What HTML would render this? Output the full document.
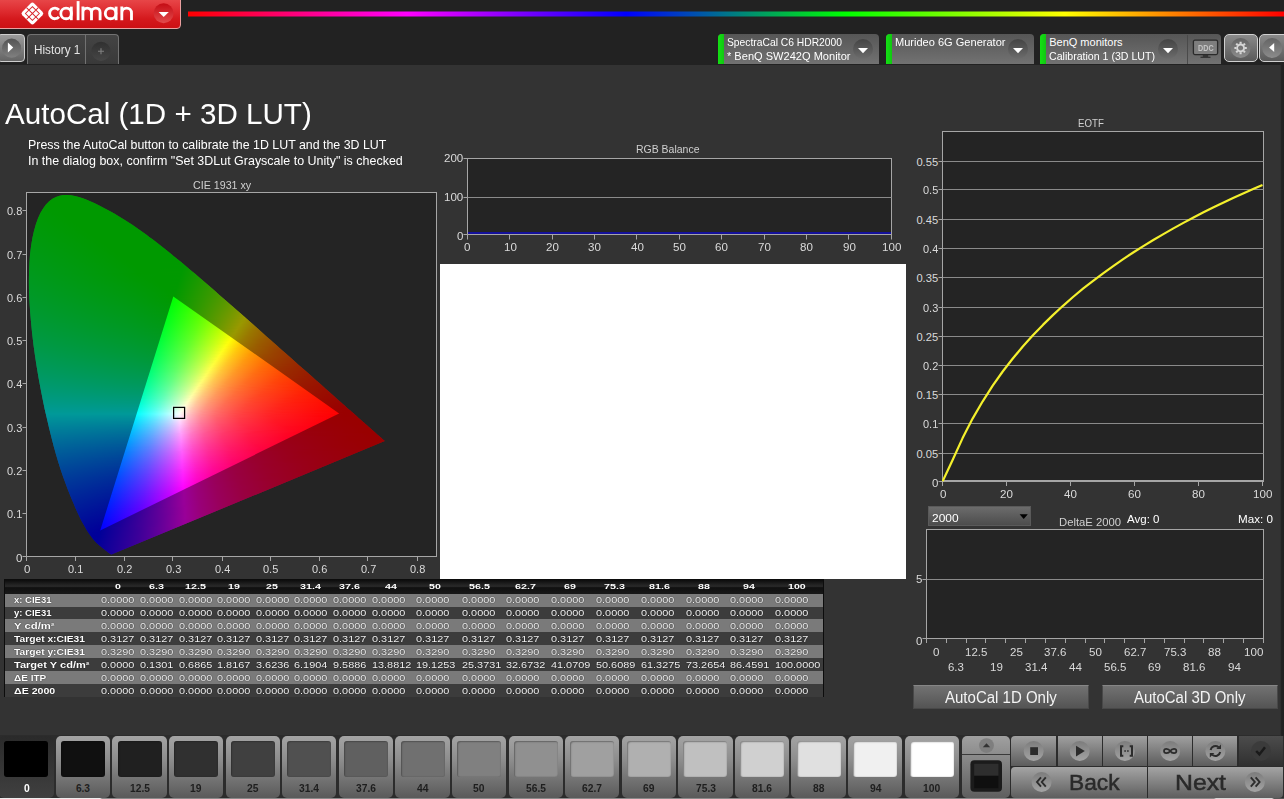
<!DOCTYPE html>
<html><head><meta charset="utf-8"><title>Calman - AutoCal (1D + 3D LUT)</title>
<style>
html,body{margin:0;padding:0;background:#333;overflow:hidden;}
html{width:1284px;height:799px;}
body{width:1284px;height:799px;position:relative;overflow:hidden;font-family:"Liberation Sans",sans-serif;}
div,span.t,svg.a{position:absolute;box-sizing:border-box;}
span.t{white-space:pre;line-height:1;transform-origin:0 0;}

.btn{background:linear-gradient(#a2a2a2,#5c5c5c);border-radius:4px;}
.circ{border-radius:50%;}

</style></head><body>
<div id="app" style="left:0;top:0;width:1284px;height:799px;overflow:hidden;">
<div style="left:0px;top:0px;width:1284px;height:65px;background:#222;"></div>
<div style="left:188px;top:11px;width:1096px;height:6px;background:linear-gradient(90deg,#f00 0%,#f0f 20%,#00f 40%,#0f0 60%,#ff0 80%,#f00 100%);opacity:.5;"></div>
<div style="left:188px;top:12px;width:1096px;height:4px;background:linear-gradient(90deg,#f00 0%,#f0f 20%,#00f 40%,#0f0 60%,#ff0 80%,#f00 100%);"></div>
<div style="left:-2px;top:-2px;width:182.8px;height:30.8px;background:linear-gradient(#e8484a 0%,#e03034 35%,#d4181c 70%,#cc1014 100%);border:1px solid #eaa0a0;border-radius:0 0 4px 0;"></div>
<svg class="a" style="left:0;top:0" width="182" height="30" viewBox="0 0 182 30">
<g transform="translate(32.4,13.5) rotate(45)">
<rect x="-8.4" y="-8.4" width="16.800" height="16.800" rx="2.6" fill="#fff"/>
<path d="M-4.9,-4.9H4.9V4.9H-4.9ZM0,-8.4V8.4M-8.4,0H8.4" fill="none" stroke="#d8262c" stroke-width="0.95"/>
</g>
<defs><linearGradient id="cg" x1="0" y1="0" x2="0" y2="1"><stop offset="0" stop-color="#c40c14"/><stop offset="1" stop-color="#e24a4c"/></linearGradient></defs>
<circle cx="163.600" cy="13.2" r="10" fill="url(#cg)"/>
<path d="M158.600,12.100h10.200l-5.100,5z" fill="#fff"/>
<g fill="none" stroke="#fff" stroke-width="2.85" aria-label="calman">
<path d="M58.960,9.990A5.300,5.300 0 1 0 58.960,16.810"/>
<circle cx="66.100" cy="13.400" r="5.300"/><path d="M71.300,6.600V20.200"/>
<path d="M78.100,1.100V20.200"/>
<path d="M82.900,20.200V6.600M82.900,12.400A4.300,4.300 0 0 1 91.500,12.400V20.200M91.500,12.400A4.300,4.300 0 0 1 100.100,12.400V20.200"/>
<circle cx="110.600" cy="13.400" r="5.300"/><path d="M116.100,6.600V20.200"/>
<path d="M121.800,20.200V6.600M121.800,12.950A4.850,4.850 0 0 1 131.500,12.950V20.200"/>
</g>
</svg>
<div style="left:-3px;top:34px;width:28px;height:27.8px;background:linear-gradient(#9a9a9a,#646464);border:1px solid #cecece;border-radius:4px;"></div>
<svg class="a" style="left:0;top:34px" width="26" height="28"><defs><linearGradient id="pg" x1="0" y1="0" x2="0" y2="1"><stop offset="0" stop-color="#545454"/><stop offset="1" stop-color="#808080"/></linearGradient></defs><circle cx="11.600" cy="14.2" r="9.600" fill="url(#pg)"/><path d="M7.900,8.400v10.200l5.300,-5.100z" fill="#fff"/></svg>
<div style="left:27px;top:34px;width:92px;height:30px;background:linear-gradient(#444,#393939);border:1px solid #727272;border-bottom:none;border-radius:4px 4px 0 0;"></div>
<div style="left:85px;top:35px;width:1px;height:29px;background:#727272;"></div>
<span class="t" style="left:33.70px;top:44.30px;font-size:12.00px;color:#e4e4e4;transform:scaleX(0.9780);">History 1</span>
<svg class="a" style="left:86px;top:36px" width="32" height="30"><defs><linearGradient id="pg2" x1="0" y1="0" x2="0" y2="1"><stop offset="0" stop-color="#303030"/><stop offset="1" stop-color="#464646"/></linearGradient></defs><circle cx="15" cy="15.3" r="9.600" fill="url(#pg2)"/><path d="M15,12.300v6M12,15.300h6" stroke="#808080" stroke-width="1.100"/></svg>
<svg class="a" width="0" height="0"><defs><linearGradient id="bg1" x1="0" y1="0" x2="0" y2="1"><stop offset="0" stop-color="#7c7c7c"/><stop offset="1" stop-color="#a4a4a4"/></linearGradient><linearGradient id="dg" x1="0" y1="0" x2="0" y2="1"><stop offset="0" stop-color="#444"/><stop offset="1" stop-color="#6c6c6c"/></linearGradient></defs></svg>
<div style="left:717.5px;top:34px;width:161.5px;height:30px;background:linear-gradient(#565656,#727272);border-radius:4px 4px 0 0;overflow:hidden;"><div style="left:0;top:0;width:6px;height:30px;background:linear-gradient(90deg,#14e014,#10c810);"></div></div>
<span class="t" style="left:726.90px;top:36.80px;font-size:11.00px;color:#fff;transform:scaleX(0.9358);">SpectraCal C6 HDR2000</span>
<span class="t" style="left:726.90px;top:50.80px;font-size:11.00px;color:#fff;transform:scaleX(1.0050);">* BenQ SW242Q Monitor</span>
<svg class="a" style="left:851.8px;top:38px" width="22" height="22"><circle cx="11" cy="11" r="10" fill="url(#dg)"/><path d="M6,10h10l-5,5.2z" fill="#fff"/></svg>
<div style="left:885.5px;top:34px;width:148.5px;height:30px;background:linear-gradient(#565656,#727272);border-radius:4px 4px 0 0;overflow:hidden;"><div style="left:0;top:0;width:6px;height:30px;background:linear-gradient(90deg,#14e014,#10c810);"></div></div>
<span class="t" style="left:894.90px;top:36.80px;font-size:11.00px;color:#fff;transform:scaleX(1.0041);">Murideo 6G Generator</span>
<svg class="a" style="left:1006.9px;top:38px" width="22" height="22"><circle cx="11" cy="11" r="10" fill="url(#dg)"/><path d="M6,10h10l-5,5.2z" fill="#fff"/></svg>
<div style="left:1039.8px;top:34px;width:181.2px;height:30px;background:linear-gradient(#565656,#727272);border-radius:4px 4px 0 0;overflow:hidden;"><div style="left:0;top:0;width:6px;height:30px;background:linear-gradient(90deg,#14e014,#10c810);"></div></div>
<span class="t" style="left:1049.20px;top:36.80px;font-size:11.00px;color:#fff;">BenQ monitors</span>
<span class="t" style="left:1049.20px;top:50.80px;font-size:11.00px;color:#fff;transform:scaleX(0.9634);">Calibration 1 (3D LUT)</span>
<svg class="a" style="left:1157px;top:38px" width="22" height="22"><circle cx="11" cy="11" r="10" fill="url(#dg)"/><path d="M6,10h10l-5,5.2z" fill="#fff"/></svg>
<div style="left:1187px;top:35px;width:1px;height:29px;background:#4a4a4a;"></div>
<svg class="a" style="left:1190px;top:38px" width="30" height="22"><rect x="3.4" y="2.2" width="24.200" height="14.400" rx="1.5" fill="#7e7e7e" stroke="#2a2a2a" stroke-width="1.3"/><path d="M10.500,19.300h10" stroke="#333" stroke-width="1.300"/><path d="M12.800,17v2h5.400V17" fill="#333"/></svg>
<span class="t" style="left:1197.60px;top:44.05px;font-size:8.50px;color:#c4c4c4;font-weight:700;transform:scaleX(0.8471);">DDC</span>
<div style="left:1224px;top:34px;width:34px;height:28px;background:linear-gradient(#8a8a8a,#5a5a5a);border:1px solid #d0d0d0;border-radius:5px;"></div>
<div style="left:1258.5px;top:34px;width:30px;height:28px;background:linear-gradient(#8a8a8a,#5a5a5a);border:1px solid #d0d0d0;border-radius:5px;"></div>
<svg class="a" style="left:1226px;top:36px" width="60" height="26">
<circle cx="14.6" cy="12" r="10" fill="url(#dg2)"/><circle cx="46.2" cy="12" r="10" fill="url(#dg2)"/><defs><linearGradient id="dg2" x1="0" y1="0" x2="0" y2="1"><stop offset="0" stop-color="#646464"/><stop offset="1" stop-color="#8c8c8c"/></linearGradient></defs>
<g transform="translate(14.6,12)" fill="none" stroke="#d8d8d8"><circle r="3.5" stroke-width="1.8"/>
<path d="M0,-4.2V-6.2M0,4.2V6.2M-4.2,0H-6.2M4.2,0H6.2M2.97,2.97L4.38,4.38M-2.97,2.97L-4.38,4.38M2.97,-2.97L4.38,-4.38M-2.97,-2.97L-4.38,-4.38" stroke-width="2.1"/></g>
<path d="M48.2,7v9.1l-5.1,-4.55z" fill="#fff"/></svg>
<span class="t" style="left:4.60px;top:100.00px;font-size:28.60px;color:#fff;transform:scaleX(1.0350);">AutoCal (1D + 3D LUT)</span>
<span class="t" style="left:27.50px;top:139.00px;font-size:12.60px;color:#fff;transform:scaleX(0.9831);">Press the AutoCal button to calibrate the 1D LUT and the 3D LUT</span>
<span class="t" style="left:27.50px;top:155.00px;font-size:12.60px;color:#fff;transform:scaleX(0.9900);">In the dialog box, confirm "Set 3DLut Grayscale to Unity" is checked</span>
<span class="t" style="left:193.10px;top:179.80px;font-size:11.00px;color:#d0d0d0;transform:scaleX(0.9713);">CIE 1931 xy</span>
<span class="t" style="left:15.50px;top:552.70px;font-size:11.20px;color:#dadada;transform:scaleX(1.0276);">0</span>
<span class="t" style="left:23.60px;top:563.70px;font-size:11.20px;color:#dadada;transform:scaleX(1.0276);">0</span>
<span class="t" style="left:6.60px;top:508.70px;font-size:11.20px;color:#dadada;transform:scaleX(0.9828);">0.1</span>
<span class="t" style="left:68.01px;top:563.70px;font-size:11.20px;color:#dadada;transform:scaleX(0.9828);">0.1</span>
<span class="t" style="left:6.60px;top:465.70px;font-size:11.20px;color:#dadada;transform:scaleX(0.9828);">0.2</span>
<span class="t" style="left:116.87px;top:563.70px;font-size:11.20px;color:#dadada;transform:scaleX(0.9828);">0.2</span>
<span class="t" style="left:6.60px;top:422.70px;font-size:11.20px;color:#dadada;transform:scaleX(0.9828);">0.3</span>
<span class="t" style="left:165.73px;top:563.70px;font-size:11.20px;color:#dadada;transform:scaleX(0.9828);">0.3</span>
<span class="t" style="left:6.60px;top:378.70px;font-size:11.20px;color:#dadada;transform:scaleX(0.9828);">0.4</span>
<span class="t" style="left:214.59px;top:563.70px;font-size:11.20px;color:#dadada;transform:scaleX(0.9828);">0.4</span>
<span class="t" style="left:6.60px;top:335.70px;font-size:11.20px;color:#dadada;transform:scaleX(0.9828);">0.5</span>
<span class="t" style="left:263.45px;top:563.70px;font-size:11.20px;color:#dadada;transform:scaleX(0.9828);">0.5</span>
<span class="t" style="left:6.60px;top:292.70px;font-size:11.20px;color:#dadada;transform:scaleX(0.9828);">0.6</span>
<span class="t" style="left:312.31px;top:563.70px;font-size:11.20px;color:#dadada;transform:scaleX(0.9828);">0.6</span>
<span class="t" style="left:6.60px;top:249.70px;font-size:11.20px;color:#dadada;transform:scaleX(0.9828);">0.7</span>
<span class="t" style="left:361.17px;top:563.70px;font-size:11.20px;color:#dadada;transform:scaleX(0.9828);">0.7</span>
<span class="t" style="left:6.60px;top:205.70px;font-size:11.20px;color:#dadada;transform:scaleX(0.9828);">0.8</span>
<span class="t" style="left:410.03px;top:563.70px;font-size:11.20px;color:#dadada;transform:scaleX(0.9828);">0.8</span>
<span class="t" style="left:444.00px;top:152.70px;font-size:11.20px;color:#dadada;transform:scaleX(1.0329);">200</span>
<span class="t" style="left:444.00px;top:191.70px;font-size:11.20px;color:#dadada;transform:scaleX(1.0329);">100</span>
<span class="t" style="left:456.90px;top:230.70px;font-size:11.20px;color:#dadada;transform:scaleX(1.0276);">0</span>
<span class="t" style="left:464.47px;top:241.70px;font-size:11.20px;color:#dadada;transform:scaleX(1.0356);">0</span>
<span class="t" style="left:503.62px;top:241.70px;font-size:11.20px;color:#dadada;transform:scaleX(1.0356);">10</span>
<span class="t" style="left:545.99px;top:241.70px;font-size:11.20px;color:#dadada;transform:scaleX(1.0356);">20</span>
<span class="t" style="left:588.36px;top:241.70px;font-size:11.20px;color:#dadada;transform:scaleX(1.0356);">30</span>
<span class="t" style="left:630.73px;top:241.70px;font-size:11.20px;color:#dadada;transform:scaleX(1.0356);">40</span>
<span class="t" style="left:673.10px;top:241.70px;font-size:11.20px;color:#dadada;transform:scaleX(1.0356);">50</span>
<span class="t" style="left:715.47px;top:241.70px;font-size:11.20px;color:#dadada;transform:scaleX(1.0356);">60</span>
<span class="t" style="left:757.84px;top:241.70px;font-size:11.20px;color:#dadada;transform:scaleX(1.0356);">70</span>
<span class="t" style="left:800.21px;top:241.70px;font-size:11.20px;color:#dadada;transform:scaleX(1.0356);">80</span>
<span class="t" style="left:842.58px;top:241.70px;font-size:11.20px;color:#dadada;transform:scaleX(1.0356);">90</span>
<span class="t" style="left:881.73px;top:241.70px;font-size:11.20px;color:#dadada;transform:scaleX(1.0356);">100</span>
<span class="t" style="left:636.05px;top:143.80px;font-size:11.00px;color:#d0d0d0;transform:scaleX(0.9528);">RGB Balance</span>
<div style="left:440px;top:264px;width:466px;height:314.5px;background:#fff;"></div>
<span class="t" style="left:931.80px;top:477.70px;font-size:11.20px;color:#dadada;transform:scaleX(1.0276);">0</span>
<span class="t" style="left:916.40px;top:448.70px;font-size:11.20px;color:#dadada;">0.05</span>
<span class="t" style="left:922.90px;top:418.70px;font-size:11.20px;color:#dadada;transform:scaleX(0.9828);">0.1</span>
<span class="t" style="left:916.40px;top:389.70px;font-size:11.20px;color:#dadada;">0.15</span>
<span class="t" style="left:922.90px;top:360.70px;font-size:11.20px;color:#dadada;transform:scaleX(0.9828);">0.2</span>
<span class="t" style="left:916.40px;top:331.70px;font-size:11.20px;color:#dadada;">0.25</span>
<span class="t" style="left:922.90px;top:302.70px;font-size:11.20px;color:#dadada;transform:scaleX(0.9828);">0.3</span>
<span class="t" style="left:916.40px;top:272.70px;font-size:11.20px;color:#dadada;">0.35</span>
<span class="t" style="left:922.90px;top:243.70px;font-size:11.20px;color:#dadada;transform:scaleX(0.9828);">0.4</span>
<span class="t" style="left:916.40px;top:214.70px;font-size:11.20px;color:#dadada;">0.45</span>
<span class="t" style="left:922.90px;top:184.70px;font-size:11.20px;color:#dadada;transform:scaleX(0.9828);">0.5</span>
<span class="t" style="left:916.40px;top:156.70px;font-size:11.20px;color:#dadada;">0.55</span>
<span class="t" style="left:939.57px;top:488.70px;font-size:11.20px;color:#dadada;transform:scaleX(1.0356);">0</span>
<span class="t" style="left:1000.35px;top:488.70px;font-size:11.20px;color:#dadada;transform:scaleX(1.0356);">20</span>
<span class="t" style="left:1064.35px;top:488.70px;font-size:11.20px;color:#dadada;transform:scaleX(1.0356);">40</span>
<span class="t" style="left:1128.35px;top:488.70px;font-size:11.20px;color:#dadada;transform:scaleX(1.0356);">60</span>
<span class="t" style="left:1192.35px;top:488.70px;font-size:11.20px;color:#dadada;transform:scaleX(1.0356);">80</span>
<span class="t" style="left:1253.12px;top:488.70px;font-size:11.20px;color:#dadada;transform:scaleX(1.0356);">100</span>
<span class="t" style="left:1077.50px;top:117.80px;font-size:11.00px;color:#d0d0d0;transform:scaleX(0.8796);">EOTF</span>
<span class="t" style="left:915.80px;top:573.70px;font-size:11.20px;color:#dadada;transform:scaleX(1.0276);">5</span>
<span class="t" style="left:915.80px;top:635.70px;font-size:11.20px;color:#dadada;transform:scaleX(1.0276);">0</span>
<span class="t" style="left:933.38px;top:646.70px;font-size:11.20px;color:#dadada;transform:scaleX(1.0356);">0</span>
<span class="t" style="left:948.49px;top:661.70px;font-size:11.20px;color:#dadada;transform:scaleX(1.0213);">6.3</span>
<span class="t" style="left:965.11px;top:646.70px;font-size:11.20px;color:#dadada;transform:scaleX(1.0254);">12.5</span>
<span class="t" style="left:989.67px;top:661.70px;font-size:11.20px;color:#dadada;transform:scaleX(1.0356);">19</span>
<span class="t" style="left:1009.51px;top:646.70px;font-size:11.20px;color:#dadada;transform:scaleX(1.0356);">25</span>
<span class="t" style="left:1024.62px;top:661.70px;font-size:11.20px;color:#dadada;transform:scaleX(1.0254);">31.4</span>
<span class="t" style="left:1044.47px;top:646.70px;font-size:11.20px;color:#dadada;transform:scaleX(1.0254);">37.6</span>
<span class="t" style="left:1069.03px;top:661.70px;font-size:11.20px;color:#dadada;transform:scaleX(1.0356);">44</span>
<span class="t" style="left:1088.87px;top:646.70px;font-size:11.20px;color:#dadada;transform:scaleX(1.0356);">50</span>
<span class="t" style="left:1103.99px;top:661.70px;font-size:11.20px;color:#dadada;transform:scaleX(1.0254);">56.5</span>
<span class="t" style="left:1123.83px;top:646.70px;font-size:11.20px;color:#dadada;transform:scaleX(1.0254);">62.7</span>
<span class="t" style="left:1148.39px;top:661.70px;font-size:11.20px;color:#dadada;transform:scaleX(1.0356);">69</span>
<span class="t" style="left:1163.51px;top:646.70px;font-size:11.20px;color:#dadada;transform:scaleX(1.0254);">75.3</span>
<span class="t" style="left:1183.35px;top:661.70px;font-size:11.20px;color:#dadada;transform:scaleX(1.0254);">81.6</span>
<span class="t" style="left:1207.91px;top:646.70px;font-size:11.20px;color:#dadada;transform:scaleX(1.0356);">88</span>
<span class="t" style="left:1227.75px;top:661.70px;font-size:11.20px;color:#dadada;transform:scaleX(1.0356);">94</span>
<span class="t" style="left:1244.37px;top:646.70px;font-size:11.20px;color:#dadada;transform:scaleX(1.0356);">100</span>
<span class="t" style="left:1059.40px;top:516.80px;font-size:11.00px;color:#d0d0d0;transform:scaleX(1.0241);">DeltaE 2000</span>
<span class="t" style="left:1126.80px;top:512.95px;font-size:11.70px;color:#fff;transform:scaleX(0.9862);">Avg: 0</span>
<span class="t" style="left:1238.20px;top:512.95px;font-size:11.70px;color:#fff;transform:scaleX(0.9969);">Max: 0</span>
<div style="left:928px;top:506px;width:103px;height:19.5px;background:linear-gradient(#6c6c6c,#4c4c4c);border:1px solid #5a5a5a;"></div>
<span class="t" style="left:931.80px;top:511.95px;font-size:11.70px;color:#fff;transform:scaleX(1.0221);">2000</span>
<div style="left:912.5px;top:685px;width:176.5px;height:24px;background:linear-gradient(#727272,#545454);border:1px solid #484848;border-top-color:#868686;"></div>
<div style="left:1101.5px;top:685px;width:176px;height:24px;background:linear-gradient(#727272,#545454);border:1px solid #484848;border-top-color:#868686;"></div>
<span class="t" style="left:945.00px;top:689.80px;font-size:16.00px;color:#f4f4f4;transform:scaleX(0.9382);">AutoCal 1D Only</span>
<span class="t" style="left:1134.00px;top:689.80px;font-size:16.00px;color:#f4f4f4;transform:scaleX(0.9357);">AutoCal 3D Only</span>
<div style="left:4px;top:579px;width:820px;height:118px;background:#0c0c0c;"></div>
<div style="left:5px;top:579.5px;width:818px;height:14.5px;background:linear-gradient(#0c0c0c 0%,#2a2a2a 45%,#101010 55%,#181818 100%);"></div>
<span class="t" style="left:114.85px;top:583.20px;font-size:7.20px;color:#fff;font-weight:700;transform:scaleX(1.4736);">0</span>
<span class="t" style="left:148.50px;top:583.20px;font-size:7.20px;color:#fff;font-weight:700;transform:scaleX(1.4988);">6.3</span>
<span class="t" style="left:184.55px;top:583.20px;font-size:7.20px;color:#fff;font-weight:700;transform:scaleX(1.4916);">12.5</span>
<span class="t" style="left:227.70px;top:583.20px;font-size:7.20px;color:#fff;font-weight:700;transform:scaleX(1.4736);">19</span>
<span class="t" style="left:266.30px;top:583.20px;font-size:7.20px;color:#fff;font-weight:700;transform:scaleX(1.4736);">25</span>
<span class="t" style="left:300.35px;top:583.20px;font-size:7.20px;color:#fff;font-weight:700;transform:scaleX(1.4916);">31.4</span>
<span class="t" style="left:338.95px;top:583.20px;font-size:7.20px;color:#fff;font-weight:700;transform:scaleX(1.4916);">37.6</span>
<span class="t" style="left:385.30px;top:583.20px;font-size:7.20px;color:#fff;font-weight:700;transform:scaleX(1.4736);">44</span>
<span class="t" style="left:429.40px;top:583.20px;font-size:7.20px;color:#fff;font-weight:700;transform:scaleX(1.4736);">50</span>
<span class="t" style="left:469.35px;top:583.20px;font-size:7.20px;color:#fff;font-weight:700;transform:scaleX(1.4916);">56.5</span>
<span class="t" style="left:514.95px;top:583.20px;font-size:7.20px;color:#fff;font-weight:700;transform:scaleX(1.4916);">62.7</span>
<span class="t" style="left:564.40px;top:583.20px;font-size:7.20px;color:#fff;font-weight:700;transform:scaleX(1.4736);">69</span>
<span class="t" style="left:604.05px;top:583.20px;font-size:7.20px;color:#fff;font-weight:700;transform:scaleX(1.4916);">75.3</span>
<span class="t" style="left:648.95px;top:583.20px;font-size:7.20px;color:#fff;font-weight:700;transform:scaleX(1.4916);">81.6</span>
<span class="t" style="left:698.40px;top:583.20px;font-size:7.20px;color:#fff;font-weight:700;transform:scaleX(1.4736);">88</span>
<span class="t" style="left:743.00px;top:583.20px;font-size:7.20px;color:#fff;font-weight:700;transform:scaleX(1.4736);">94</span>
<span class="t" style="left:787.95px;top:583.20px;font-size:7.20px;color:#fff;font-weight:700;transform:scaleX(1.4736);">100</span>
<div style="left:5px;top:594px;width:818px;height:13px;background:#7a7a7a;"></div>
<span class="t" style="left:13.80px;top:596.00px;font-size:8.60px;color:#fff;font-weight:700;transform:scaleX(1.1050);text-shadow:0 0 1px #000;">x: CIE31</span>
<span class="t" style="left:100.80px;top:595.65px;font-size:9.30px;color:#f2f2f2;transform:scaleX(1.1708);text-shadow:0 0 1px #000;">0.0000</span>
<span class="t" style="left:140.00px;top:595.65px;font-size:9.30px;color:#f2f2f2;transform:scaleX(1.1708);text-shadow:0 0 1px #000;">0.0000</span>
<span class="t" style="left:178.60px;top:595.65px;font-size:9.30px;color:#f2f2f2;transform:scaleX(1.1708);text-shadow:0 0 1px #000;">0.0000</span>
<span class="t" style="left:217.20px;top:595.65px;font-size:9.30px;color:#f2f2f2;transform:scaleX(1.1708);text-shadow:0 0 1px #000;">0.0000</span>
<span class="t" style="left:255.80px;top:595.65px;font-size:9.30px;color:#f2f2f2;transform:scaleX(1.1708);text-shadow:0 0 1px #000;">0.0000</span>
<span class="t" style="left:294.40px;top:595.65px;font-size:9.30px;color:#f2f2f2;transform:scaleX(1.1708);text-shadow:0 0 1px #000;">0.0000</span>
<span class="t" style="left:333.00px;top:595.65px;font-size:9.30px;color:#f2f2f2;transform:scaleX(1.1708);text-shadow:0 0 1px #000;">0.0000</span>
<span class="t" style="left:371.60px;top:595.65px;font-size:9.30px;color:#f2f2f2;transform:scaleX(1.1708);text-shadow:0 0 1px #000;">0.0000</span>
<span class="t" style="left:416.40px;top:595.65px;font-size:9.30px;color:#f2f2f2;transform:scaleX(1.1708);text-shadow:0 0 1px #000;">0.0000</span>
<span class="t" style="left:461.70px;top:595.65px;font-size:9.30px;color:#f2f2f2;transform:scaleX(1.1708);text-shadow:0 0 1px #000;">0.0000</span>
<span class="t" style="left:506.20px;top:595.65px;font-size:9.30px;color:#f2f2f2;transform:scaleX(1.1708);text-shadow:0 0 1px #000;">0.0000</span>
<span class="t" style="left:550.80px;top:595.65px;font-size:9.30px;color:#f2f2f2;transform:scaleX(1.1708);text-shadow:0 0 1px #000;">0.0000</span>
<span class="t" style="left:595.70px;top:595.65px;font-size:9.30px;color:#f2f2f2;transform:scaleX(1.1708);text-shadow:0 0 1px #000;">0.0000</span>
<span class="t" style="left:640.60px;top:595.65px;font-size:9.30px;color:#f2f2f2;transform:scaleX(1.1708);text-shadow:0 0 1px #000;">0.0000</span>
<span class="t" style="left:685.50px;top:595.65px;font-size:9.30px;color:#f2f2f2;transform:scaleX(1.1708);text-shadow:0 0 1px #000;">0.0000</span>
<span class="t" style="left:730.00px;top:595.65px;font-size:9.30px;color:#f2f2f2;transform:scaleX(1.1708);text-shadow:0 0 1px #000;">0.0000</span>
<span class="t" style="left:775.30px;top:595.65px;font-size:9.30px;color:#f2f2f2;transform:scaleX(1.1708);text-shadow:0 0 1px #000;">0.0000</span>
<div style="left:5px;top:607px;width:818px;height:12px;background:#3c3c3c;"></div>
<span class="t" style="left:13.80px;top:609.00px;font-size:8.60px;color:#fff;font-weight:700;transform:scaleX(1.1050);text-shadow:0 0 1px #000;">y: CIE31</span>
<span class="t" style="left:100.80px;top:608.65px;font-size:9.30px;color:#f2f2f2;transform:scaleX(1.1708);text-shadow:0 0 1px #000;">0.0000</span>
<span class="t" style="left:140.00px;top:608.65px;font-size:9.30px;color:#f2f2f2;transform:scaleX(1.1708);text-shadow:0 0 1px #000;">0.0000</span>
<span class="t" style="left:178.60px;top:608.65px;font-size:9.30px;color:#f2f2f2;transform:scaleX(1.1708);text-shadow:0 0 1px #000;">0.0000</span>
<span class="t" style="left:217.20px;top:608.65px;font-size:9.30px;color:#f2f2f2;transform:scaleX(1.1708);text-shadow:0 0 1px #000;">0.0000</span>
<span class="t" style="left:255.80px;top:608.65px;font-size:9.30px;color:#f2f2f2;transform:scaleX(1.1708);text-shadow:0 0 1px #000;">0.0000</span>
<span class="t" style="left:294.40px;top:608.65px;font-size:9.30px;color:#f2f2f2;transform:scaleX(1.1708);text-shadow:0 0 1px #000;">0.0000</span>
<span class="t" style="left:333.00px;top:608.65px;font-size:9.30px;color:#f2f2f2;transform:scaleX(1.1708);text-shadow:0 0 1px #000;">0.0000</span>
<span class="t" style="left:371.60px;top:608.65px;font-size:9.30px;color:#f2f2f2;transform:scaleX(1.1708);text-shadow:0 0 1px #000;">0.0000</span>
<span class="t" style="left:416.40px;top:608.65px;font-size:9.30px;color:#f2f2f2;transform:scaleX(1.1708);text-shadow:0 0 1px #000;">0.0000</span>
<span class="t" style="left:461.70px;top:608.65px;font-size:9.30px;color:#f2f2f2;transform:scaleX(1.1708);text-shadow:0 0 1px #000;">0.0000</span>
<span class="t" style="left:506.20px;top:608.65px;font-size:9.30px;color:#f2f2f2;transform:scaleX(1.1708);text-shadow:0 0 1px #000;">0.0000</span>
<span class="t" style="left:550.80px;top:608.65px;font-size:9.30px;color:#f2f2f2;transform:scaleX(1.1708);text-shadow:0 0 1px #000;">0.0000</span>
<span class="t" style="left:595.70px;top:608.65px;font-size:9.30px;color:#f2f2f2;transform:scaleX(1.1708);text-shadow:0 0 1px #000;">0.0000</span>
<span class="t" style="left:640.60px;top:608.65px;font-size:9.30px;color:#f2f2f2;transform:scaleX(1.1708);text-shadow:0 0 1px #000;">0.0000</span>
<span class="t" style="left:685.50px;top:608.65px;font-size:9.30px;color:#f2f2f2;transform:scaleX(1.1708);text-shadow:0 0 1px #000;">0.0000</span>
<span class="t" style="left:730.00px;top:608.65px;font-size:9.30px;color:#f2f2f2;transform:scaleX(1.1708);text-shadow:0 0 1px #000;">0.0000</span>
<span class="t" style="left:775.30px;top:608.65px;font-size:9.30px;color:#f2f2f2;transform:scaleX(1.1708);text-shadow:0 0 1px #000;">0.0000</span>
<div style="left:5px;top:619px;width:818px;height:13px;background:#7a7a7a;"></div>
<span class="t" style="left:13.80px;top:622.00px;font-size:8.60px;color:#fff;font-weight:700;transform:scaleX(1.3137);text-shadow:0 0 1px #000;">Y cd/m²</span>
<span class="t" style="left:100.80px;top:621.65px;font-size:9.30px;color:#f2f2f2;transform:scaleX(1.1708);text-shadow:0 0 1px #000;">0.0000</span>
<span class="t" style="left:140.00px;top:621.65px;font-size:9.30px;color:#f2f2f2;transform:scaleX(1.1708);text-shadow:0 0 1px #000;">0.0000</span>
<span class="t" style="left:178.60px;top:621.65px;font-size:9.30px;color:#f2f2f2;transform:scaleX(1.1708);text-shadow:0 0 1px #000;">0.0000</span>
<span class="t" style="left:217.20px;top:621.65px;font-size:9.30px;color:#f2f2f2;transform:scaleX(1.1708);text-shadow:0 0 1px #000;">0.0000</span>
<span class="t" style="left:255.80px;top:621.65px;font-size:9.30px;color:#f2f2f2;transform:scaleX(1.1708);text-shadow:0 0 1px #000;">0.0000</span>
<span class="t" style="left:294.40px;top:621.65px;font-size:9.30px;color:#f2f2f2;transform:scaleX(1.1708);text-shadow:0 0 1px #000;">0.0000</span>
<span class="t" style="left:333.00px;top:621.65px;font-size:9.30px;color:#f2f2f2;transform:scaleX(1.1708);text-shadow:0 0 1px #000;">0.0000</span>
<span class="t" style="left:371.60px;top:621.65px;font-size:9.30px;color:#f2f2f2;transform:scaleX(1.1708);text-shadow:0 0 1px #000;">0.0000</span>
<span class="t" style="left:416.40px;top:621.65px;font-size:9.30px;color:#f2f2f2;transform:scaleX(1.1708);text-shadow:0 0 1px #000;">0.0000</span>
<span class="t" style="left:461.70px;top:621.65px;font-size:9.30px;color:#f2f2f2;transform:scaleX(1.1708);text-shadow:0 0 1px #000;">0.0000</span>
<span class="t" style="left:506.20px;top:621.65px;font-size:9.30px;color:#f2f2f2;transform:scaleX(1.1708);text-shadow:0 0 1px #000;">0.0000</span>
<span class="t" style="left:550.80px;top:621.65px;font-size:9.30px;color:#f2f2f2;transform:scaleX(1.1708);text-shadow:0 0 1px #000;">0.0000</span>
<span class="t" style="left:595.70px;top:621.65px;font-size:9.30px;color:#f2f2f2;transform:scaleX(1.1708);text-shadow:0 0 1px #000;">0.0000</span>
<span class="t" style="left:640.60px;top:621.65px;font-size:9.30px;color:#f2f2f2;transform:scaleX(1.1708);text-shadow:0 0 1px #000;">0.0000</span>
<span class="t" style="left:685.50px;top:621.65px;font-size:9.30px;color:#f2f2f2;transform:scaleX(1.1708);text-shadow:0 0 1px #000;">0.0000</span>
<span class="t" style="left:730.00px;top:621.65px;font-size:9.30px;color:#f2f2f2;transform:scaleX(1.1708);text-shadow:0 0 1px #000;">0.0000</span>
<span class="t" style="left:775.30px;top:621.65px;font-size:9.30px;color:#f2f2f2;transform:scaleX(1.1708);text-shadow:0 0 1px #000;">0.0000</span>
<div style="left:5px;top:632px;width:818px;height:13px;background:#3c3c3c;"></div>
<span class="t" style="left:13.80px;top:635.00px;font-size:8.60px;color:#fff;font-weight:700;transform:scaleX(1.1917);text-shadow:0 0 1px #000;">Target x:CIE31</span>
<span class="t" style="left:100.80px;top:634.65px;font-size:9.30px;color:#f2f2f2;transform:scaleX(1.1708);text-shadow:0 0 1px #000;">0.3127</span>
<span class="t" style="left:140.00px;top:634.65px;font-size:9.30px;color:#f2f2f2;transform:scaleX(1.1708);text-shadow:0 0 1px #000;">0.3127</span>
<span class="t" style="left:178.60px;top:634.65px;font-size:9.30px;color:#f2f2f2;transform:scaleX(1.1708);text-shadow:0 0 1px #000;">0.3127</span>
<span class="t" style="left:217.20px;top:634.65px;font-size:9.30px;color:#f2f2f2;transform:scaleX(1.1708);text-shadow:0 0 1px #000;">0.3127</span>
<span class="t" style="left:255.80px;top:634.65px;font-size:9.30px;color:#f2f2f2;transform:scaleX(1.1708);text-shadow:0 0 1px #000;">0.3127</span>
<span class="t" style="left:294.40px;top:634.65px;font-size:9.30px;color:#f2f2f2;transform:scaleX(1.1708);text-shadow:0 0 1px #000;">0.3127</span>
<span class="t" style="left:333.00px;top:634.65px;font-size:9.30px;color:#f2f2f2;transform:scaleX(1.1708);text-shadow:0 0 1px #000;">0.3127</span>
<span class="t" style="left:371.60px;top:634.65px;font-size:9.30px;color:#f2f2f2;transform:scaleX(1.1708);text-shadow:0 0 1px #000;">0.3127</span>
<span class="t" style="left:416.40px;top:634.65px;font-size:9.30px;color:#f2f2f2;transform:scaleX(1.1708);text-shadow:0 0 1px #000;">0.3127</span>
<span class="t" style="left:461.70px;top:634.65px;font-size:9.30px;color:#f2f2f2;transform:scaleX(1.1708);text-shadow:0 0 1px #000;">0.3127</span>
<span class="t" style="left:506.20px;top:634.65px;font-size:9.30px;color:#f2f2f2;transform:scaleX(1.1708);text-shadow:0 0 1px #000;">0.3127</span>
<span class="t" style="left:550.80px;top:634.65px;font-size:9.30px;color:#f2f2f2;transform:scaleX(1.1708);text-shadow:0 0 1px #000;">0.3127</span>
<span class="t" style="left:595.70px;top:634.65px;font-size:9.30px;color:#f2f2f2;transform:scaleX(1.1708);text-shadow:0 0 1px #000;">0.3127</span>
<span class="t" style="left:640.60px;top:634.65px;font-size:9.30px;color:#f2f2f2;transform:scaleX(1.1708);text-shadow:0 0 1px #000;">0.3127</span>
<span class="t" style="left:685.50px;top:634.65px;font-size:9.30px;color:#f2f2f2;transform:scaleX(1.1708);text-shadow:0 0 1px #000;">0.3127</span>
<span class="t" style="left:730.00px;top:634.65px;font-size:9.30px;color:#f2f2f2;transform:scaleX(1.1708);text-shadow:0 0 1px #000;">0.3127</span>
<span class="t" style="left:775.30px;top:634.65px;font-size:9.30px;color:#f2f2f2;transform:scaleX(1.1708);text-shadow:0 0 1px #000;">0.3127</span>
<div style="left:5px;top:645px;width:818px;height:13px;background:#7a7a7a;"></div>
<span class="t" style="left:13.80px;top:648.00px;font-size:8.60px;color:#fff;font-weight:700;transform:scaleX(1.1917);text-shadow:0 0 1px #000;">Target y:CIE31</span>
<span class="t" style="left:100.80px;top:647.65px;font-size:9.30px;color:#f2f2f2;transform:scaleX(1.1708);text-shadow:0 0 1px #000;">0.3290</span>
<span class="t" style="left:140.00px;top:647.65px;font-size:9.30px;color:#f2f2f2;transform:scaleX(1.1708);text-shadow:0 0 1px #000;">0.3290</span>
<span class="t" style="left:178.60px;top:647.65px;font-size:9.30px;color:#f2f2f2;transform:scaleX(1.1708);text-shadow:0 0 1px #000;">0.3290</span>
<span class="t" style="left:217.20px;top:647.65px;font-size:9.30px;color:#f2f2f2;transform:scaleX(1.1708);text-shadow:0 0 1px #000;">0.3290</span>
<span class="t" style="left:255.80px;top:647.65px;font-size:9.30px;color:#f2f2f2;transform:scaleX(1.1708);text-shadow:0 0 1px #000;">0.3290</span>
<span class="t" style="left:294.40px;top:647.65px;font-size:9.30px;color:#f2f2f2;transform:scaleX(1.1708);text-shadow:0 0 1px #000;">0.3290</span>
<span class="t" style="left:333.00px;top:647.65px;font-size:9.30px;color:#f2f2f2;transform:scaleX(1.1708);text-shadow:0 0 1px #000;">0.3290</span>
<span class="t" style="left:371.60px;top:647.65px;font-size:9.30px;color:#f2f2f2;transform:scaleX(1.1708);text-shadow:0 0 1px #000;">0.3290</span>
<span class="t" style="left:416.40px;top:647.65px;font-size:9.30px;color:#f2f2f2;transform:scaleX(1.1708);text-shadow:0 0 1px #000;">0.3290</span>
<span class="t" style="left:461.70px;top:647.65px;font-size:9.30px;color:#f2f2f2;transform:scaleX(1.1708);text-shadow:0 0 1px #000;">0.3290</span>
<span class="t" style="left:506.20px;top:647.65px;font-size:9.30px;color:#f2f2f2;transform:scaleX(1.1708);text-shadow:0 0 1px #000;">0.3290</span>
<span class="t" style="left:550.80px;top:647.65px;font-size:9.30px;color:#f2f2f2;transform:scaleX(1.1708);text-shadow:0 0 1px #000;">0.3290</span>
<span class="t" style="left:595.70px;top:647.65px;font-size:9.30px;color:#f2f2f2;transform:scaleX(1.1708);text-shadow:0 0 1px #000;">0.3290</span>
<span class="t" style="left:640.60px;top:647.65px;font-size:9.30px;color:#f2f2f2;transform:scaleX(1.1708);text-shadow:0 0 1px #000;">0.3290</span>
<span class="t" style="left:685.50px;top:647.65px;font-size:9.30px;color:#f2f2f2;transform:scaleX(1.1708);text-shadow:0 0 1px #000;">0.3290</span>
<span class="t" style="left:730.00px;top:647.65px;font-size:9.30px;color:#f2f2f2;transform:scaleX(1.1708);text-shadow:0 0 1px #000;">0.3290</span>
<span class="t" style="left:775.30px;top:647.65px;font-size:9.30px;color:#f2f2f2;transform:scaleX(1.1708);text-shadow:0 0 1px #000;">0.3290</span>
<div style="left:5px;top:658px;width:818px;height:13px;background:#3c3c3c;"></div>
<span class="t" style="left:13.80px;top:661.00px;font-size:8.60px;color:#fff;font-weight:700;transform:scaleX(1.2844);text-shadow:0 0 1px #000;">Target Y cd/m²</span>
<span class="t" style="left:100.80px;top:660.65px;font-size:9.30px;color:#f2f2f2;transform:scaleX(1.1708);text-shadow:0 0 1px #000;">0.0000</span>
<span class="t" style="left:140.00px;top:660.65px;font-size:9.30px;color:#f2f2f2;transform:scaleX(1.1708);text-shadow:0 0 1px #000;">0.1301</span>
<span class="t" style="left:178.60px;top:660.65px;font-size:9.30px;color:#f2f2f2;transform:scaleX(1.1708);text-shadow:0 0 1px #000;">0.6865</span>
<span class="t" style="left:217.20px;top:660.65px;font-size:9.30px;color:#f2f2f2;transform:scaleX(1.1708);text-shadow:0 0 1px #000;">1.8167</span>
<span class="t" style="left:255.80px;top:660.65px;font-size:9.30px;color:#f2f2f2;transform:scaleX(1.1708);text-shadow:0 0 1px #000;">3.6236</span>
<span class="t" style="left:294.40px;top:660.65px;font-size:9.30px;color:#f2f2f2;transform:scaleX(1.1708);text-shadow:0 0 1px #000;">6.1904</span>
<span class="t" style="left:333.00px;top:660.65px;font-size:9.30px;color:#f2f2f2;transform:scaleX(1.1708);text-shadow:0 0 1px #000;">9.5886</span>
<span class="t" style="left:371.60px;top:660.65px;font-size:9.30px;color:#f2f2f2;transform:scaleX(1.1686);text-shadow:0 0 1px #000;">13.8812</span>
<span class="t" style="left:416.40px;top:660.65px;font-size:9.30px;color:#f2f2f2;transform:scaleX(1.1686);text-shadow:0 0 1px #000;">19.1253</span>
<span class="t" style="left:461.70px;top:660.65px;font-size:9.30px;color:#f2f2f2;transform:scaleX(1.1686);text-shadow:0 0 1px #000;">25.3731</span>
<span class="t" style="left:506.20px;top:660.65px;font-size:9.30px;color:#f2f2f2;transform:scaleX(1.1686);text-shadow:0 0 1px #000;">32.6732</span>
<span class="t" style="left:550.80px;top:660.65px;font-size:9.30px;color:#f2f2f2;transform:scaleX(1.1686);text-shadow:0 0 1px #000;">41.0709</span>
<span class="t" style="left:595.70px;top:660.65px;font-size:9.30px;color:#f2f2f2;transform:scaleX(1.1686);text-shadow:0 0 1px #000;">50.6089</span>
<span class="t" style="left:640.60px;top:660.65px;font-size:9.30px;color:#f2f2f2;transform:scaleX(1.1686);text-shadow:0 0 1px #000;">61.3275</span>
<span class="t" style="left:685.50px;top:660.65px;font-size:9.30px;color:#f2f2f2;transform:scaleX(1.1686);text-shadow:0 0 1px #000;">73.2654</span>
<span class="t" style="left:730.00px;top:660.65px;font-size:9.30px;color:#f2f2f2;transform:scaleX(1.1686);text-shadow:0 0 1px #000;">86.4591</span>
<span class="t" style="left:775.30px;top:660.65px;font-size:9.30px;color:#f2f2f2;transform:scaleX(1.1669);text-shadow:0 0 1px #000;">100.0000</span>
<div style="left:5px;top:671px;width:818px;height:13px;background:#7a7a7a;"></div>
<span class="t" style="left:13.80px;top:674.00px;font-size:8.60px;color:#fff;font-weight:700;transform:scaleX(1.1667);text-shadow:0 0 1px #000;">ΔE ITP</span>
<span class="t" style="left:100.80px;top:673.65px;font-size:9.30px;color:#f2f2f2;transform:scaleX(1.1708);text-shadow:0 0 1px #000;">0.0000</span>
<span class="t" style="left:140.00px;top:673.65px;font-size:9.30px;color:#f2f2f2;transform:scaleX(1.1708);text-shadow:0 0 1px #000;">0.0000</span>
<span class="t" style="left:178.60px;top:673.65px;font-size:9.30px;color:#f2f2f2;transform:scaleX(1.1708);text-shadow:0 0 1px #000;">0.0000</span>
<span class="t" style="left:217.20px;top:673.65px;font-size:9.30px;color:#f2f2f2;transform:scaleX(1.1708);text-shadow:0 0 1px #000;">0.0000</span>
<span class="t" style="left:255.80px;top:673.65px;font-size:9.30px;color:#f2f2f2;transform:scaleX(1.1708);text-shadow:0 0 1px #000;">0.0000</span>
<span class="t" style="left:294.40px;top:673.65px;font-size:9.30px;color:#f2f2f2;transform:scaleX(1.1708);text-shadow:0 0 1px #000;">0.0000</span>
<span class="t" style="left:333.00px;top:673.65px;font-size:9.30px;color:#f2f2f2;transform:scaleX(1.1708);text-shadow:0 0 1px #000;">0.0000</span>
<span class="t" style="left:371.60px;top:673.65px;font-size:9.30px;color:#f2f2f2;transform:scaleX(1.1708);text-shadow:0 0 1px #000;">0.0000</span>
<span class="t" style="left:416.40px;top:673.65px;font-size:9.30px;color:#f2f2f2;transform:scaleX(1.1708);text-shadow:0 0 1px #000;">0.0000</span>
<span class="t" style="left:461.70px;top:673.65px;font-size:9.30px;color:#f2f2f2;transform:scaleX(1.1708);text-shadow:0 0 1px #000;">0.0000</span>
<span class="t" style="left:506.20px;top:673.65px;font-size:9.30px;color:#f2f2f2;transform:scaleX(1.1708);text-shadow:0 0 1px #000;">0.0000</span>
<span class="t" style="left:550.80px;top:673.65px;font-size:9.30px;color:#f2f2f2;transform:scaleX(1.1708);text-shadow:0 0 1px #000;">0.0000</span>
<span class="t" style="left:595.70px;top:673.65px;font-size:9.30px;color:#f2f2f2;transform:scaleX(1.1708);text-shadow:0 0 1px #000;">0.0000</span>
<span class="t" style="left:640.60px;top:673.65px;font-size:9.30px;color:#f2f2f2;transform:scaleX(1.1708);text-shadow:0 0 1px #000;">0.0000</span>
<span class="t" style="left:685.50px;top:673.65px;font-size:9.30px;color:#f2f2f2;transform:scaleX(1.1708);text-shadow:0 0 1px #000;">0.0000</span>
<span class="t" style="left:730.00px;top:673.65px;font-size:9.30px;color:#f2f2f2;transform:scaleX(1.1708);text-shadow:0 0 1px #000;">0.0000</span>
<span class="t" style="left:775.30px;top:673.65px;font-size:9.30px;color:#f2f2f2;transform:scaleX(1.1708);text-shadow:0 0 1px #000;">0.0000</span>
<div style="left:5px;top:684px;width:818px;height:13px;background:#3c3c3c;"></div>
<span class="t" style="left:13.80px;top:687.00px;font-size:8.60px;color:#fff;font-weight:700;transform:scaleX(1.2352);text-shadow:0 0 1px #000;">ΔE 2000</span>
<span class="t" style="left:100.80px;top:686.65px;font-size:9.30px;color:#f2f2f2;transform:scaleX(1.1708);text-shadow:0 0 1px #000;">0.0000</span>
<span class="t" style="left:140.00px;top:686.65px;font-size:9.30px;color:#f2f2f2;transform:scaleX(1.1708);text-shadow:0 0 1px #000;">0.0000</span>
<span class="t" style="left:178.60px;top:686.65px;font-size:9.30px;color:#f2f2f2;transform:scaleX(1.1708);text-shadow:0 0 1px #000;">0.0000</span>
<span class="t" style="left:217.20px;top:686.65px;font-size:9.30px;color:#f2f2f2;transform:scaleX(1.1708);text-shadow:0 0 1px #000;">0.0000</span>
<span class="t" style="left:255.80px;top:686.65px;font-size:9.30px;color:#f2f2f2;transform:scaleX(1.1708);text-shadow:0 0 1px #000;">0.0000</span>
<span class="t" style="left:294.40px;top:686.65px;font-size:9.30px;color:#f2f2f2;transform:scaleX(1.1708);text-shadow:0 0 1px #000;">0.0000</span>
<span class="t" style="left:333.00px;top:686.65px;font-size:9.30px;color:#f2f2f2;transform:scaleX(1.1708);text-shadow:0 0 1px #000;">0.0000</span>
<span class="t" style="left:371.60px;top:686.65px;font-size:9.30px;color:#f2f2f2;transform:scaleX(1.1708);text-shadow:0 0 1px #000;">0.0000</span>
<span class="t" style="left:416.40px;top:686.65px;font-size:9.30px;color:#f2f2f2;transform:scaleX(1.1708);text-shadow:0 0 1px #000;">0.0000</span>
<span class="t" style="left:461.70px;top:686.65px;font-size:9.30px;color:#f2f2f2;transform:scaleX(1.1708);text-shadow:0 0 1px #000;">0.0000</span>
<span class="t" style="left:506.20px;top:686.65px;font-size:9.30px;color:#f2f2f2;transform:scaleX(1.1708);text-shadow:0 0 1px #000;">0.0000</span>
<span class="t" style="left:550.80px;top:686.65px;font-size:9.30px;color:#f2f2f2;transform:scaleX(1.1708);text-shadow:0 0 1px #000;">0.0000</span>
<span class="t" style="left:595.70px;top:686.65px;font-size:9.30px;color:#f2f2f2;transform:scaleX(1.1708);text-shadow:0 0 1px #000;">0.0000</span>
<span class="t" style="left:640.60px;top:686.65px;font-size:9.30px;color:#f2f2f2;transform:scaleX(1.1708);text-shadow:0 0 1px #000;">0.0000</span>
<span class="t" style="left:685.50px;top:686.65px;font-size:9.30px;color:#f2f2f2;transform:scaleX(1.1708);text-shadow:0 0 1px #000;">0.0000</span>
<span class="t" style="left:730.00px;top:686.65px;font-size:9.30px;color:#f2f2f2;transform:scaleX(1.1708);text-shadow:0 0 1px #000;">0.0000</span>
<span class="t" style="left:775.30px;top:686.65px;font-size:9.30px;color:#f2f2f2;transform:scaleX(1.1708);text-shadow:0 0 1px #000;">0.0000</span>
<div style="left:0px;top:735px;width:1284px;height:64px;background:#2c2c2c;"></div>
<div style="left:-0.8px;top:736px;width:54.3px;height:61.5px;background:linear-gradient(#2a2a2a,#404040);border-radius:5px;"></div>
<div style="left:4.4px;top:741px;width:44px;height:36px;background:rgb(0,0,0);border-radius:3px;box-shadow:inset 1px 1px 1.5px rgba(0,0,0,0.15),inset -0.5px -0.5px 1px rgba(0,0,0,0.12);"></div>
<span class="t" style="left:23.52px;top:783.70px;font-size:10.20px;color:#fff;font-weight:700;transform:scaleX(1.0137);">0</span>
<div style="left:55.79px;top:736px;width:54.3px;height:61.5px;background:linear-gradient(#a4a4a4 0%,#8c8c8c 40%,#5a5a5a 100%);border-radius:5px;"></div>
<div style="left:60.99px;top:741px;width:44px;height:36px;background:rgb(16,16,16);border-radius:3px;box-shadow:inset 1px 1px 1.5px rgba(0,0,0,0.17),inset -0.5px -0.5px 1px rgba(0,0,0,0.12);"></div>
<span class="t" style="left:75.89px;top:783.70px;font-size:10.20px;color:#1e1e1e;font-weight:700;">6.3</span>
<div style="left:112.38px;top:736px;width:54.3px;height:61.5px;background:linear-gradient(#a4a4a4 0%,#8c8c8c 40%,#5a5a5a 100%);border-radius:5px;"></div>
<div style="left:117.58px;top:741px;width:44px;height:36px;background:rgb(32,32,32);border-radius:3px;box-shadow:inset 1px 1px 1.5px rgba(0,0,0,0.19),inset -0.5px -0.5px 1px rgba(0,0,0,0.12);"></div>
<span class="t" style="left:129.61px;top:783.70px;font-size:10.20px;color:#1e1e1e;font-weight:700;transform:scaleX(1.0050);">12.5</span>
<div style="left:168.97px;top:736px;width:54.3px;height:61.5px;background:linear-gradient(#a4a4a4 0%,#8c8c8c 40%,#5a5a5a 100%);border-radius:5px;"></div>
<div style="left:174.17px;top:741px;width:44px;height:36px;background:rgb(48,48,48);border-radius:3px;box-shadow:inset 1px 1px 1.5px rgba(0,0,0,0.21),inset -0.5px -0.5px 1px rgba(0,0,0,0.12);"></div>
<span class="t" style="left:190.42px;top:783.70px;font-size:10.20px;color:#1e1e1e;font-weight:700;transform:scaleX(1.0137);">19</span>
<div style="left:225.56px;top:736px;width:54.3px;height:61.5px;background:linear-gradient(#a4a4a4 0%,#8c8c8c 40%,#5a5a5a 100%);border-radius:5px;"></div>
<div style="left:230.76px;top:741px;width:44px;height:36px;background:rgb(64,64,64);border-radius:3px;box-shadow:inset 1px 1px 1.5px rgba(0,0,0,0.23),inset -0.5px -0.5px 1px rgba(0,0,0,0.12);"></div>
<span class="t" style="left:247.01px;top:783.70px;font-size:10.20px;color:#1e1e1e;font-weight:700;transform:scaleX(1.0137);">25</span>
<div style="left:282.15px;top:736px;width:54.3px;height:61.5px;background:linear-gradient(#a4a4a4 0%,#8c8c8c 40%,#5a5a5a 100%);border-radius:5px;"></div>
<div style="left:287.35px;top:741px;width:44px;height:36px;background:rgb(80,80,80);border-radius:3px;box-shadow:inset 1px 1px 1.5px rgba(0,0,0,0.24),inset -0.5px -0.5px 1px rgba(0,0,0,0.12);"></div>
<span class="t" style="left:299.38px;top:783.70px;font-size:10.20px;color:#1e1e1e;font-weight:700;transform:scaleX(1.0050);">31.4</span>
<div style="left:338.74px;top:736px;width:54.3px;height:61.5px;background:linear-gradient(#a4a4a4 0%,#8c8c8c 40%,#5a5a5a 100%);border-radius:5px;"></div>
<div style="left:343.94px;top:741px;width:44px;height:36px;background:rgb(96,96,96);border-radius:3px;box-shadow:inset 1px 1px 1.5px rgba(0,0,0,0.26),inset -0.5px -0.5px 1px rgba(0,0,0,0.12);"></div>
<span class="t" style="left:355.96px;top:783.70px;font-size:10.20px;color:#1e1e1e;font-weight:700;transform:scaleX(1.0050);">37.6</span>
<div style="left:395.33px;top:736px;width:54.3px;height:61.5px;background:linear-gradient(#a4a4a4 0%,#8c8c8c 40%,#5a5a5a 100%);border-radius:5px;"></div>
<div style="left:400.53px;top:741px;width:44px;height:36px;background:rgb(112,112,112);border-radius:3px;box-shadow:inset 1px 1px 1.5px rgba(0,0,0,0.28),inset -0.5px -0.5px 1px rgba(0,0,0,0.12);"></div>
<span class="t" style="left:416.78px;top:783.70px;font-size:10.20px;color:#1e1e1e;font-weight:700;transform:scaleX(1.0137);">44</span>
<div style="left:451.92px;top:736px;width:54.3px;height:61.5px;background:linear-gradient(#a4a4a4 0%,#8c8c8c 40%,#5a5a5a 100%);border-radius:5px;"></div>
<div style="left:457.12px;top:741px;width:44px;height:36px;background:rgb(128,128,128);border-radius:3px;box-shadow:inset 1px 1px 1.5px rgba(0,0,0,0.30),inset -0.5px -0.5px 1px rgba(0,0,0,0.12);"></div>
<span class="t" style="left:473.37px;top:783.70px;font-size:10.20px;color:#1e1e1e;font-weight:700;transform:scaleX(1.0137);">50</span>
<div style="left:508.51px;top:736px;width:54.3px;height:61.5px;background:linear-gradient(#a4a4a4 0%,#8c8c8c 40%,#5a5a5a 100%);border-radius:5px;"></div>
<div style="left:513.71px;top:741px;width:44px;height:36px;background:rgb(144,144,144);border-radius:3px;box-shadow:inset 1px 1px 1.5px rgba(0,0,0,0.32),inset -0.5px -0.5px 1px rgba(0,0,0,0.12);"></div>
<span class="t" style="left:525.74px;top:783.70px;font-size:10.20px;color:#1e1e1e;font-weight:700;transform:scaleX(1.0050);">56.5</span>
<div style="left:565.1px;top:736px;width:54.3px;height:61.5px;background:linear-gradient(#a4a4a4 0%,#8c8c8c 40%,#5a5a5a 100%);border-radius:5px;"></div>
<div style="left:570.3px;top:741px;width:44px;height:36px;background:rgb(160,160,160);border-radius:3px;box-shadow:inset 1px 1px 1.5px rgba(0,0,0,0.34),inset -0.5px -0.5px 1px rgba(0,0,0,0.12);"></div>
<span class="t" style="left:582.33px;top:783.70px;font-size:10.20px;color:#1e1e1e;font-weight:700;transform:scaleX(1.0050);">62.7</span>
<div style="left:621.69px;top:736px;width:54.3px;height:61.5px;background:linear-gradient(#a4a4a4 0%,#8c8c8c 40%,#5a5a5a 100%);border-radius:5px;"></div>
<div style="left:626.89px;top:741px;width:44px;height:36px;background:rgb(176,176,176);border-radius:3px;box-shadow:inset 1px 1px 1.5px rgba(0,0,0,0.36),inset -0.5px -0.5px 1px rgba(0,0,0,0.12);"></div>
<span class="t" style="left:643.14px;top:783.70px;font-size:10.20px;color:#1e1e1e;font-weight:700;transform:scaleX(1.0137);">69</span>
<div style="left:678.28px;top:736px;width:54.3px;height:61.5px;background:linear-gradient(#a4a4a4 0%,#8c8c8c 40%,#5a5a5a 100%);border-radius:5px;"></div>
<div style="left:683.48px;top:741px;width:44px;height:36px;background:rgb(192,192,192);border-radius:3px;box-shadow:inset 1px 1px 1.5px rgba(0,0,0,0.38),inset -0.5px -0.5px 1px rgba(0,0,0,0.12);"></div>
<span class="t" style="left:695.51px;top:783.70px;font-size:10.20px;color:#1e1e1e;font-weight:700;transform:scaleX(1.0050);">75.3</span>
<div style="left:734.87px;top:736px;width:54.3px;height:61.5px;background:linear-gradient(#a4a4a4 0%,#8c8c8c 40%,#5a5a5a 100%);border-radius:5px;"></div>
<div style="left:740.07px;top:741px;width:44px;height:36px;background:rgb(208,208,208);border-radius:3px;box-shadow:inset 1px 1px 1.5px rgba(0,0,0,0.39),inset -0.5px -0.5px 1px rgba(0,0,0,0.12);"></div>
<span class="t" style="left:752.10px;top:783.70px;font-size:10.20px;color:#1e1e1e;font-weight:700;transform:scaleX(1.0050);">81.6</span>
<div style="left:791.46px;top:736px;width:54.3px;height:61.5px;background:linear-gradient(#a4a4a4 0%,#8c8c8c 40%,#5a5a5a 100%);border-radius:5px;"></div>
<div style="left:796.66px;top:741px;width:44px;height:36px;background:rgb(224,224,224);border-radius:3px;box-shadow:inset 1px 1px 1.5px rgba(0,0,0,0.41),inset -0.5px -0.5px 1px rgba(0,0,0,0.12);"></div>
<span class="t" style="left:812.91px;top:783.70px;font-size:10.20px;color:#1e1e1e;font-weight:700;transform:scaleX(1.0137);">88</span>
<div style="left:848.05px;top:736px;width:54.3px;height:61.5px;background:linear-gradient(#a4a4a4 0%,#8c8c8c 40%,#5a5a5a 100%);border-radius:5px;"></div>
<div style="left:853.25px;top:741px;width:44px;height:36px;background:rgb(240,240,240);border-radius:3px;box-shadow:inset 1px 1px 1.5px rgba(0,0,0,0.43),inset -0.5px -0.5px 1px rgba(0,0,0,0.12);"></div>
<span class="t" style="left:869.50px;top:783.70px;font-size:10.20px;color:#1e1e1e;font-weight:700;transform:scaleX(1.0137);">94</span>
<div style="left:904.64px;top:736px;width:54.3px;height:61.5px;background:linear-gradient(#a4a4a4 0%,#8c8c8c 40%,#5a5a5a 100%);border-radius:5px;"></div>
<div style="left:909.84px;top:741px;width:44px;height:36px;background:rgb(255,255,255);border-radius:3px;box-shadow:inset 1px 1px 1.5px rgba(0,0,0,0.45),inset -0.5px -0.5px 1px rgba(0,0,0,0.12);"></div>
<span class="t" style="left:923.22px;top:783.70px;font-size:10.20px;color:#1e1e1e;font-weight:700;transform:scaleX(1.0137);">100</span>
<div style="left:962px;top:736px;width:47.8px;height:61.5px;background:linear-gradient(#a0a0a0,#5e5e5e);border-radius:5px;"></div>
<div style="left:962px;top:754px;width:47.8px;height:1.2px;background:#3a3a3a;"></div>
<svg class="a" style="left:962px;top:736px" width="49" height="62">
<circle cx="24.5" cy="9.6" r="7.4" fill="#7e7e7e"/><path d="M20.800,11.200h7.400l-3.700,-4z" fill="#333"/>
<rect x="8.400" y="24.200" width="31.600" height="31.600" rx="4" fill="#1b1b1b" style="filter:blur(0.5px)"/>
<rect x="12.200" y="27.800" width="24.200" height="12" fill="#2e2e2e"/><rect x="12.200" y="39.800" width="24.200" height="12.400" fill="#0f0f0f"/>
</svg>
<div style="left:1011px;top:736px;width:45.4px;height:30px;background:linear-gradient(#a0a0a0,#5c5c5c);border-radius:4px 0 0 0;"></div>
<div style="left:1057.6px;top:736px;width:44.1px;height:30px;background:linear-gradient(#a0a0a0,#5c5c5c);border-radius:0;"></div>
<div style="left:1102.9px;top:736px;width:44.1px;height:30px;background:linear-gradient(#a0a0a0,#5c5c5c);border-radius:0;"></div>
<div style="left:1148.2px;top:736px;width:44px;height:30px;background:linear-gradient(#a0a0a0,#5c5c5c);border-radius:0;"></div>
<div style="left:1193.4px;top:736px;width:44px;height:30px;background:linear-gradient(#a0a0a0,#5c5c5c);border-radius:0;"></div>
<div style="left:1238.6px;top:736px;width:44.8px;height:30px;background:linear-gradient(#4c4c4c,#303030);border-radius:0;"></div>
<svg class="a" style="left:1011px;top:736px" width="273" height="30"><circle cx="22.7" cy="15" r="10" fill="url(#bg1)"/><circle cx="68.7" cy="15" r="10" fill="url(#bg1)"/><circle cx="113.9" cy="15" r="10" fill="url(#bg1)"/><circle cx="159.2" cy="15" r="10" fill="url(#bg1)"/><circle cx="204.4" cy="15" r="10" fill="url(#bg1)"/><circle cx="250.0" cy="15" r="10" fill="#3b3b3b"/><rect x="19.200" y="11.200" width="7.800" height="7.800" fill="#2c2c2c"/><path d="M65,9.800v10.600l8.800,-5.300z" fill="#2c2c2c"/><path d="M112.300,10.200h-2.300v9.600h2.300M118.700,10.200h2.300v9.600h-2.300" fill="none" stroke="#2c2c2c" stroke-width="2"/><path d="M113.300,15h1.600M116.100,15h1.600" stroke="#2c2c2c" stroke-width="1.600"/><path d="M159.200,15c-1.800,-2.900 -6.200,-2.900 -6.200,0s4.400,2.900 6.200,0s6.200,-2.900 6.200,0s-4.400,2.900 -6.200,0z" fill="none" stroke="#2c2c2c" stroke-width="1.700"/><g transform="translate(204.400,15)" fill="none" stroke="#2c2c2c" stroke-width="2"><path d="M-4.800,-1a4.900,4.900 0 0 1 8,-2.800"/><path d="M4.800,1a4.900,4.900 0 0 1 -8,2.800"/><path d="M5.600,-6.600v4.600h-4.600z" fill="#2c2c2c" stroke="none"/><path d="M-5.600,6.600v-4.600h4.600z" fill="#2c2c2c" stroke="none"/></g><path d="M245.200,15l3.200,3.400l5.600,-7.200" fill="none" stroke="#1a1a1a" stroke-width="2.500"/></svg>
<div style="left:1011px;top:767px;width:135.8px;height:30.5px;background:linear-gradient(#a4a4a4,#5e5e5e);border-radius:4px 0 0 4px;"></div>
<div style="left:1148px;top:767px;width:135.4px;height:30.5px;background:linear-gradient(#a4a4a4,#5e5e5e);border-radius:0 0 4px 0;"></div>
<svg class="a" style="left:1011px;top:767px" width="273" height="31">
<circle cx="30.600" cy="15" r="10" fill="url(#bg1)"/><circle cx="243.900" cy="15" r="10" fill="url(#bg1)"/>
<path d="M30,10.400l-4,4.600l4,4.600M34.800,10.400l-4,4.600l4,4.600" fill="none" stroke="#2c2c2c" stroke-width="1.900"/>
<path d="M239.800,10.400l4,4.600l-4,4.600M244.600,10.400l4,4.600l-4,4.600" fill="none" stroke="#2c2c2c" stroke-width="1.900"/>
</svg>
<span class="t" style="left:1068.60px;top:771.60px;font-size:22.40px;color:#2a2a2a;transform:scaleX(1.0141);-webkit-text-stroke:0.5px #2a2a2a;">Back</span>
<span class="t" style="left:1175.20px;top:771.60px;font-size:22.40px;color:#2a2a2a;transform:scaleX(1.1073);-webkit-text-stroke:0.5px #2a2a2a;">Next</span>
<div style="left:1279.5px;top:65px;width:4.5px;height:670.5px;background:linear-gradient(90deg,#333,#222 35%,#1f1f1f);"></div>
<div style="left:0px;top:797.7px;width:1284px;height:1.3px;background:linear-gradient(90deg,#eee 0,#eee 100px,#8a8a8a 102px,#8a8a8a 1214px,#d8d8d8 1216px,#d8d8d8 1272px,#555 1274px);"></div>
<svg class="a" style="left:0;top:0;pointer-events:none" width="1284" height="799" viewBox="0 0 1284 799"><rect x="26.5" y="192.5" width="410" height="364" fill="#242424" stroke="#a6a6a6"/><defs><linearGradient id="c0" gradientUnits="userSpaceOnUse" x1="65" x2="70"><stop offset="0" stop-color="#0f0"/><stop offset="1" stop-color="#0f0"/></linearGradient><linearGradient id="c1" gradientUnits="userSpaceOnUse" x1="57" x2="73"><stop offset="0" stop-color="#0f0"/><stop offset="1" stop-color="#0f0"/></linearGradient><linearGradient id="c2" gradientUnits="userSpaceOnUse" x1="54" x2="77"><stop offset="0" stop-color="#0f0"/><stop offset="1" stop-color="#0f0"/></linearGradient><linearGradient id="c3" gradientUnits="userSpaceOnUse" x1="52" x2="81"><stop offset="0" stop-color="#0f0"/><stop offset="1" stop-color="#0f0"/></linearGradient><linearGradient id="c4" gradientUnits="userSpaceOnUse" x1="50" x2="85"><stop offset="0" stop-color="#0f0"/><stop offset="1" stop-color="#0f0"/></linearGradient><linearGradient id="c5" gradientUnits="userSpaceOnUse" x1="49" x2="89"><stop offset="0" stop-color="#0f0"/><stop offset="1" stop-color="#0f0"/></linearGradient><linearGradient id="c6" gradientUnits="userSpaceOnUse" x1="48" x2="91"><stop offset="0" stop-color="#0f0"/><stop offset="1" stop-color="#0f0"/></linearGradient><linearGradient id="c7" gradientUnits="userSpaceOnUse" x1="47" x2="93"><stop offset="0" stop-color="#0f0"/><stop offset="1" stop-color="#0f0"/></linearGradient><linearGradient id="c8" gradientUnits="userSpaceOnUse" x1="46" x2="95"><stop offset="0" stop-color="#0f0"/><stop offset="1" stop-color="#0f0"/></linearGradient><linearGradient id="c9" gradientUnits="userSpaceOnUse" x1="45" x2="97"><stop offset="0" stop-color="#0f0"/><stop offset="1" stop-color="#0f0"/></linearGradient><linearGradient id="c10" gradientUnits="userSpaceOnUse" x1="44" x2="99"><stop offset="0" stop-color="#0f0"/><stop offset="1" stop-color="#0f0"/></linearGradient><linearGradient id="c11" gradientUnits="userSpaceOnUse" x1="43" x2="101"><stop offset="0" stop-color="#0f0"/><stop offset="1" stop-color="#0f0"/></linearGradient><linearGradient id="c12" gradientUnits="userSpaceOnUse" x1="43" x2="103"><stop offset="0" stop-color="#00ff01"/><stop offset="1" stop-color="#0f0"/></linearGradient><linearGradient id="c13" gradientUnits="userSpaceOnUse" x1="42" x2="105"><stop offset="0" stop-color="#00ff01"/><stop offset="1" stop-color="#0f0"/></linearGradient><linearGradient id="c14" gradientUnits="userSpaceOnUse" x1="41" x2="107"><stop offset="0" stop-color="#00ff02"/><stop offset="1" stop-color="#0f0"/></linearGradient><linearGradient id="c15" gradientUnits="userSpaceOnUse" x1="40" x2="109"><stop offset="0" stop-color="#00ff03"/><stop offset="0.638" stop-color="#0f0"/><stop offset="1" stop-color="#0f0"/></linearGradient><linearGradient id="c16" gradientUnits="userSpaceOnUse" x1="40" x2="111"><stop offset="0" stop-color="#00ff04"/><stop offset="0.493" stop-color="#0f0"/><stop offset="1" stop-color="#0f0"/></linearGradient><linearGradient id="c17" gradientUnits="userSpaceOnUse" x1="39" x2="113"><stop offset="0" stop-color="#00ff04"/><stop offset="0.392" stop-color="#0f0"/><stop offset="1" stop-color="#0f0"/></linearGradient><linearGradient id="c18" gradientUnits="userSpaceOnUse" x1="39" x2="114"><stop offset="0" stop-color="#00ff05"/><stop offset="0.373" stop-color="#0f0"/><stop offset="1" stop-color="#0f0"/></linearGradient><linearGradient id="c19" gradientUnits="userSpaceOnUse" x1="38" x2="116"><stop offset="0" stop-color="#00ff06"/><stop offset="0.372" stop-color="#0f0"/><stop offset="1" stop-color="#0f0"/></linearGradient><linearGradient id="c20" gradientUnits="userSpaceOnUse" x1="37" x2="118"><stop offset="0" stop-color="#00ff07"/><stop offset="0.37" stop-color="#0f0"/><stop offset="1" stop-color="#0f0"/></linearGradient><linearGradient id="c21" gradientUnits="userSpaceOnUse" x1="37" x2="120"><stop offset="0" stop-color="#00ff07"/><stop offset="0.373" stop-color="#0f0"/><stop offset="1" stop-color="#0f0"/></linearGradient><linearGradient id="c22" gradientUnits="userSpaceOnUse" x1="36" x2="122"><stop offset="0" stop-color="#00ff08"/><stop offset="0.384" stop-color="#0f0"/><stop offset="1" stop-color="#0f0"/></linearGradient><linearGradient id="c23" gradientUnits="userSpaceOnUse" x1="36" x2="124"><stop offset="0" stop-color="#00ff09"/><stop offset="0.386" stop-color="#0f0"/><stop offset="1" stop-color="#0f0"/></linearGradient><linearGradient id="c24" gradientUnits="userSpaceOnUse" x1="35" x2="125"><stop offset="0" stop-color="#00ff0a"/><stop offset="0.4" stop-color="#0f0"/><stop offset="1" stop-color="#0f0"/></linearGradient><linearGradient id="c25" gradientUnits="userSpaceOnUse" x1="35" x2="127"><stop offset="0" stop-color="#00ff0a"/><stop offset="0.402" stop-color="#0f0"/><stop offset="1" stop-color="#0f0"/></linearGradient><linearGradient id="c26" gradientUnits="userSpaceOnUse" x1="34" x2="128"><stop offset="0" stop-color="#00ff0b"/><stop offset="0.415" stop-color="#0f0"/><stop offset="1" stop-color="#0f0"/></linearGradient><linearGradient id="c27" gradientUnits="userSpaceOnUse" x1="34" x2="130"><stop offset="0" stop-color="#00ff0c"/><stop offset="0.417" stop-color="#0f0"/><stop offset="1" stop-color="#0f0"/></linearGradient><linearGradient id="c28" gradientUnits="userSpaceOnUse" x1="34" x2="131"><stop offset="0" stop-color="#00ff0c"/><stop offset="0.433" stop-color="#0f0"/><stop offset="1" stop-color="#0f0"/></linearGradient><linearGradient id="c29" gradientUnits="userSpaceOnUse" x1="33" x2="132"><stop offset="0" stop-color="#00ff0d"/><stop offset="0.444" stop-color="#0f0"/><stop offset="1" stop-color="#0f0"/></linearGradient><linearGradient id="c30" gradientUnits="userSpaceOnUse" x1="33" x2="134"><stop offset="0" stop-color="#00ff0e"/><stop offset="0.446" stop-color="#0f0"/><stop offset="1" stop-color="#0f0"/></linearGradient><linearGradient id="c31" gradientUnits="userSpaceOnUse" x1="33" x2="135"><stop offset="0" stop-color="#00ff0e"/><stop offset="0.461" stop-color="#0f0"/><stop offset="1" stop-color="#0f0"/></linearGradient><linearGradient id="c32" gradientUnits="userSpaceOnUse" x1="32" x2="137"><stop offset="0" stop-color="#00ff0f"/><stop offset="0.467" stop-color="#0f0"/><stop offset="1" stop-color="#0f0"/></linearGradient><linearGradient id="c33" gradientUnits="userSpaceOnUse" x1="32" x2="138"><stop offset="0" stop-color="#00ff10"/><stop offset="0.472" stop-color="#0f0"/><stop offset="1" stop-color="#0f0"/></linearGradient><linearGradient id="c34" gradientUnits="userSpaceOnUse" x1="32" x2="140"><stop offset="0" stop-color="#00ff10"/><stop offset="0.481" stop-color="#0f0"/><stop offset="1" stop-color="#0f0"/></linearGradient><linearGradient id="c35" gradientUnits="userSpaceOnUse" x1="32" x2="142"><stop offset="0" stop-color="#0f1"/><stop offset="0.482" stop-color="#0f0"/><stop offset="1" stop-color="#0f0"/></linearGradient><linearGradient id="c36" gradientUnits="userSpaceOnUse" x1="31" x2="143"><stop offset="0" stop-color="#00ff12"/><stop offset="0.491" stop-color="#0f0"/><stop offset="1" stop-color="#0f0"/></linearGradient><linearGradient id="c37" gradientUnits="userSpaceOnUse" x1="31" x2="144"><stop offset="0" stop-color="#00ff12"/><stop offset="0.496" stop-color="#0f0"/><stop offset="1" stop-color="#0f0"/></linearGradient><linearGradient id="c38" gradientUnits="userSpaceOnUse" x1="31" x2="145"><stop offset="0" stop-color="#00ff13"/><stop offset="0.509" stop-color="#0f0"/><stop offset="1" stop-color="#0f0"/></linearGradient><linearGradient id="c39" gradientUnits="userSpaceOnUse" x1="31" x2="147"><stop offset="0" stop-color="#00ff13"/><stop offset="0.509" stop-color="#0f0"/><stop offset="1" stop-color="#0f0"/></linearGradient><linearGradient id="c40" gradientUnits="userSpaceOnUse" x1="31" x2="149"><stop offset="0" stop-color="#00ff14"/><stop offset="0.508" stop-color="#0f0"/><stop offset="1" stop-color="#0f0"/></linearGradient><linearGradient id="c41" gradientUnits="userSpaceOnUse" x1="30" x2="150"><stop offset="0" stop-color="#00ff15"/><stop offset="0.525" stop-color="#0f0"/><stop offset="1" stop-color="#0f0"/></linearGradient><linearGradient id="c42" gradientUnits="userSpaceOnUse" x1="30" x2="151"><stop offset="0" stop-color="#00ff15"/><stop offset="0.529" stop-color="#0f0"/><stop offset="1" stop-color="#0f0"/></linearGradient><linearGradient id="c43" gradientUnits="userSpaceOnUse" x1="30" x2="152"><stop offset="0" stop-color="#00ff16"/><stop offset="0.541" stop-color="#0f0"/><stop offset="1" stop-color="#0f0"/></linearGradient><linearGradient id="c44" gradientUnits="userSpaceOnUse" x1="30" x2="154"><stop offset="0" stop-color="#00ff17"/><stop offset="0.54" stop-color="#0f0"/><stop offset="1" stop-color="#0f0"/></linearGradient><linearGradient id="c45" gradientUnits="userSpaceOnUse" x1="30" x2="156"><stop offset="0" stop-color="#00ff17"/><stop offset="0.54" stop-color="#0f0"/><stop offset="1" stop-color="#0f0"/></linearGradient><linearGradient id="c46" gradientUnits="userSpaceOnUse" x1="30" x2="157"><stop offset="0" stop-color="#00ff18"/><stop offset="0.551" stop-color="#0f0"/><stop offset="1" stop-color="#0f0"/></linearGradient><linearGradient id="c47" gradientUnits="userSpaceOnUse" x1="29" x2="158"><stop offset="0" stop-color="#00ff19"/><stop offset="0.558" stop-color="#0f0"/><stop offset="1" stop-color="#0f0"/></linearGradient><linearGradient id="c48" gradientUnits="userSpaceOnUse" x1="29" x2="159"><stop offset="0" stop-color="#00ff19"/><stop offset="0.569" stop-color="#0f0"/><stop offset="1" stop-color="#0f0"/></linearGradient><linearGradient id="c49" gradientUnits="userSpaceOnUse" x1="29" x2="160"><stop offset="0" stop-color="#00ff1a"/><stop offset="0.573" stop-color="#0f0"/><stop offset="1" stop-color="#0f0"/></linearGradient><linearGradient id="c50" gradientUnits="userSpaceOnUse" x1="29" x2="162"><stop offset="0" stop-color="#00ff1b"/><stop offset="0.571" stop-color="#0f0"/><stop offset="1" stop-color="#0f0"/></linearGradient><linearGradient id="c51" gradientUnits="userSpaceOnUse" x1="28" x2="163"><stop offset="0" stop-color="#00ff1c"/><stop offset="0.585" stop-color="#0f0"/><stop offset="1" stop-color="#0f0"/></linearGradient><linearGradient id="c52" gradientUnits="userSpaceOnUse" x1="28" x2="164"><stop offset="0" stop-color="#00ff1c"/><stop offset="0.588" stop-color="#0f0"/><stop offset="1" stop-color="#0f0"/></linearGradient><linearGradient id="c53" gradientUnits="userSpaceOnUse" x1="28" x2="166"><stop offset="0" stop-color="#00ff1d"/><stop offset="0.587" stop-color="#0f0"/><stop offset="1" stop-color="#0f0"/></linearGradient><linearGradient id="c54" gradientUnits="userSpaceOnUse" x1="28" x2="167"><stop offset="0" stop-color="#00ff1e"/><stop offset="0.597" stop-color="#0f0"/><stop offset="1" stop-color="#0f0"/></linearGradient><linearGradient id="c55" gradientUnits="userSpaceOnUse" x1="28" x2="169"><stop offset="0" stop-color="#00ff1e"/><stop offset="0.596" stop-color="#0f0"/><stop offset="1" stop-color="#0f0"/></linearGradient><linearGradient id="c56" gradientUnits="userSpaceOnUse" x1="28" x2="170"><stop offset="0" stop-color="#00ff1f"/><stop offset="0.599" stop-color="#0f0"/><stop offset="1" stop-color="#0f0"/></linearGradient><linearGradient id="c57" gradientUnits="userSpaceOnUse" x1="28" x2="171"><stop offset="0" stop-color="#00ff20"/><stop offset="0.608" stop-color="#0f0"/><stop offset="1" stop-color="#0f0"/></linearGradient><linearGradient id="c58" gradientUnits="userSpaceOnUse" x1="28" x2="172"><stop offset="0" stop-color="#00ff20"/><stop offset="0.611" stop-color="#0f0"/><stop offset="1" stop-color="#0f0"/></linearGradient><linearGradient id="c59" gradientUnits="userSpaceOnUse" x1="28" x2="173"><stop offset="0" stop-color="#00ff21"/><stop offset="0.621" stop-color="#0f0"/><stop offset="1" stop-color="#0f0"/></linearGradient><linearGradient id="c60" gradientUnits="userSpaceOnUse" x1="28" x2="174"><stop offset="0" stop-color="#0f2"/><stop offset="0.623" stop-color="#0f0"/><stop offset="1" stop-color="#0f0"/></linearGradient><linearGradient id="c61" gradientUnits="userSpaceOnUse" x1="28" x2="176"><stop offset="0" stop-color="#0f2"/><stop offset="0.622" stop-color="#0f0"/><stop offset="1" stop-color="#0f0"/></linearGradient><linearGradient id="c62" gradientUnits="userSpaceOnUse" x1="28" x2="177"><stop offset="0" stop-color="#00ff23"/><stop offset="0.631" stop-color="#0f0"/><stop offset="1" stop-color="#0f0"/></linearGradient><linearGradient id="c63" gradientUnits="userSpaceOnUse" x1="28" x2="178"><stop offset="0" stop-color="#00ff24"/><stop offset="0.633" stop-color="#0f0"/><stop offset="1" stop-color="#0f0"/></linearGradient><linearGradient id="c64" gradientUnits="userSpaceOnUse" x1="28" x2="179"><stop offset="0" stop-color="#00ff24"/><stop offset="0.642" stop-color="#0f0"/><stop offset="1" stop-color="#0f0"/></linearGradient><linearGradient id="c65" gradientUnits="userSpaceOnUse" x1="27" x2="180"><stop offset="0" stop-color="#00ff25"/><stop offset="0.647" stop-color="#0f0"/><stop offset="1" stop-color="#0f0"/></linearGradient><linearGradient id="c66" gradientUnits="userSpaceOnUse" x1="27" x2="181"><stop offset="0" stop-color="#00ff26"/><stop offset="0.649" stop-color="#0f0"/><stop offset="1" stop-color="#0f0"/></linearGradient><linearGradient id="c67" gradientUnits="userSpaceOnUse" x1="27" x2="183"><stop offset="0" stop-color="#00ff27"/><stop offset="0.654" stop-color="#0f0"/><stop offset="1" stop-color="#0f0"/></linearGradient><linearGradient id="c68" gradientUnits="userSpaceOnUse" x1="27" x2="184"><stop offset="0" stop-color="#00ff27"/><stop offset="0.656" stop-color="#0f0"/><stop offset="1" stop-color="#0f0"/></linearGradient><linearGradient id="c69" gradientUnits="userSpaceOnUse" x1="27" x2="185"><stop offset="0" stop-color="#00ff28"/><stop offset="0.658" stop-color="#0f0"/><stop offset="1" stop-color="#02ff00"/></linearGradient><linearGradient id="c70" gradientUnits="userSpaceOnUse" x1="27" x2="186"><stop offset="0" stop-color="#00ff29"/><stop offset="0.667" stop-color="#0f0"/><stop offset="0.987" stop-color="#01ff00"/><stop offset="1" stop-color="#05ff00"/></linearGradient><linearGradient id="c71" gradientUnits="userSpaceOnUse" x1="27" x2="187"><stop offset="0" stop-color="#00ff29"/><stop offset="0.669" stop-color="#0f0"/><stop offset="0.981" stop-color="#01ff00"/><stop offset="1" stop-color="#08ff00"/></linearGradient><linearGradient id="c72" gradientUnits="userSpaceOnUse" x1="27" x2="189"><stop offset="0" stop-color="#00ff2a"/><stop offset="0.673" stop-color="#0f0"/><stop offset="0.969" stop-color="#02ff00"/><stop offset="1" stop-color="#0dff00"/></linearGradient><linearGradient id="c73" gradientUnits="userSpaceOnUse" x1="27" x2="191"><stop offset="0" stop-color="#00ff2b"/><stop offset="0.671" stop-color="#0f0"/><stop offset="0.951" stop-color="#01ff00"/><stop offset="1" stop-color="#1f0"/></linearGradient><linearGradient id="c74" gradientUnits="userSpaceOnUse" x1="26" x2="192"><stop offset="0" stop-color="#00ff2c"/><stop offset="0.675" stop-color="#0f0"/><stop offset="0.946" stop-color="#01ff00"/><stop offset="1" stop-color="#14ff00"/></linearGradient><linearGradient id="c75" gradientUnits="userSpaceOnUse" x1="26" x2="193"><stop offset="0" stop-color="#00ff2d"/><stop offset="0.683" stop-color="#0f0"/><stop offset="0.94" stop-color="#02ff00"/><stop offset="1" stop-color="#17ff00"/></linearGradient><linearGradient id="c76" gradientUnits="userSpaceOnUse" x1="26" x2="194"><stop offset="0" stop-color="#00ff2d"/><stop offset="0.685" stop-color="#0f0"/><stop offset="0.935" stop-color="#03ff00"/><stop offset="1" stop-color="#1aff00"/></linearGradient><linearGradient id="c77" gradientUnits="userSpaceOnUse" x1="26" x2="195"><stop offset="0" stop-color="#00ff2e"/><stop offset="0.692" stop-color="#0f0"/><stop offset="0.923" stop-color="#01ff00"/><stop offset="1" stop-color="#1dff00"/></linearGradient><linearGradient id="c78" gradientUnits="userSpaceOnUse" x1="26" x2="197"><stop offset="0" stop-color="#00ff2f"/><stop offset="0.69" stop-color="#0f0"/><stop offset="0.912" stop-color="#02ff00"/><stop offset="1" stop-color="#23ff00"/></linearGradient><linearGradient id="c79" gradientUnits="userSpaceOnUse" x1="26" x2="198"><stop offset="0" stop-color="#00ff30"/><stop offset="0.692" stop-color="#0f0"/><stop offset="0.907" stop-color="#03ff00"/><stop offset="1" stop-color="#26ff00"/></linearGradient><linearGradient id="c80" gradientUnits="userSpaceOnUse" x1="26" x2="199"><stop offset="0" stop-color="#00ff30"/><stop offset="0.653" stop-color="#00ff01"/><stop offset="0.896" stop-color="#01ff00"/><stop offset="1" stop-color="#29ff00"/></linearGradient><linearGradient id="c81" gradientUnits="userSpaceOnUse" x1="26" x2="200"><stop offset="0" stop-color="#00ff31"/><stop offset="0.649" stop-color="#00ff02"/><stop offset="0.891" stop-color="#02ff00"/><stop offset="1" stop-color="#2cff00"/></linearGradient><linearGradient id="c82" gradientUnits="userSpaceOnUse" x1="26" x2="201"><stop offset="0" stop-color="#00ff32"/><stop offset="0.64" stop-color="#00ff03"/><stop offset="0.84" stop-color="#0f0"/><stop offset="0.886" stop-color="#02ff00"/><stop offset="1" stop-color="#2fff00"/></linearGradient><linearGradient id="c83" gradientUnits="userSpaceOnUse" x1="26" x2="202"><stop offset="0" stop-color="#0f3"/><stop offset="0.636" stop-color="#00ff04"/><stop offset="0.761" stop-color="#0f0"/><stop offset="0.875" stop-color="#01ff00"/><stop offset="1" stop-color="#3f0"/></linearGradient><linearGradient id="c84" gradientUnits="userSpaceOnUse" x1="26" x2="204"><stop offset="0" stop-color="#00ff34"/><stop offset="0.629" stop-color="#00ff05"/><stop offset="0.742" stop-color="#0f0"/><stop offset="0.865" stop-color="#02ff00"/><stop offset="1" stop-color="#39ff00"/></linearGradient><linearGradient id="c85" gradientUnits="userSpaceOnUse" x1="26" x2="205"><stop offset="0" stop-color="#00ff34"/><stop offset="0.626" stop-color="#00ff05"/><stop offset="0.726" stop-color="#0f0"/><stop offset="0.86" stop-color="#02ff00"/><stop offset="1" stop-color="#3cff00"/></linearGradient><linearGradient id="c86" gradientUnits="userSpaceOnUse" x1="26" x2="206"><stop offset="0" stop-color="#00ff35"/><stop offset="0.622" stop-color="#00ff06"/><stop offset="0.728" stop-color="#0f0"/><stop offset="0.85" stop-color="#01ff00"/><stop offset="1" stop-color="#40ff00"/></linearGradient><linearGradient id="c87" gradientUnits="userSpaceOnUse" x1="26" x2="207"><stop offset="0" stop-color="#00ff36"/><stop offset="0.613" stop-color="#00ff07"/><stop offset="0.729" stop-color="#0f0"/><stop offset="0.845" stop-color="#01ff00"/><stop offset="1" stop-color="#43ff00"/></linearGradient><linearGradient id="c88" gradientUnits="userSpaceOnUse" x1="26" x2="208"><stop offset="0" stop-color="#00ff37"/><stop offset="0.61" stop-color="#00ff08"/><stop offset="0.731" stop-color="#0f0"/><stop offset="0.841" stop-color="#02ff00"/><stop offset="1" stop-color="#47ff00"/></linearGradient><linearGradient id="c89" gradientUnits="userSpaceOnUse" x1="26" x2="209"><stop offset="0" stop-color="#00ff38"/><stop offset="0.607" stop-color="#00ff09"/><stop offset="0.732" stop-color="#0f0"/><stop offset="0.831" stop-color="#01ff00"/><stop offset="1" stop-color="#4aff00"/></linearGradient><linearGradient id="c90" gradientUnits="userSpaceOnUse" x1="26" x2="210"><stop offset="0" stop-color="#00ff38"/><stop offset="0.603" stop-color="#00ff0a"/><stop offset="0.734" stop-color="#0f0"/><stop offset="0.826" stop-color="#01ff00"/><stop offset="1" stop-color="#4eff00"/></linearGradient><linearGradient id="c91" gradientUnits="userSpaceOnUse" x1="26" x2="211"><stop offset="0" stop-color="#00ff39"/><stop offset="0.6" stop-color="#00ff0b"/><stop offset="0.735" stop-color="#0f0"/><stop offset="0.822" stop-color="#02ff00"/><stop offset="1" stop-color="#52ff00"/></linearGradient><linearGradient id="c92" gradientUnits="userSpaceOnUse" x1="26" x2="212"><stop offset="0" stop-color="#00ff3a"/><stop offset="0.591" stop-color="#00ff0c"/><stop offset="0.737" stop-color="#0f0"/><stop offset="0.817" stop-color="#03ff00"/><stop offset="1" stop-color="#56ff00"/></linearGradient><linearGradient id="c93" gradientUnits="userSpaceOnUse" x1="26" x2="214"><stop offset="0" stop-color="#00ff3b"/><stop offset="0.585" stop-color="#00ff0d"/><stop offset="0.739" stop-color="#0f0"/><stop offset="0.803" stop-color="#01ff00"/><stop offset="1" stop-color="#5cff00"/></linearGradient><linearGradient id="c94" gradientUnits="userSpaceOnUse" x1="26" x2="215"><stop offset="0" stop-color="#00ff3c"/><stop offset="0.582" stop-color="#00ff0e"/><stop offset="0.741" stop-color="#0f0"/><stop offset="0.799" stop-color="#02ff00"/><stop offset="1" stop-color="#60ff00"/></linearGradient><linearGradient id="c95" gradientUnits="userSpaceOnUse" x1="27" x2="216"><stop offset="0" stop-color="#00ff3c"/><stop offset="0.582" stop-color="#00ff0e"/><stop offset="0.741" stop-color="#0f0"/><stop offset="0.794" stop-color="#03ff00"/><stop offset="1" stop-color="#64ff00"/></linearGradient><linearGradient id="c96" gradientUnits="userSpaceOnUse" x1="27" x2="217"><stop offset="0" stop-color="#00ff3d"/><stop offset="0.574" stop-color="#00ff0f"/><stop offset="0.747" stop-color="#0f0"/><stop offset="0.784" stop-color="#01ff00"/><stop offset="0.989" stop-color="#63ff00"/><stop offset="1" stop-color="#68ff00"/></linearGradient><linearGradient id="c97" gradientUnits="userSpaceOnUse" x1="27" x2="218"><stop offset="0" stop-color="#00ff3e"/><stop offset="0.571" stop-color="#00ff10"/><stop offset="0.749" stop-color="#0f0"/><stop offset="0.78" stop-color="#02ff00"/><stop offset="0.984" stop-color="#64ff00"/><stop offset="1" stop-color="#6dff00"/></linearGradient><linearGradient id="c98" gradientUnits="userSpaceOnUse" x1="27" x2="219"><stop offset="0" stop-color="#00ff3f"/><stop offset="0.568" stop-color="#0f1"/><stop offset="0.75" stop-color="#0f0"/><stop offset="0.776" stop-color="#03ff00"/><stop offset="0.979" stop-color="#65ff00"/><stop offset="1" stop-color="#71ff00"/></linearGradient><linearGradient id="c99" gradientUnits="userSpaceOnUse" x1="27" x2="221"><stop offset="0" stop-color="#00ff40"/><stop offset="0.562" stop-color="#00ff12"/><stop offset="0.753" stop-color="#0f0"/><stop offset="0.784" stop-color="#0aff00"/><stop offset="0.979" stop-color="#6cff00"/><stop offset="1" stop-color="#78ff00"/></linearGradient><linearGradient id="c100" gradientUnits="userSpaceOnUse" x1="27" x2="222"><stop offset="0" stop-color="#00ff41"/><stop offset="0.559" stop-color="#00ff13"/><stop offset="0.754" stop-color="#0f0"/><stop offset="0.938" stop-color="#5aff00"/><stop offset="1" stop-color="#7cff00"/></linearGradient><linearGradient id="c101" gradientUnits="userSpaceOnUse" x1="27" x2="223"><stop offset="0" stop-color="#00ff41"/><stop offset="0.551" stop-color="#00ff14"/><stop offset="0.755" stop-color="#02ff00"/><stop offset="0.949" stop-color="#64ff00"/><stop offset="1" stop-color="#81ff00"/></linearGradient><linearGradient id="c102" gradientUnits="userSpaceOnUse" x1="27" x2="224"><stop offset="0" stop-color="#00ff42"/><stop offset="0.548" stop-color="#00ff15"/><stop offset="0.746" stop-color="#01ff00"/><stop offset="0.939" stop-color="#62ff00"/><stop offset="1" stop-color="#86ff00"/></linearGradient><linearGradient id="c103" gradientUnits="userSpaceOnUse" x1="27" x2="225"><stop offset="0" stop-color="#00ff43"/><stop offset="0.545" stop-color="#00ff16"/><stop offset="0.742" stop-color="#02ff00"/><stop offset="0.934" stop-color="#64ff00"/><stop offset="1" stop-color="#8aff00"/></linearGradient><linearGradient id="c104" gradientUnits="userSpaceOnUse" x1="27" x2="226"><stop offset="0" stop-color="#0f4"/><stop offset="0.543" stop-color="#00ff17"/><stop offset="0.739" stop-color="#02ff01"/><stop offset="0.93" stop-color="#65ff00"/><stop offset="1" stop-color="#8fff00"/></linearGradient><linearGradient id="c105" gradientUnits="userSpaceOnUse" x1="27" x2="228"><stop offset="0" stop-color="#00ff45"/><stop offset="0.537" stop-color="#00ff18"/><stop offset="0.726" stop-color="#01ff02"/><stop offset="0.915" stop-color="#64ff00"/><stop offset="1" stop-color="#97ff00"/></linearGradient><linearGradient id="c106" gradientUnits="userSpaceOnUse" x1="27" x2="229"><stop offset="0" stop-color="#00ff46"/><stop offset="0.535" stop-color="#00ff19"/><stop offset="0.723" stop-color="#01ff03"/><stop offset="0.866" stop-color="#4cff00"/><stop offset="1" stop-color="#9cff00"/></linearGradient><linearGradient id="c107" gradientUnits="userSpaceOnUse" x1="27" x2="230"><stop offset="0" stop-color="#00ff47"/><stop offset="0.527" stop-color="#00ff1a"/><stop offset="0.719" stop-color="#02ff04"/><stop offset="0.803" stop-color="#2dff00"/><stop offset="0.975" stop-color="#91ff00"/><stop offset="1" stop-color="#a1ff00"/></linearGradient><linearGradient id="c108" gradientUnits="userSpaceOnUse" x1="27" x2="231"><stop offset="0" stop-color="#00ff48"/><stop offset="0.525" stop-color="#00ff1b"/><stop offset="0.711" stop-color="#01ff05"/><stop offset="0.789" stop-color="#28ff00"/><stop offset="0.961" stop-color="#8cff00"/><stop offset="1" stop-color="#a6ff00"/></linearGradient><linearGradient id="c109" gradientUnits="userSpaceOnUse" x1="27" x2="232"><stop offset="0" stop-color="#00ff49"/><stop offset="0.522" stop-color="#00ff1c"/><stop offset="0.707" stop-color="#01ff06"/><stop offset="0.785" stop-color="#29ff00"/><stop offset="0.956" stop-color="#8eff00"/><stop offset="1" stop-color="#abff00"/></linearGradient><linearGradient id="c110" gradientUnits="userSpaceOnUse" x1="27" x2="233"><stop offset="0" stop-color="#00ff4a"/><stop offset="0.519" stop-color="#00ff1d"/><stop offset="0.704" stop-color="#02ff07"/><stop offset="0.786" stop-color="#2dff00"/><stop offset="0.956" stop-color="#93ff00"/><stop offset="1" stop-color="#b1ff00"/></linearGradient><linearGradient id="c111" gradientUnits="userSpaceOnUse" x1="27" x2="235"><stop offset="0" stop-color="#00ff4b"/><stop offset="0.514" stop-color="#00ff1e"/><stop offset="0.692" stop-color="#00ff09"/><stop offset="0.784" stop-color="#31ff00"/><stop offset="0.947" stop-color="#95ff00"/><stop offset="1" stop-color="#b9ff00"/></linearGradient><linearGradient id="c112" gradientUnits="userSpaceOnUse" x1="27" x2="236"><stop offset="0" stop-color="#00ff4c"/><stop offset="0.512" stop-color="#00ff1f"/><stop offset="0.689" stop-color="#01ff0a"/><stop offset="0.785" stop-color="#34ff00"/><stop offset="0.947" stop-color="#9aff00"/><stop offset="1" stop-color="#bfff00"/></linearGradient><linearGradient id="c113" gradientUnits="userSpaceOnUse" x1="27" x2="237"><stop offset="0" stop-color="#00ff4d"/><stop offset="0.505" stop-color="#00ff21"/><stop offset="0.686" stop-color="#02ff0b"/><stop offset="0.786" stop-color="#38ff00"/><stop offset="0.943" stop-color="#9cff00"/><stop offset="1" stop-color="#c5ff00"/></linearGradient><linearGradient id="c114" gradientUnits="userSpaceOnUse" x1="27" x2="238"><stop offset="0" stop-color="#00ff4e"/><stop offset="0.502" stop-color="#0f2"/><stop offset="0.678" stop-color="#00ff0d"/><stop offset="0.787" stop-color="#3cff00"/><stop offset="0.943" stop-color="#a1ff00"/><stop offset="1" stop-color="#caff00"/></linearGradient><linearGradient id="c115" gradientUnits="userSpaceOnUse" x1="28" x2="239"><stop offset="0" stop-color="#00ff4e"/><stop offset="0.502" stop-color="#0f2"/><stop offset="0.673" stop-color="#01ff0e"/><stop offset="0.791" stop-color="#43ff00"/><stop offset="0.948" stop-color="#a9ff00"/><stop offset="1" stop-color="#d0ff00"/></linearGradient><linearGradient id="c116" gradientUnits="userSpaceOnUse" x1="28" x2="240"><stop offset="0" stop-color="#00ff4f"/><stop offset="0.5" stop-color="#00ff23"/><stop offset="0.67" stop-color="#02ff0f"/><stop offset="0.792" stop-color="#47ff00"/><stop offset="0.943" stop-color="#abff00"/><stop offset="1" stop-color="#d6ff00"/></linearGradient><linearGradient id="c117" gradientUnits="userSpaceOnUse" x1="28" x2="241"><stop offset="0" stop-color="#00ff50"/><stop offset="0.493" stop-color="#00ff25"/><stop offset="0.667" stop-color="#03ff10"/><stop offset="0.793" stop-color="#4bff00"/><stop offset="0.944" stop-color="#b1ff00"/><stop offset="1" stop-color="#df0"/></linearGradient><linearGradient id="c118" gradientUnits="userSpaceOnUse" x1="28" x2="242"><stop offset="0" stop-color="#00ff51"/><stop offset="0.491" stop-color="#00ff26"/><stop offset="0.659" stop-color="#01ff11"/><stop offset="0.799" stop-color="#52ff00"/><stop offset="0.949" stop-color="#baff00"/><stop offset="1" stop-color="#e3ff00"/></linearGradient><linearGradient id="c119" gradientUnits="userSpaceOnUse" x1="28" x2="243"><stop offset="0" stop-color="#00ff52"/><stop offset="0.488" stop-color="#00ff27"/><stop offset="0.656" stop-color="#02ff12"/><stop offset="0.8" stop-color="#57ff00"/><stop offset="0.944" stop-color="#bcff00"/><stop offset="1" stop-color="#e9ff00"/></linearGradient><linearGradient id="c120" gradientUnits="userSpaceOnUse" x1="28" x2="244"><stop offset="0" stop-color="#00ff53"/><stop offset="0.486" stop-color="#00ff28"/><stop offset="0.653" stop-color="#03ff13"/><stop offset="0.801" stop-color="#5bff00"/><stop offset="0.944" stop-color="#c2ff00"/><stop offset="1" stop-color="#f0ff00"/></linearGradient><linearGradient id="c121" gradientUnits="userSpaceOnUse" x1="28" x2="245"><stop offset="0" stop-color="#00ff54"/><stop offset="0.484" stop-color="#00ff29"/><stop offset="0.645" stop-color="#01ff15"/><stop offset="0.806" stop-color="#63ff00"/><stop offset="0.945" stop-color="#c8ff00"/><stop offset="1" stop-color="#f6ff00"/></linearGradient><linearGradient id="c122" gradientUnits="userSpaceOnUse" x1="28" x2="246"><stop offset="0" stop-color="#0f5"/><stop offset="0.482" stop-color="#00ff2a"/><stop offset="0.642" stop-color="#02ff16"/><stop offset="0.803" stop-color="#64ff00"/><stop offset="0.94" stop-color="#caff00"/><stop offset="1" stop-color="#fdff00"/></linearGradient><linearGradient id="c123" gradientUnits="userSpaceOnUse" x1="28" x2="247"><stop offset="0" stop-color="#00ff56"/><stop offset="0.479" stop-color="#00ff2b"/><stop offset="0.639" stop-color="#02ff17"/><stop offset="0.799" stop-color="#65ff00"/><stop offset="0.936" stop-color="#cdff00"/><stop offset="0.995" stop-color="#fffe00"/><stop offset="1" stop-color="#fffa00"/></linearGradient><linearGradient id="c124" gradientUnits="userSpaceOnUse" x1="28" x2="248"><stop offset="0" stop-color="#00ff57"/><stop offset="0.473" stop-color="#00ff2d"/><stop offset="0.632" stop-color="#01ff19"/><stop offset="0.791" stop-color="#64ff01"/><stop offset="0.927" stop-color="#cbff00"/><stop offset="0.986" stop-color="#ff0"/><stop offset="1" stop-color="#fff300"/></linearGradient><linearGradient id="c125" gradientUnits="userSpaceOnUse" x1="28" x2="249"><stop offset="0" stop-color="#00ff58"/><stop offset="0.471" stop-color="#00ff2e"/><stop offset="0.629" stop-color="#01ff1a"/><stop offset="0.783" stop-color="#62ff03"/><stop offset="0.919" stop-color="#caff00"/><stop offset="0.982" stop-color="#fffd00"/><stop offset="1" stop-color="#ffed00"/></linearGradient><linearGradient id="c126" gradientUnits="userSpaceOnUse" x1="29" x2="250"><stop offset="0" stop-color="#00ff59"/><stop offset="0.471" stop-color="#00ff2e"/><stop offset="0.624" stop-color="#02ff1b"/><stop offset="0.778" stop-color="#64ff04"/><stop offset="0.842" stop-color="#92ff00"/><stop offset="0.973" stop-color="#fffe00"/><stop offset="1" stop-color="#ffe700"/></linearGradient><linearGradient id="c127" gradientUnits="userSpaceOnUse" x1="29" x2="252"><stop offset="0" stop-color="#00ff5a"/><stop offset="0.466" stop-color="#00ff30"/><stop offset="0.614" stop-color="#00ff1d"/><stop offset="0.767" stop-color="#62ff06"/><stop offset="0.83" stop-color="#90ff00"/><stop offset="0.955" stop-color="#fbff00"/><stop offset="0.964" stop-color="#fffb00"/><stop offset="1" stop-color="#fd0"/></linearGradient><linearGradient id="c128" gradientUnits="userSpaceOnUse" x1="29" x2="253"><stop offset="0" stop-color="#00ff5b"/><stop offset="0.464" stop-color="#00ff31"/><stop offset="0.612" stop-color="#01ff1e"/><stop offset="0.763" stop-color="#64ff07"/><stop offset="0.826" stop-color="#92ff00"/><stop offset="0.946" stop-color="#f9ff00"/><stop offset="0.96" stop-color="#fff800"/><stop offset="1" stop-color="#ffd800"/></linearGradient><linearGradient id="c129" gradientUnits="userSpaceOnUse" x1="29" x2="254"><stop offset="0" stop-color="#00ff5c"/><stop offset="0.458" stop-color="#00ff32"/><stop offset="0.609" stop-color="#02ff1f"/><stop offset="0.76" stop-color="#65ff08"/><stop offset="0.827" stop-color="#98ff00"/><stop offset="0.947" stop-color="#fffe00"/><stop offset="1" stop-color="#ffd200"/></linearGradient><linearGradient id="c130" gradientUnits="userSpaceOnUse" x1="29" x2="255"><stop offset="0" stop-color="#00ff5e"/><stop offset="0.456" stop-color="#00ff34"/><stop offset="0.602" stop-color="#00ff21"/><stop offset="0.752" stop-color="#63ff0a"/><stop offset="0.827" stop-color="#9dff00"/><stop offset="0.938" stop-color="#ff0"/><stop offset="1" stop-color="#ffcd00"/></linearGradient><linearGradient id="c131" gradientUnits="userSpaceOnUse" x1="29" x2="256"><stop offset="0" stop-color="#00ff5f"/><stop offset="0.454" stop-color="#00ff35"/><stop offset="0.599" stop-color="#01ff22"/><stop offset="0.744" stop-color="#62ff0c"/><stop offset="0.828" stop-color="#a3ff00"/><stop offset="0.93" stop-color="#feff00"/><stop offset="1" stop-color="#ffc800"/></linearGradient><linearGradient id="c132" gradientUnits="userSpaceOnUse" x1="29" x2="257"><stop offset="0" stop-color="#00ff60"/><stop offset="0.452" stop-color="#00ff36"/><stop offset="0.596" stop-color="#02ff23"/><stop offset="0.741" stop-color="#63ff0d"/><stop offset="0.829" stop-color="#a9ff00"/><stop offset="0.925" stop-color="#fffe00"/><stop offset="0.991" stop-color="#ffc800"/><stop offset="1" stop-color="#ffc200"/></linearGradient><linearGradient id="c133" gradientUnits="userSpaceOnUse" x1="29" x2="259"><stop offset="0" stop-color="#00ff61"/><stop offset="0.448" stop-color="#00ff37"/><stop offset="0.587" stop-color="#00ff25"/><stop offset="0.73" stop-color="#62ff0f"/><stop offset="0.826" stop-color="#afff00"/><stop offset="0.913" stop-color="#ff0"/><stop offset="0.978" stop-color="#ffc900"/><stop offset="1" stop-color="#fb0"/></linearGradient><linearGradient id="c134" gradientUnits="userSpaceOnUse" x1="29" x2="260"><stop offset="0" stop-color="#00ff62"/><stop offset="0.446" stop-color="#00ff38"/><stop offset="0.584" stop-color="#01ff26"/><stop offset="0.727" stop-color="#63ff10"/><stop offset="0.831" stop-color="#b8ff00"/><stop offset="0.905" stop-color="#feff00"/><stop offset="0.978" stop-color="#ffc400"/><stop offset="1" stop-color="#ffb600"/></linearGradient><linearGradient id="c135" gradientUnits="userSpaceOnUse" x1="29" x2="261"><stop offset="0" stop-color="#00ff63"/><stop offset="0.444" stop-color="#00ff3a"/><stop offset="0.582" stop-color="#02ff28"/><stop offset="0.724" stop-color="#65ff11"/><stop offset="0.832" stop-color="#bfff00"/><stop offset="0.901" stop-color="#fffd00"/><stop offset="0.966" stop-color="#ffc700"/><stop offset="1" stop-color="#ffb100"/></linearGradient><linearGradient id="c136" gradientUnits="userSpaceOnUse" x1="30" x2="263"><stop offset="0" stop-color="#00ff64"/><stop offset="0.438" stop-color="#00ff3b"/><stop offset="0.571" stop-color="#00ff2a"/><stop offset="0.712" stop-color="#63ff13"/><stop offset="0.828" stop-color="#c5ff00"/><stop offset="0.888" stop-color="#ff0"/><stop offset="0.948" stop-color="#ffcb00"/><stop offset="1" stop-color="#ffab00"/></linearGradient><linearGradient id="c137" gradientUnits="userSpaceOnUse" x1="30" x2="264"><stop offset="0" stop-color="#00ff65"/><stop offset="0.436" stop-color="#00ff3c"/><stop offset="0.568" stop-color="#01ff2b"/><stop offset="0.705" stop-color="#61ff15"/><stop offset="0.825" stop-color="#c7ff00"/><stop offset="0.88" stop-color="#feff00"/><stop offset="0.949" stop-color="#ffc600"/><stop offset="1" stop-color="#ffa600"/></linearGradient><linearGradient id="c138" gradientUnits="userSpaceOnUse" x1="30" x2="265"><stop offset="0" stop-color="#0f6"/><stop offset="0.434" stop-color="#00ff3d"/><stop offset="0.566" stop-color="#02ff2c"/><stop offset="0.702" stop-color="#63ff17"/><stop offset="0.821" stop-color="#caff00"/><stop offset="0.877" stop-color="#fffd00"/><stop offset="0.936" stop-color="#ffca00"/><stop offset="1" stop-color="#ffa200"/></linearGradient><linearGradient id="c139" gradientUnits="userSpaceOnUse" x1="30" x2="266"><stop offset="0" stop-color="#00ff68"/><stop offset="0.432" stop-color="#00ff3f"/><stop offset="0.564" stop-color="#03ff2e"/><stop offset="0.699" stop-color="#64ff18"/><stop offset="0.818" stop-color="#ccff01"/><stop offset="0.869" stop-color="#ff0"/><stop offset="0.928" stop-color="#ffca00"/><stop offset="1" stop-color="#ff9e00"/></linearGradient><linearGradient id="c140" gradientUnits="userSpaceOnUse" x1="30" x2="267"><stop offset="0" stop-color="#00ff69"/><stop offset="0.43" stop-color="#00ff40"/><stop offset="0.557" stop-color="#01ff2f"/><stop offset="0.692" stop-color="#63ff1a"/><stop offset="0.81" stop-color="#cbff04"/><stop offset="0.861" stop-color="#feff00"/><stop offset="0.928" stop-color="#ffc500"/><stop offset="1" stop-color="#ff9a00"/></linearGradient><linearGradient id="c141" gradientUnits="userSpaceOnUse" x1="30" x2="269"><stop offset="0" stop-color="#00ff6a"/><stop offset="0.427" stop-color="#00ff41"/><stop offset="0.552" stop-color="#02ff31"/><stop offset="0.686" stop-color="#64ff1b"/><stop offset="0.799" stop-color="#c9ff06"/><stop offset="0.845" stop-color="#f8ff00"/><stop offset="0.858" stop-color="#fff900"/><stop offset="0.921" stop-color="#ffc300"/><stop offset="1" stop-color="#ff9400"/></linearGradient><linearGradient id="c142" gradientUnits="userSpaceOnUse" x1="30" x2="270"><stop offset="0" stop-color="#00ff6b"/><stop offset="0.425" stop-color="#00ff43"/><stop offset="0.55" stop-color="#02ff32"/><stop offset="0.683" stop-color="#66ff1d"/><stop offset="0.796" stop-color="#ccff07"/><stop offset="0.846" stop-color="#fffe00"/><stop offset="0.904" stop-color="#ffca00"/><stop offset="0.983" stop-color="#f90"/><stop offset="1" stop-color="#ff9000"/></linearGradient><linearGradient id="c143" gradientUnits="userSpaceOnUse" x1="30" x2="271"><stop offset="0" stop-color="#00ff6c"/><stop offset="0.423" stop-color="#0f4"/><stop offset="0.544" stop-color="#00ff34"/><stop offset="0.676" stop-color="#64ff1f"/><stop offset="0.788" stop-color="#caff09"/><stop offset="0.838" stop-color="#feff00"/><stop offset="0.9" stop-color="#ffc700"/><stop offset="0.979" stop-color="#ff9700"/><stop offset="1" stop-color="#ff8d00"/></linearGradient><linearGradient id="c144" gradientUnits="userSpaceOnUse" x1="30" x2="272"><stop offset="0" stop-color="#00ff6e"/><stop offset="0.421" stop-color="#00ff45"/><stop offset="0.541" stop-color="#01ff36"/><stop offset="0.669" stop-color="#62ff21"/><stop offset="0.781" stop-color="#c9ff0c"/><stop offset="0.835" stop-color="#fffd00"/><stop offset="0.893" stop-color="#ffc800"/><stop offset="0.971" stop-color="#ff9700"/><stop offset="1" stop-color="#ff8900"/></linearGradient><linearGradient id="c145" gradientUnits="userSpaceOnUse" x1="30" x2="273"><stop offset="0" stop-color="#00ff6f"/><stop offset="0.42" stop-color="#00ff47"/><stop offset="0.539" stop-color="#02ff37"/><stop offset="0.667" stop-color="#64ff22"/><stop offset="0.778" stop-color="#cbff0d"/><stop offset="0.827" stop-color="#fffe02"/><stop offset="0.885" stop-color="#ffc900"/><stop offset="0.963" stop-color="#ff9700"/><stop offset="1" stop-color="#ff8600"/></linearGradient><linearGradient id="c146" gradientUnits="userSpaceOnUse" x1="30" x2="274"><stop offset="0" stop-color="#00ff70"/><stop offset="0.414" stop-color="#00ff49"/><stop offset="0.533" stop-color="#00ff39"/><stop offset="0.66" stop-color="#62ff25"/><stop offset="0.77" stop-color="#caff0f"/><stop offset="0.82" stop-color="#feff04"/><stop offset="0.869" stop-color="#ffd000"/><stop offset="0.943" stop-color="#ff9e00"/><stop offset="1" stop-color="#ff8200"/></linearGradient><linearGradient id="c147" gradientUnits="userSpaceOnUse" x1="31" x2="275"><stop offset="0" stop-color="#00ff71"/><stop offset="0.414" stop-color="#00ff4a"/><stop offset="0.529" stop-color="#01ff3a"/><stop offset="0.656" stop-color="#64ff26"/><stop offset="0.766" stop-color="#cf1"/><stop offset="0.816" stop-color="#fffd06"/><stop offset="0.857" stop-color="#ffd500"/><stop offset="0.926" stop-color="#ffa300"/><stop offset="1" stop-color="#ff7f00"/></linearGradient><linearGradient id="c148" gradientUnits="userSpaceOnUse" x1="31" x2="276"><stop offset="0" stop-color="#00ff73"/><stop offset="0.412" stop-color="#00ff4b"/><stop offset="0.527" stop-color="#02ff3c"/><stop offset="0.653" stop-color="#66ff28"/><stop offset="0.759" stop-color="#cbff13"/><stop offset="0.808" stop-color="#fffe08"/><stop offset="0.857" stop-color="#ffcf00"/><stop offset="0.931" stop-color="#ff9d00"/><stop offset="1" stop-color="#ff7c00"/></linearGradient><linearGradient id="c149" gradientUnits="userSpaceOnUse" x1="31" x2="277"><stop offset="0" stop-color="#00ff74"/><stop offset="0.411" stop-color="#00ff4d"/><stop offset="0.52" stop-color="#00ff3e"/><stop offset="0.646" stop-color="#64ff2a"/><stop offset="0.752" stop-color="#c9ff15"/><stop offset="0.801" stop-color="#ffff0a"/><stop offset="0.858" stop-color="#ffc900"/><stop offset="0.931" stop-color="#f90"/><stop offset="1" stop-color="#ff7900"/></linearGradient><linearGradient id="c150" gradientUnits="userSpaceOnUse" x1="31" x2="278"><stop offset="0" stop-color="#00ff75"/><stop offset="0.409" stop-color="#00ff4e"/><stop offset="0.518" stop-color="#01ff3f"/><stop offset="0.64" stop-color="#62ff2c"/><stop offset="0.745" stop-color="#c7ff18"/><stop offset="0.798" stop-color="#fffc0c"/><stop offset="0.854" stop-color="#ffc600"/><stop offset="0.927" stop-color="#ff9700"/><stop offset="1" stop-color="#ff7600"/></linearGradient><linearGradient id="c151" gradientUnits="userSpaceOnUse" x1="31" x2="279"><stop offset="0" stop-color="#00ff76"/><stop offset="0.407" stop-color="#00ff50"/><stop offset="0.516" stop-color="#02ff41"/><stop offset="0.637" stop-color="#63ff2e"/><stop offset="0.742" stop-color="#caff19"/><stop offset="0.79" stop-color="#fffe0e"/><stop offset="0.843" stop-color="#ffca01"/><stop offset="0.915" stop-color="#f90"/><stop offset="1" stop-color="#ff7300"/></linearGradient><linearGradient id="c152" gradientUnits="userSpaceOnUse" x1="31" x2="280"><stop offset="0" stop-color="#00ff78"/><stop offset="0.406" stop-color="#00ff51"/><stop offset="0.51" stop-color="#00ff43"/><stop offset="0.631" stop-color="#62ff30"/><stop offset="0.735" stop-color="#c8ff1c"/><stop offset="0.783" stop-color="#ff1"/><stop offset="0.839" stop-color="#ffc802"/><stop offset="0.912" stop-color="#ff9800"/><stop offset="1" stop-color="#ff7000"/></linearGradient><linearGradient id="c153" gradientUnits="userSpaceOnUse" x1="31" x2="282"><stop offset="0" stop-color="#00ff79"/><stop offset="0.402" stop-color="#00ff53"/><stop offset="0.506" stop-color="#01ff45"/><stop offset="0.625" stop-color="#63ff31"/><stop offset="0.729" stop-color="#cbff1d"/><stop offset="0.773" stop-color="#fdff13"/><stop offset="0.837" stop-color="#ffc203"/><stop offset="0.908" stop-color="#ff9300"/><stop offset="1" stop-color="#ff6b00"/></linearGradient><linearGradient id="c154" gradientUnits="userSpaceOnUse" x1="31" x2="283"><stop offset="0" stop-color="#00ff7b"/><stop offset="0.401" stop-color="#00ff54"/><stop offset="0.504" stop-color="#02ff46"/><stop offset="0.623" stop-color="#65ff33"/><stop offset="0.726" stop-color="#ceff1f"/><stop offset="0.77" stop-color="#fffe15"/><stop offset="0.821" stop-color="#ffca07"/><stop offset="0.869" stop-color="#ffa700"/><stop offset="0.956" stop-color="#ff7900"/><stop offset="1" stop-color="#ff6900"/></linearGradient><linearGradient id="c155" gradientUnits="userSpaceOnUse" x1="32" x2="284"><stop offset="0" stop-color="#00ff7c"/><stop offset="0.397" stop-color="#00ff56"/><stop offset="0.496" stop-color="#00ff48"/><stop offset="0.611" stop-color="#60ff36"/><stop offset="0.714" stop-color="#c8ff22"/><stop offset="0.762" stop-color="#ffff18"/><stop offset="0.813" stop-color="#ffca09"/><stop offset="0.869" stop-color="#ffa200"/><stop offset="0.96" stop-color="#ff7500"/><stop offset="1" stop-color="#f60"/></linearGradient><linearGradient id="c156" gradientUnits="userSpaceOnUse" x1="32" x2="285"><stop offset="0" stop-color="#00ff7d"/><stop offset="0.395" stop-color="#00ff57"/><stop offset="0.494" stop-color="#01ff4a"/><stop offset="0.609" stop-color="#61ff38"/><stop offset="0.708" stop-color="#c6ff25"/><stop offset="0.755" stop-color="#fdff1a"/><stop offset="0.814" stop-color="#ffc509"/><stop offset="0.87" stop-color="#ff9e00"/><stop offset="0.96" stop-color="#ff7100"/><stop offset="1" stop-color="#ff6300"/></linearGradient><linearGradient id="c157" gradientUnits="userSpaceOnUse" x1="32" x2="286"><stop offset="0" stop-color="#00ff7e"/><stop offset="0.394" stop-color="#00ff59"/><stop offset="0.492" stop-color="#02ff4c"/><stop offset="0.606" stop-color="#63ff39"/><stop offset="0.705" stop-color="#c9ff26"/><stop offset="0.752" stop-color="#fffd1c"/><stop offset="0.803" stop-color="#ffc90c"/><stop offset="0.87" stop-color="#f90"/><stop offset="0.965" stop-color="#ff6d00"/><stop offset="1" stop-color="#ff6100"/></linearGradient><linearGradient id="c158" gradientUnits="userSpaceOnUse" x1="32" x2="287"><stop offset="0" stop-color="#00ff80"/><stop offset="0.392" stop-color="#00ff5a"/><stop offset="0.486" stop-color="#00ff4e"/><stop offset="0.596" stop-color="#5dff3c"/><stop offset="0.694" stop-color="#c2ff2a"/><stop offset="0.745" stop-color="#ffff1e"/><stop offset="0.796" stop-color="#ffca0e"/><stop offset="0.863" stop-color="#ff9a00"/><stop offset="0.957" stop-color="#ff6d00"/><stop offset="1" stop-color="#ff5e00"/></linearGradient><linearGradient id="c159" gradientUnits="userSpaceOnUse" x1="32" x2="288"><stop offset="0" stop-color="#00ff81"/><stop offset="0.391" stop-color="#00ff5c"/><stop offset="0.484" stop-color="#01ff50"/><stop offset="0.598" stop-color="#63ff3e"/><stop offset="0.695" stop-color="#caff2b"/><stop offset="0.738" stop-color="#feff21"/><stop offset="0.797" stop-color="#ffc40e"/><stop offset="0.867" stop-color="#ff9300"/><stop offset="0.965" stop-color="#ff6700"/><stop offset="1" stop-color="#ff5c00"/></linearGradient><linearGradient id="c160" gradientUnits="userSpaceOnUse" x1="32" x2="289"><stop offset="0" stop-color="#00ff83"/><stop offset="0.389" stop-color="#00ff5e"/><stop offset="0.482" stop-color="#02ff51"/><stop offset="0.595" stop-color="#65ff3f"/><stop offset="0.693" stop-color="#ccff2c"/><stop offset="0.735" stop-color="#fffd23"/><stop offset="0.786" stop-color="#ffc812"/><stop offset="0.852" stop-color="#ff9802"/><stop offset="0.946" stop-color="#ff6c00"/><stop offset="1" stop-color="#ff5900"/></linearGradient><linearGradient id="c161" gradientUnits="userSpaceOnUse" x1="33" x2="290"><stop offset="0" stop-color="#00ff84"/><stop offset="0.389" stop-color="#00ff5f"/><stop offset="0.479" stop-color="#02ff53"/><stop offset="0.588" stop-color="#63ff42"/><stop offset="0.685" stop-color="#cbff2f"/><stop offset="0.728" stop-color="#ffff26"/><stop offset="0.778" stop-color="#ffc914"/><stop offset="0.844" stop-color="#ff9804"/><stop offset="0.903" stop-color="#ff7a00"/><stop offset="1" stop-color="#ff5700"/></linearGradient><linearGradient id="c162" gradientUnits="userSpaceOnUse" x1="33" x2="292"><stop offset="0" stop-color="#00ff85"/><stop offset="0.386" stop-color="#00ff61"/><stop offset="0.471" stop-color="#0f5"/><stop offset="0.579" stop-color="#61ff44"/><stop offset="0.676" stop-color="#c9ff32"/><stop offset="0.718" stop-color="#feff28"/><stop offset="0.772" stop-color="#ffc615"/><stop offset="0.838" stop-color="#ff9605"/><stop offset="0.888" stop-color="#ff7c00"/><stop offset="1" stop-color="#ff5300"/></linearGradient><linearGradient id="c163" gradientUnits="userSpaceOnUse" x1="33" x2="293"><stop offset="0" stop-color="#00ff87"/><stop offset="0.385" stop-color="#00ff62"/><stop offset="0.469" stop-color="#01ff57"/><stop offset="0.577" stop-color="#62ff46"/><stop offset="0.669" stop-color="#c7ff34"/><stop offset="0.715" stop-color="#fffd2a"/><stop offset="0.765" stop-color="#ffc717"/><stop offset="0.831" stop-color="#ff9707"/><stop offset="0.888" stop-color="#ff7900"/><stop offset="1" stop-color="#ff5100"/></linearGradient><linearGradient id="c164" gradientUnits="userSpaceOnUse" x1="33" x2="294"><stop offset="0" stop-color="#0f8"/><stop offset="0.383" stop-color="#00ff64"/><stop offset="0.467" stop-color="#02ff59"/><stop offset="0.575" stop-color="#64ff48"/><stop offset="0.667" stop-color="#caff36"/><stop offset="0.709" stop-color="#fffe2d"/><stop offset="0.755" stop-color="#ffcb1b"/><stop offset="0.816" stop-color="#ff9c0a"/><stop offset="0.885" stop-color="#f70"/><stop offset="1" stop-color="#ff4f00"/></linearGradient><linearGradient id="c165" gradientUnits="userSpaceOnUse" x1="33" x2="295"><stop offset="0" stop-color="#00ff8a"/><stop offset="0.382" stop-color="#0f6"/><stop offset="0.462" stop-color="#00ff5b"/><stop offset="0.569" stop-color="#62ff4a"/><stop offset="0.66" stop-color="#c8ff39"/><stop offset="0.702" stop-color="#feff30"/><stop offset="0.756" stop-color="#ffc51b"/><stop offset="0.821" stop-color="#ff950a"/><stop offset="0.889" stop-color="#ff7200"/><stop offset="1" stop-color="#ff4c00"/></linearGradient><linearGradient id="c166" gradientUnits="userSpaceOnUse" x1="33" x2="296"><stop offset="0" stop-color="#00ff8b"/><stop offset="0.38" stop-color="#00ff68"/><stop offset="0.46" stop-color="#01ff5d"/><stop offset="0.567" stop-color="#64ff4c"/><stop offset="0.658" stop-color="#cbff3b"/><stop offset="0.7" stop-color="#fffd31"/><stop offset="0.745" stop-color="#ffc91f"/><stop offset="0.806" stop-color="#ff9a0d"/><stop offset="0.886" stop-color="#ff7000"/><stop offset="1" stop-color="#ff4a00"/></linearGradient><linearGradient id="c167" gradientUnits="userSpaceOnUse" x1="33" x2="297"><stop offset="0" stop-color="#00ff8d"/><stop offset="0.379" stop-color="#00ff69"/><stop offset="0.458" stop-color="#02ff5f"/><stop offset="0.561" stop-color="#62ff4f"/><stop offset="0.652" stop-color="#c9ff3e"/><stop offset="0.693" stop-color="#fffe34"/><stop offset="0.739" stop-color="#ffca21"/><stop offset="0.799" stop-color="#ff9a0f"/><stop offset="0.883" stop-color="#ff6f00"/><stop offset="1" stop-color="#ff4800"/></linearGradient><linearGradient id="c168" gradientUnits="userSpaceOnUse" x1="33" x2="298"><stop offset="0" stop-color="#00ff8f"/><stop offset="0.377" stop-color="#00ff6b"/><stop offset="0.453" stop-color="#00ff61"/><stop offset="0.555" stop-color="#60ff52"/><stop offset="0.645" stop-color="#c7ff40"/><stop offset="0.687" stop-color="#feff37"/><stop offset="0.736" stop-color="#ffc822"/><stop offset="0.796" stop-color="#ff9810"/><stop offset="0.879" stop-color="#ff6d00"/><stop offset="1" stop-color="#ff4600"/></linearGradient><linearGradient id="c169" gradientUnits="userSpaceOnUse" x1="34" x2="299"><stop offset="0" stop-color="#00ff90"/><stop offset="0.377" stop-color="#00ff6d"/><stop offset="0.449" stop-color="#01ff63"/><stop offset="0.551" stop-color="#62ff54"/><stop offset="0.642" stop-color="#caff43"/><stop offset="0.683" stop-color="#fffc39"/><stop offset="0.728" stop-color="#ffc825"/><stop offset="0.789" stop-color="#ff9912"/><stop offset="0.872" stop-color="#ff6d01"/><stop offset="0.992" stop-color="#ff4600"/><stop offset="1" stop-color="#f40"/></linearGradient><linearGradient id="c170" gradientUnits="userSpaceOnUse" x1="34" x2="301"><stop offset="0" stop-color="#00ff91"/><stop offset="0.375" stop-color="#00ff6f"/><stop offset="0.446" stop-color="#02ff65"/><stop offset="0.547" stop-color="#64ff56"/><stop offset="0.633" stop-color="#c9ff45"/><stop offset="0.674" stop-color="#fffe3c"/><stop offset="0.719" stop-color="#ffc927"/><stop offset="0.779" stop-color="#ff9914"/><stop offset="0.861" stop-color="#ff6d03"/><stop offset="0.978" stop-color="#ff4700"/><stop offset="1" stop-color="#ff4100"/></linearGradient><linearGradient id="c171" gradientUnits="userSpaceOnUse" x1="34" x2="302"><stop offset="0" stop-color="#00ff93"/><stop offset="0.373" stop-color="#00ff70"/><stop offset="0.44" stop-color="#00ff68"/><stop offset="0.537" stop-color="#5eff59"/><stop offset="0.623" stop-color="#c2ff49"/><stop offset="0.668" stop-color="#feff3f"/><stop offset="0.716" stop-color="#ffc728"/><stop offset="0.776" stop-color="#ff9715"/><stop offset="0.858" stop-color="#ff6c04"/><stop offset="0.933" stop-color="#ff5100"/><stop offset="1" stop-color="#ff3f00"/></linearGradient><linearGradient id="c172" gradientUnits="userSpaceOnUse" x1="34" x2="303"><stop offset="0" stop-color="#00ff95"/><stop offset="0.372" stop-color="#00ff72"/><stop offset="0.439" stop-color="#01ff6a"/><stop offset="0.539" stop-color="#64ff5a"/><stop offset="0.625" stop-color="#caff4a"/><stop offset="0.662" stop-color="#fdff42"/><stop offset="0.717" stop-color="#ffc028"/><stop offset="0.781" stop-color="#ff9014"/><stop offset="0.866" stop-color="#ff6602"/><stop offset="0.989" stop-color="#ff4000"/><stop offset="1" stop-color="#ff3d00"/></linearGradient><linearGradient id="c173" gradientUnits="userSpaceOnUse" x1="34" x2="304"><stop offset="0" stop-color="#00ff96"/><stop offset="0.374" stop-color="#00ff74"/><stop offset="0.437" stop-color="#02ff6c"/><stop offset="0.537" stop-color="#66ff5c"/><stop offset="0.622" stop-color="#cdff4d"/><stop offset="0.659" stop-color="#fffe44"/><stop offset="0.704" stop-color="#ffc82e"/><stop offset="0.763" stop-color="#ff9819"/><stop offset="0.844" stop-color="#ff6c07"/><stop offset="0.907" stop-color="#ff5400"/><stop offset="1" stop-color="#ff3b00"/></linearGradient><linearGradient id="c174" gradientUnits="userSpaceOnUse" x1="34" x2="305"><stop offset="0" stop-color="#00ff98"/><stop offset="0.373" stop-color="#00ff76"/><stop offset="0.432" stop-color="#00ff6e"/><stop offset="0.524" stop-color="#5bff60"/><stop offset="0.609" stop-color="#c1ff51"/><stop offset="0.653" stop-color="#feff48"/><stop offset="0.697" stop-color="#ffc931"/><stop offset="0.756" stop-color="#ff981b"/><stop offset="0.838" stop-color="#ff6c08"/><stop offset="0.904" stop-color="#ff5300"/><stop offset="1" stop-color="#ff3900"/></linearGradient><linearGradient id="c175" gradientUnits="userSpaceOnUse" x1="34" x2="306"><stop offset="0" stop-color="#00ff9a"/><stop offset="0.371" stop-color="#00ff78"/><stop offset="0.43" stop-color="#01ff70"/><stop offset="0.526" stop-color="#61ff62"/><stop offset="0.61" stop-color="#c9ff53"/><stop offset="0.647" stop-color="#fdff4b"/><stop offset="0.699" stop-color="#ffc330"/><stop offset="0.757" stop-color="#ff941b"/><stop offset="0.838" stop-color="#ff6908"/><stop offset="0.908" stop-color="#ff4f00"/><stop offset="1" stop-color="#ff3700"/></linearGradient><linearGradient id="c176" gradientUnits="userSpaceOnUse" x1="34" x2="307"><stop offset="0" stop-color="#00ff9b"/><stop offset="0.37" stop-color="#00ff7a"/><stop offset="0.429" stop-color="#02ff72"/><stop offset="0.524" stop-color="#63ff64"/><stop offset="0.604" stop-color="#c7ff56"/><stop offset="0.645" stop-color="#fffe4d"/><stop offset="0.689" stop-color="#ffc734"/><stop offset="0.747" stop-color="#ff961e"/><stop offset="0.828" stop-color="#ff6a0b"/><stop offset="0.908" stop-color="#ff4d00"/><stop offset="1" stop-color="#ff3600"/></linearGradient><linearGradient id="c177" gradientUnits="userSpaceOnUse" x1="35" x2="308"><stop offset="0" stop-color="#00ff9d"/><stop offset="0.37" stop-color="#00ff7c"/><stop offset="0.421" stop-color="#00ff75"/><stop offset="0.509" stop-color="#59ff68"/><stop offset="0.593" stop-color="#c0ff59"/><stop offset="0.637" stop-color="#ffff50"/><stop offset="0.681" stop-color="#ffc837"/><stop offset="0.736" stop-color="#f92"/><stop offset="0.813" stop-color="#ff6e0e"/><stop offset="0.908" stop-color="#ff4b00"/><stop offset="1" stop-color="#ff3400"/></linearGradient><linearGradient id="c178" gradientUnits="userSpaceOnUse" x1="35" x2="310"><stop offset="0" stop-color="#00ff9f"/><stop offset="0.367" stop-color="#00ff7e"/><stop offset="0.418" stop-color="#0f7"/><stop offset="0.513" stop-color="#63ff69"/><stop offset="0.593" stop-color="#c8ff5b"/><stop offset="0.629" stop-color="#fdff54"/><stop offset="0.68" stop-color="#ffc237"/><stop offset="0.738" stop-color="#ff9220"/><stop offset="0.818" stop-color="#ff670c"/><stop offset="0.905" stop-color="#ff4800"/><stop offset="1" stop-color="#ff3100"/></linearGradient><linearGradient id="c179" gradientUnits="userSpaceOnUse" x1="35" x2="311"><stop offset="0" stop-color="#00ffa0"/><stop offset="0.366" stop-color="#00ff80"/><stop offset="0.417" stop-color="#01ff7a"/><stop offset="0.511" stop-color="#65ff6c"/><stop offset="0.591" stop-color="#cbff5d"/><stop offset="0.627" stop-color="#fffd55"/><stop offset="0.667" stop-color="#ffca3d"/><stop offset="0.721" stop-color="#ff9a26"/><stop offset="0.797" stop-color="#ff6e11"/><stop offset="0.906" stop-color="#ff4600"/><stop offset="1" stop-color="#ff3000"/></linearGradient><linearGradient id="c180" gradientUnits="userSpaceOnUse" x1="35" x2="312"><stop offset="0" stop-color="#00ffa2"/><stop offset="0.368" stop-color="#00ff82"/><stop offset="0.415" stop-color="#03ff7c"/><stop offset="0.505" stop-color="#63ff6f"/><stop offset="0.585" stop-color="#c9ff61"/><stop offset="0.621" stop-color="#ffff59"/><stop offset="0.661" stop-color="#ffcb40"/><stop offset="0.715" stop-color="#ff9a28"/><stop offset="0.787" stop-color="#ff6f13"/><stop offset="0.892" stop-color="#ff4800"/><stop offset="1" stop-color="#ff2e00"/></linearGradient><linearGradient id="c181" gradientUnits="userSpaceOnUse" x1="35" x2="313"><stop offset="0" stop-color="#00ffa4"/><stop offset="0.367" stop-color="#00ff84"/><stop offset="0.41" stop-color="#00ff7e"/><stop offset="0.5" stop-color="#61ff72"/><stop offset="0.579" stop-color="#c7ff64"/><stop offset="0.615" stop-color="#fdff5d"/><stop offset="0.662" stop-color="#ffc43f"/><stop offset="0.716" stop-color="#ff9628"/><stop offset="0.791" stop-color="#ff6a13"/><stop offset="0.899" stop-color="#f40"/><stop offset="1" stop-color="#ff2c00"/></linearGradient><linearGradient id="c182" gradientUnits="userSpaceOnUse" x1="35" x2="314"><stop offset="0" stop-color="#00ffa6"/><stop offset="0.366" stop-color="#00ff86"/><stop offset="0.409" stop-color="#01ff81"/><stop offset="0.498" stop-color="#63ff74"/><stop offset="0.577" stop-color="#cbff66"/><stop offset="0.613" stop-color="#fffd5f"/><stop offset="0.652" stop-color="#ffc944"/><stop offset="0.706" stop-color="#ff992c"/><stop offset="0.778" stop-color="#ff6e16"/><stop offset="0.882" stop-color="#ff4702"/><stop offset="1" stop-color="#ff2b00"/></linearGradient><linearGradient id="c183" gradientUnits="userSpaceOnUse" x1="36" x2="316"><stop offset="0" stop-color="#00ffa7"/><stop offset="0.364" stop-color="#0f8"/><stop offset="0.404" stop-color="#02ff83"/><stop offset="0.493" stop-color="#65ff76"/><stop offset="0.568" stop-color="#c9ff6a"/><stop offset="0.604" stop-color="#ffff63"/><stop offset="0.643" stop-color="#ffca47"/><stop offset="0.696" stop-color="#ff992e"/><stop offset="0.768" stop-color="#ff6e18"/><stop offset="0.871" stop-color="#ff4604"/><stop offset="0.957" stop-color="#ff3100"/><stop offset="1" stop-color="#ff2800"/></linearGradient><linearGradient id="c184" gradientUnits="userSpaceOnUse" x1="36" x2="317"><stop offset="0" stop-color="#00ffa9"/><stop offset="0.363" stop-color="#00ff8a"/><stop offset="0.399" stop-color="#00ff86"/><stop offset="0.488" stop-color="#62ff7a"/><stop offset="0.562" stop-color="#c7ff6d"/><stop offset="0.598" stop-color="#fdff66"/><stop offset="0.644" stop-color="#ffc346"/><stop offset="0.698" stop-color="#ff942e"/><stop offset="0.772" stop-color="#ff6917"/><stop offset="0.879" stop-color="#ff4203"/><stop offset="1" stop-color="#ff2700"/></linearGradient><linearGradient id="c185" gradientUnits="userSpaceOnUse" x1="36" x2="318"><stop offset="0" stop-color="#00ffab"/><stop offset="0.365" stop-color="#00ff8c"/><stop offset="0.397" stop-color="#01ff88"/><stop offset="0.486" stop-color="#64ff7c"/><stop offset="0.56" stop-color="#caff70"/><stop offset="0.596" stop-color="#fffd68"/><stop offset="0.635" stop-color="#ffc84c"/><stop offset="0.688" stop-color="#ff9731"/><stop offset="0.759" stop-color="#ff6c1a"/><stop offset="0.862" stop-color="#ff4506"/><stop offset="0.933" stop-color="#f30"/><stop offset="1" stop-color="#ff2500"/></linearGradient><linearGradient id="c186" gradientUnits="userSpaceOnUse" x1="36" x2="319"><stop offset="0" stop-color="#00ffad"/><stop offset="0.364" stop-color="#00ff8f"/><stop offset="0.396" stop-color="#02ff8b"/><stop offset="0.481" stop-color="#62ff7f"/><stop offset="0.555" stop-color="#c8ff73"/><stop offset="0.59" stop-color="#ffff6c"/><stop offset="0.629" stop-color="#ffc94f"/><stop offset="0.678" stop-color="#ff9a35"/><stop offset="0.749" stop-color="#ff6e1d"/><stop offset="0.848" stop-color="#ff4708"/><stop offset="0.922" stop-color="#f30"/><stop offset="1" stop-color="#ff2400"/></linearGradient><linearGradient id="c187" gradientUnits="userSpaceOnUse" x1="36" x2="320"><stop offset="0" stop-color="#00ffaf"/><stop offset="0.366" stop-color="#00ff91"/><stop offset="0.391" stop-color="#00ff8e"/><stop offset="0.475" stop-color="#60ff82"/><stop offset="0.549" stop-color="#c6ff76"/><stop offset="0.585" stop-color="#feff70"/><stop offset="0.627" stop-color="#ffc650"/><stop offset="0.68" stop-color="#ff9535"/><stop offset="0.75" stop-color="#ff6a1d"/><stop offset="0.852" stop-color="#ff4408"/><stop offset="0.926" stop-color="#ff3100"/><stop offset="1" stop-color="#f20"/></linearGradient><linearGradient id="c188" gradientUnits="userSpaceOnUse" x1="37" x2="321"><stop offset="0" stop-color="#00ffb1"/><stop offset="0.366" stop-color="#00ff93"/><stop offset="0.387" stop-color="#01ff90"/><stop offset="0.472" stop-color="#62ff85"/><stop offset="0.546" stop-color="#c9ff79"/><stop offset="0.581" stop-color="#fffc72"/><stop offset="0.62" stop-color="#ffc753"/><stop offset="0.669" stop-color="#ff9839"/><stop offset="0.739" stop-color="#ff6c20"/><stop offset="0.838" stop-color="#ff460a"/><stop offset="0.926" stop-color="#ff2f00"/><stop offset="1" stop-color="#ff2100"/></linearGradient><linearGradient id="c189" gradientUnits="userSpaceOnUse" x1="37" x2="322"><stop offset="0" stop-color="#00ffb3"/><stop offset="0.365" stop-color="#00ff95"/><stop offset="0.386" stop-color="#02ff93"/><stop offset="0.47" stop-color="#64ff88"/><stop offset="0.544" stop-color="#ccff7c"/><stop offset="0.575" stop-color="#fffe76"/><stop offset="0.614" stop-color="#ffc857"/><stop offset="0.663" stop-color="#ff993b"/><stop offset="0.733" stop-color="#ff6c22"/><stop offset="0.832" stop-color="#ff450b"/><stop offset="0.926" stop-color="#ff2d00"/><stop offset="1" stop-color="#ff2000"/></linearGradient><linearGradient id="c190" gradientUnits="userSpaceOnUse" x1="37" x2="324"><stop offset="0" stop-color="#00ffb5"/><stop offset="0.366" stop-color="#00ff97"/><stop offset="0.38" stop-color="#00ff96"/><stop offset="0.46" stop-color="#5dff8c"/><stop offset="0.533" stop-color="#c5ff80"/><stop offset="0.568" stop-color="#feff7a"/><stop offset="0.61" stop-color="#ffc558"/><stop offset="0.659" stop-color="#ff963c"/><stop offset="0.728" stop-color="#ff6a23"/><stop offset="0.826" stop-color="#ff440c"/><stop offset="0.923" stop-color="#ff2b00"/><stop offset="1" stop-color="#ff1e00"/></linearGradient><linearGradient id="c191" gradientUnits="userSpaceOnUse" x1="37" x2="325"><stop offset="0" stop-color="#00ffb7"/><stop offset="0.365" stop-color="#00ff9a"/><stop offset="0.378" stop-color="#01ff98"/><stop offset="0.462" stop-color="#64ff8e"/><stop offset="0.531" stop-color="#c8ff83"/><stop offset="0.562" stop-color="#fcff7e"/><stop offset="0.576" stop-color="#ffeb72"/><stop offset="0.615" stop-color="#ffba54"/><stop offset="0.667" stop-color="#ff8c39"/><stop offset="0.74" stop-color="#ff6220"/><stop offset="0.847" stop-color="#ff3c09"/><stop offset="0.931" stop-color="#ff2800"/><stop offset="1" stop-color="#ff1c00"/></linearGradient><linearGradient id="c192" gradientUnits="userSpaceOnUse" x1="37" x2="326"><stop offset="0" stop-color="#00ffb9"/><stop offset="0.367" stop-color="#00ff9c"/><stop offset="0.377" stop-color="#02ff9b"/><stop offset="0.457" stop-color="#62ff91"/><stop offset="0.526" stop-color="#c6ff87"/><stop offset="0.561" stop-color="#fffe80"/><stop offset="0.595" stop-color="#ffcb61"/><stop offset="0.644" stop-color="#ff9a43"/><stop offset="0.709" stop-color="#ff6e29"/><stop offset="0.803" stop-color="#ff4711"/><stop offset="0.924" stop-color="#ff2800"/><stop offset="1" stop-color="#ff1b00"/></linearGradient><linearGradient id="c193" gradientUnits="userSpaceOnUse" x1="37" x2="327"><stop offset="0" stop-color="#0fb"/><stop offset="0.366" stop-color="#00ff9f"/><stop offset="0.376" stop-color="#03ff9e"/><stop offset="0.455" stop-color="#64ff94"/><stop offset="0.524" stop-color="#c9ff8a"/><stop offset="0.555" stop-color="#feff85"/><stop offset="0.593" stop-color="#ffc862"/><stop offset="0.641" stop-color="#ff9844"/><stop offset="0.707" stop-color="#ff6c2a"/><stop offset="0.8" stop-color="#ff4612"/><stop offset="0.924" stop-color="#ff2600"/><stop offset="1" stop-color="#ff1900"/></linearGradient><linearGradient id="c194" gradientUnits="userSpaceOnUse" x1="38" x2="328"><stop offset="0" stop-color="#00ffbd"/><stop offset="0.369" stop-color="#00ffa1"/><stop offset="0.448" stop-color="#61ff98"/><stop offset="0.517" stop-color="#c7ff8e"/><stop offset="0.548" stop-color="#fcff88"/><stop offset="0.566" stop-color="#ffe578"/><stop offset="0.607" stop-color="#ffb257"/><stop offset="0.662" stop-color="#ff833a"/><stop offset="0.738" stop-color="#ff5a20"/><stop offset="0.848" stop-color="#ff3609"/><stop offset="0.934" stop-color="#ff2300"/><stop offset="1" stop-color="#ff1800"/></linearGradient><linearGradient id="c195" gradientUnits="userSpaceOnUse" x1="38" x2="329"><stop offset="0" stop-color="#00ffbf"/><stop offset="0.368" stop-color="#02ffa4"/><stop offset="0.447" stop-color="#64ff9b"/><stop offset="0.515" stop-color="#cbff91"/><stop offset="0.546" stop-color="#fffe8b"/><stop offset="0.581" stop-color="#ffca6a"/><stop offset="0.625" stop-color="#ff9b4c"/><stop offset="0.687" stop-color="#ff7030"/><stop offset="0.777" stop-color="#ff4917"/><stop offset="0.911" stop-color="#ff2600"/><stop offset="1" stop-color="#ff1700"/></linearGradient><linearGradient id="c196" gradientUnits="userSpaceOnUse" x1="38" x2="330"><stop offset="0" stop-color="#00ffc1"/><stop offset="0.363" stop-color="#00ffa7"/><stop offset="0.432" stop-color="#53ff9f"/><stop offset="0.5" stop-color="#b8ff96"/><stop offset="0.541" stop-color="#feff90"/><stop offset="0.579" stop-color="#ffc76b"/><stop offset="0.627" stop-color="#ff964b"/><stop offset="0.692" stop-color="#ff6b2f"/><stop offset="0.784" stop-color="#ff4415"/><stop offset="0.925" stop-color="#f20"/><stop offset="1" stop-color="#ff1600"/></linearGradient><linearGradient id="c197" gradientUnits="userSpaceOnUse" x1="38" x2="331"><stop offset="0" stop-color="#00ffc3"/><stop offset="0.362" stop-color="#0fa"/><stop offset="0.44" stop-color="#63ffa1"/><stop offset="0.505" stop-color="#c6ff98"/><stop offset="0.536" stop-color="#fcff94"/><stop offset="0.563" stop-color="#ffd678"/><stop offset="0.604" stop-color="#ffa658"/><stop offset="0.662" stop-color="#ff793a"/><stop offset="0.744" stop-color="#ff501f"/><stop offset="0.863" stop-color="#ff2d07"/><stop offset="0.945" stop-color="#ff1d00"/><stop offset="1" stop-color="#ff1400"/></linearGradient><linearGradient id="c198" gradientUnits="userSpaceOnUse" x1="38" x2="332"><stop offset="0" stop-color="#00ffc5"/><stop offset="0.361" stop-color="#01ffad"/><stop offset="0.435" stop-color="#61ffa5"/><stop offset="0.5" stop-color="#c4ff9c"/><stop offset="0.534" stop-color="#fffe96"/><stop offset="0.568" stop-color="#ffc973"/><stop offset="0.612" stop-color="#ff9a53"/><stop offset="0.673" stop-color="#ff6e35"/><stop offset="0.762" stop-color="#ff471b"/><stop offset="0.895" stop-color="#ff2403"/><stop offset="1" stop-color="#ff1300"/></linearGradient><linearGradient id="c199" gradientUnits="userSpaceOnUse" x1="39" x2="333"><stop offset="0" stop-color="#00ffc7"/><stop offset="0.354" stop-color="#00ffb0"/><stop offset="0.418" stop-color="#50ffa9"/><stop offset="0.486" stop-color="#b7ffa1"/><stop offset="0.527" stop-color="#feff9b"/><stop offset="0.561" stop-color="#ffca77"/><stop offset="0.605" stop-color="#ff9a56"/><stop offset="0.667" stop-color="#ff6e37"/><stop offset="0.755" stop-color="#ff471c"/><stop offset="0.888" stop-color="#ff2404"/><stop offset="0.973" stop-color="#ff1600"/><stop offset="1" stop-color="#ff1200"/></linearGradient><linearGradient id="c200" gradientUnits="userSpaceOnUse" x1="39" x2="334"><stop offset="0" stop-color="#00ffca"/><stop offset="0.353" stop-color="#00ffb3"/><stop offset="0.427" stop-color="#61ffac"/><stop offset="0.492" stop-color="#c5ffa4"/><stop offset="0.522" stop-color="#fcff9f"/><stop offset="0.563" stop-color="#ffc275"/><stop offset="0.61" stop-color="#ff9253"/><stop offset="0.675" stop-color="#ff6734"/><stop offset="0.766" stop-color="#ff411a"/><stop offset="0.905" stop-color="#ff1f02"/><stop offset="1" stop-color="#f10"/></linearGradient><linearGradient id="c201" gradientUnits="userSpaceOnUse" x1="39" x2="335"><stop offset="0" stop-color="#0fc"/><stop offset="0.351" stop-color="#01ffb6"/><stop offset="0.426" stop-color="#63ffaf"/><stop offset="0.49" stop-color="#c9ffa7"/><stop offset="0.52" stop-color="#fffda2"/><stop offset="0.554" stop-color="#ffc87c"/><stop offset="0.598" stop-color="#ff985a"/><stop offset="0.659" stop-color="#ff6d3b"/><stop offset="0.747" stop-color="#ff451e"/><stop offset="0.878" stop-color="#ff2306"/><stop offset="0.956" stop-color="#ff1500"/><stop offset="1" stop-color="#ff0f00"/></linearGradient><linearGradient id="c202" gradientUnits="userSpaceOnUse" x1="39" x2="337"><stop offset="0" stop-color="#00ffce"/><stop offset="0.349" stop-color="#02ffb9"/><stop offset="0.423" stop-color="#65ffb2"/><stop offset="0.487" stop-color="#cdffab"/><stop offset="0.513" stop-color="#ffffa7"/><stop offset="0.547" stop-color="#ffc980"/><stop offset="0.591" stop-color="#ff995d"/><stop offset="0.651" stop-color="#ff6d3d"/><stop offset="0.738" stop-color="#ff4520"/><stop offset="0.869" stop-color="#ff2207"/><stop offset="0.953" stop-color="#ff1400"/><stop offset="1" stop-color="#ff0e00"/></linearGradient><linearGradient id="c203" gradientUnits="userSpaceOnUse" x1="39" x2="338"><stop offset="0" stop-color="#00ffd0"/><stop offset="0.344" stop-color="#00ffbd"/><stop offset="0.415" stop-color="#5effb6"/><stop offset="0.478" stop-color="#c4ffaf"/><stop offset="0.508" stop-color="#fdffac"/><stop offset="0.548" stop-color="#ffc17e"/><stop offset="0.592" stop-color="#ff935c"/><stop offset="0.652" stop-color="#ff693c"/><stop offset="0.739" stop-color="#ff4220"/><stop offset="0.873" stop-color="#ff2007"/><stop offset="0.953" stop-color="#ff1300"/><stop offset="1" stop-color="#ff0d00"/></linearGradient><linearGradient id="c204" gradientUnits="userSpaceOnUse" x1="40" x2="340"><stop offset="0" stop-color="#00ffd3"/><stop offset="0.34" stop-color="#01ffc0"/><stop offset="0.41" stop-color="#60ffba"/><stop offset="0.473" stop-color="#c8ffb3"/><stop offset="0.503" stop-color="#fffdae"/><stop offset="0.533" stop-color="#ffcb89"/><stop offset="0.577" stop-color="#ff9a63"/><stop offset="0.633" stop-color="#ff6f43"/><stop offset="0.717" stop-color="#ff4725"/><stop offset="0.84" stop-color="#ff250b"/><stop offset="0.943" stop-color="#ff1300"/><stop offset="1" stop-color="#ff0b00"/></linearGradient><linearGradient id="c205" gradientUnits="userSpaceOnUse" x1="40" x2="341"><stop offset="0" stop-color="#00ffd5"/><stop offset="0.339" stop-color="#02ffc3"/><stop offset="0.409" stop-color="#62ffbd"/><stop offset="0.468" stop-color="#c6ffb7"/><stop offset="0.498" stop-color="#ffffb4"/><stop offset="0.528" stop-color="#ffcc8d"/><stop offset="0.568" stop-color="#ff9d69"/><stop offset="0.625" stop-color="#ff7147"/><stop offset="0.704" stop-color="#ff4929"/><stop offset="0.824" stop-color="#ff260e"/><stop offset="0.944" stop-color="#f10"/><stop offset="1" stop-color="#ff0a00"/></linearGradient><linearGradient id="c206" gradientUnits="userSpaceOnUse" x1="40" x2="342"><stop offset="0" stop-color="#00ffd7"/><stop offset="0.334" stop-color="#00ffc7"/><stop offset="0.401" stop-color="#5bffc2"/><stop offset="0.46" stop-color="#bdffbc"/><stop offset="0.493" stop-color="#fdffb8"/><stop offset="0.53" stop-color="#ffc48b"/><stop offset="0.573" stop-color="#ff9465"/><stop offset="0.632" stop-color="#ff6943"/><stop offset="0.719" stop-color="#ff4225"/><stop offset="0.848" stop-color="#ff200a"/><stop offset="0.947" stop-color="#ff0f00"/><stop offset="1" stop-color="#ff0900"/></linearGradient><linearGradient id="c207" gradientUnits="userSpaceOnUse" x1="40" x2="343"><stop offset="0" stop-color="#00ffda"/><stop offset="0.333" stop-color="#01ffca"/><stop offset="0.403" stop-color="#62ffc5"/><stop offset="0.462" stop-color="#c7ffc0"/><stop offset="0.492" stop-color="#fffdbb"/><stop offset="0.521" stop-color="#ffca93"/><stop offset="0.561" stop-color="#ff9b6d"/><stop offset="0.617" stop-color="#ff6f4a"/><stop offset="0.696" stop-color="#ff482b"/><stop offset="0.815" stop-color="#ff2510"/><stop offset="0.947" stop-color="#ff0e00"/><stop offset="1" stop-color="#ff0800"/></linearGradient><linearGradient id="c208" gradientUnits="userSpaceOnUse" x1="40" x2="344"><stop offset="0" stop-color="#00ffdc"/><stop offset="0.332" stop-color="#02ffce"/><stop offset="0.401" stop-color="#65ffc9"/><stop offset="0.461" stop-color="#cbffc4"/><stop offset="0.487" stop-color="#ffffc1"/><stop offset="0.516" stop-color="#ffcb97"/><stop offset="0.556" stop-color="#ff9c71"/><stop offset="0.612" stop-color="#ff6f4d"/><stop offset="0.691" stop-color="#ff472d"/><stop offset="0.809" stop-color="#ff2511"/><stop offset="0.947" stop-color="#ff0d00"/><stop offset="1" stop-color="#ff0700"/></linearGradient><linearGradient id="c209" gradientUnits="userSpaceOnUse" x1="41" x2="345"><stop offset="0" stop-color="#00ffdf"/><stop offset="0.326" stop-color="#00ffd1"/><stop offset="0.388" stop-color="#58ffcd"/><stop offset="0.447" stop-color="#bcffc9"/><stop offset="0.48" stop-color="#fdffc6"/><stop offset="0.516" stop-color="#ffc394"/><stop offset="0.559" stop-color="#ff926d"/><stop offset="0.618" stop-color="#ff6749"/><stop offset="0.704" stop-color="#ff4029"/><stop offset="0.832" stop-color="#ff1e0d"/><stop offset="0.951" stop-color="#ff0b00"/><stop offset="1" stop-color="#ff0600"/></linearGradient><linearGradient id="c210" gradientUnits="userSpaceOnUse" x1="41" x2="346"><stop offset="0" stop-color="#00ffe1"/><stop offset="0.325" stop-color="#00ffd5"/><stop offset="0.39" stop-color="#5fffd1"/><stop offset="0.449" stop-color="#c6ffcd"/><stop offset="0.479" stop-color="#fffcc8"/><stop offset="0.508" stop-color="#ffc99d"/><stop offset="0.548" stop-color="#ff9975"/><stop offset="0.603" stop-color="#ff6d50"/><stop offset="0.682" stop-color="#ff4630"/><stop offset="0.8" stop-color="#ff2313"/><stop offset="0.948" stop-color="#ff0b00"/><stop offset="1" stop-color="#ff0400"/></linearGradient><linearGradient id="c211" gradientUnits="userSpaceOnUse" x1="41" x2="347"><stop offset="0" stop-color="#00ffe4"/><stop offset="0.324" stop-color="#02ffd9"/><stop offset="0.389" stop-color="#62ffd5"/><stop offset="0.448" stop-color="#caffd1"/><stop offset="0.474" stop-color="#fffecf"/><stop offset="0.503" stop-color="#ffcaa2"/><stop offset="0.542" stop-color="#ff9a79"/><stop offset="0.595" stop-color="#ff6f55"/><stop offset="0.67" stop-color="#ff4834"/><stop offset="0.784" stop-color="#ff2516"/><stop offset="0.944" stop-color="#ff0a00"/><stop offset="1" stop-color="#ff0300"/></linearGradient><linearGradient id="c212" gradientUnits="userSpaceOnUse" x1="41" x2="348"><stop offset="0" stop-color="#00ffe7"/><stop offset="0.319" stop-color="#0fd"/><stop offset="0.378" stop-color="#54ffda"/><stop offset="0.436" stop-color="#bbffd6"/><stop offset="0.469" stop-color="#fdffd4"/><stop offset="0.502" stop-color="#ffc6a3"/><stop offset="0.541" stop-color="#ff977a"/><stop offset="0.596" stop-color="#ff6b54"/><stop offset="0.674" stop-color="#ff4432"/><stop offset="0.792" stop-color="#ff2215"/><stop offset="0.948" stop-color="#ff0800"/><stop offset="1" stop-color="#ff0200"/></linearGradient><linearGradient id="c213" gradientUnits="userSpaceOnUse" x1="41" x2="349"><stop offset="0" stop-color="#00ffe9"/><stop offset="0.318" stop-color="#00ffe0"/><stop offset="0.383" stop-color="#61ffdd"/><stop offset="0.438" stop-color="#c5ffda"/><stop offset="0.464" stop-color="#fbffd9"/><stop offset="0.471" stop-color="#fff5d0"/><stop offset="0.5" stop-color="#ffc3a4"/><stop offset="0.539" stop-color="#ff947b"/><stop offset="0.594" stop-color="#ff6955"/><stop offset="0.672" stop-color="#ff4333"/><stop offset="0.789" stop-color="#ff2115"/><stop offset="0.948" stop-color="#ff0700"/><stop offset="1" stop-color="#ff0100"/></linearGradient><linearGradient id="c214" gradientUnits="userSpaceOnUse" x1="41" x2="351"><stop offset="0" stop-color="#00ffec"/><stop offset="0.316" stop-color="#02ffe4"/><stop offset="0.381" stop-color="#64ffe2"/><stop offset="0.435" stop-color="#c9ffdf"/><stop offset="0.461" stop-color="#fffedd"/><stop offset="0.49" stop-color="#ffc9ad"/><stop offset="0.529" stop-color="#ff9881"/><stop offset="0.581" stop-color="#ff6d5b"/><stop offset="0.655" stop-color="#ff4638"/><stop offset="0.768" stop-color="#ff2319"/><stop offset="0.939" stop-color="#ff0700"/><stop offset="1" stop-color="#f00"/></linearGradient><linearGradient id="c215" gradientUnits="userSpaceOnUse" x1="42" x2="352"><stop offset="0" stop-color="#00ffef"/><stop offset="0.31" stop-color="#00ffe8"/><stop offset="0.361" stop-color="#4cffe7"/><stop offset="0.416" stop-color="#adffe4"/><stop offset="0.455" stop-color="#feffe3"/><stop offset="0.487" stop-color="#ffc5ae"/><stop offset="0.526" stop-color="#ff9582"/><stop offset="0.577" stop-color="#ff6b5c"/><stop offset="0.652" stop-color="#ff4539"/><stop offset="0.765" stop-color="#ff221a"/><stop offset="0.942" stop-color="#ff0500"/><stop offset="1" stop-color="#f00"/></linearGradient><linearGradient id="c216" gradientUnits="userSpaceOnUse" x1="42" x2="353"><stop offset="0" stop-color="#00fff1"/><stop offset="0.309" stop-color="#00ffec"/><stop offset="0.37" stop-color="#5effeb"/><stop offset="0.424" stop-color="#c4ffe9"/><stop offset="0.45" stop-color="#fbffe8"/><stop offset="0.457" stop-color="#fff5de"/><stop offset="0.486" stop-color="#ffc1af"/><stop offset="0.524" stop-color="#ff9283"/><stop offset="0.579" stop-color="#ff675b"/><stop offset="0.656" stop-color="#ff4137"/><stop offset="0.772" stop-color="#ff1f18"/><stop offset="0.945" stop-color="#ff0400"/><stop offset="1" stop-color="#f00"/></linearGradient><linearGradient id="c217" gradientUnits="userSpaceOnUse" x1="42" x2="354"><stop offset="0" stop-color="#00fff4"/><stop offset="0.308" stop-color="#01fff0"/><stop offset="0.369" stop-color="#61ffef"/><stop offset="0.423" stop-color="#c8ffee"/><stop offset="0.449" stop-color="#fffeec"/><stop offset="0.474" stop-color="#ffccbd"/><stop offset="0.51" stop-color="#ff9d91"/><stop offset="0.558" stop-color="#ff7268"/><stop offset="0.628" stop-color="#ff4a42"/><stop offset="0.731" stop-color="#ff2722"/><stop offset="0.894" stop-color="#ff0905"/><stop offset="0.981" stop-color="#f00"/><stop offset="1" stop-color="#f00"/></linearGradient><linearGradient id="c218" gradientUnits="userSpaceOnUse" x1="42" x2="355"><stop offset="0" stop-color="#00fff7"/><stop offset="0.304" stop-color="#00fff4"/><stop offset="0.351" stop-color="#48fff4"/><stop offset="0.406" stop-color="#abfff3"/><stop offset="0.444" stop-color="#fefff2"/><stop offset="0.473" stop-color="#ffc9be"/><stop offset="0.508" stop-color="#ff9a91"/><stop offset="0.556" stop-color="#ff6f69"/><stop offset="0.626" stop-color="#ff4843"/><stop offset="0.732" stop-color="#ff2521"/><stop offset="0.898" stop-color="#ff0705"/><stop offset="0.984" stop-color="#f00"/><stop offset="1" stop-color="#f00"/></linearGradient><linearGradient id="c219" gradientUnits="userSpaceOnUse" x1="42" x2="356"><stop offset="0" stop-color="#00fffa"/><stop offset="0.303" stop-color="#00fff9"/><stop offset="0.36" stop-color="#5bfff8"/><stop offset="0.414" stop-color="#c3fff8"/><stop offset="0.439" stop-color="#fbfff8"/><stop offset="0.449" stop-color="#ffede6"/><stop offset="0.478" stop-color="#ffbbb5"/><stop offset="0.516" stop-color="#ff8d89"/><stop offset="0.57" stop-color="#ff635f"/><stop offset="0.646" stop-color="#ff3d3b"/><stop offset="0.764" stop-color="#ff1c1a"/><stop offset="0.946" stop-color="#ff0100"/><stop offset="1" stop-color="#f00"/></linearGradient><linearGradient id="c220" gradientUnits="userSpaceOnUse" x1="43" x2="357"><stop offset="0" stop-color="#00fffd"/><stop offset="0.299" stop-color="#01fffd"/><stop offset="0.36" stop-color="#63fffd"/><stop offset="0.411" stop-color="#c7fffd"/><stop offset="0.436" stop-color="#fffefc"/><stop offset="0.462" stop-color="#ffcbca"/><stop offset="0.497" stop-color="#ff9b9a"/><stop offset="0.545" stop-color="#ff706f"/><stop offset="0.611" stop-color="#ff4948"/><stop offset="0.713" stop-color="#ff2626"/><stop offset="0.876" stop-color="#ff0808"/><stop offset="0.971" stop-color="#f00"/><stop offset="1" stop-color="#f00"/></linearGradient><linearGradient id="c221" gradientUnits="userSpaceOnUse" x1="43" x2="359"><stop offset="0" stop-color="#00feff"/><stop offset="0.294" stop-color="#00fdff"/><stop offset="0.335" stop-color="#3efcff"/><stop offset="0.389" stop-color="#a1fcff"/><stop offset="0.43" stop-color="#fbfcff"/><stop offset="0.437" stop-color="#fff1f5"/><stop offset="0.465" stop-color="#ffbdc0"/><stop offset="0.503" stop-color="#ff8e90"/><stop offset="0.554" stop-color="#ff6567"/><stop offset="0.627" stop-color="#ff3f41"/><stop offset="0.737" stop-color="#ff1e20"/><stop offset="0.918" stop-color="#ff0103"/><stop offset="1" stop-color="#f00"/></linearGradient><linearGradient id="c222" gradientUnits="userSpaceOnUse" x1="43" x2="360"><stop offset="0" stop-color="#00fbff"/><stop offset="0.293" stop-color="#00f8ff"/><stop offset="0.35" stop-color="#5af8ff"/><stop offset="0.404" stop-color="#c2f7ff"/><stop offset="0.432" stop-color="#fff4fc"/><stop offset="0.457" stop-color="#ffc3cb"/><stop offset="0.492" stop-color="#ff959b"/><stop offset="0.539" stop-color="#ff6b70"/><stop offset="0.609" stop-color="#ff4449"/><stop offset="0.713" stop-color="#ff2226"/><stop offset="0.877" stop-color="#ff0508"/><stop offset="0.962" stop-color="#f00"/><stop offset="1" stop-color="#f00"/></linearGradient><linearGradient id="c223" gradientUnits="userSpaceOnUse" x1="43" x2="361"><stop offset="0" stop-color="#00f8ff"/><stop offset="0.292" stop-color="#01f4ff"/><stop offset="0.352" stop-color="#61f3ff"/><stop offset="0.406" stop-color="#c9f1ff"/><stop offset="0.431" stop-color="#ffeffd"/><stop offset="0.456" stop-color="#ffbfcc"/><stop offset="0.491" stop-color="#ff929c"/><stop offset="0.538" stop-color="#ff6971"/><stop offset="0.607" stop-color="#ff4349"/><stop offset="0.711" stop-color="#ff2126"/><stop offset="0.874" stop-color="#ff0408"/><stop offset="0.959" stop-color="#f00"/><stop offset="1" stop-color="#f00"/></linearGradient><linearGradient id="c224" gradientUnits="userSpaceOnUse" x1="43" x2="362"><stop offset="0" stop-color="#00f5ff"/><stop offset="0.292" stop-color="#02f0ff"/><stop offset="0.351" stop-color="#62eeff"/><stop offset="0.404" stop-color="#c9ecff"/><stop offset="0.429" stop-color="#ffeafd"/><stop offset="0.458" stop-color="#ffb7c7"/><stop offset="0.495" stop-color="#ff8996"/><stop offset="0.545" stop-color="#ff606b"/><stop offset="0.618" stop-color="#ff3c45"/><stop offset="0.727" stop-color="#ff1c22"/><stop offset="0.903" stop-color="#ff0005"/><stop offset="0.991" stop-color="#f00"/><stop offset="1" stop-color="#f00"/></linearGradient><linearGradient id="c225" gradientUnits="userSpaceOnUse" x1="44" x2="363"><stop offset="0" stop-color="#00f2ff"/><stop offset="0.285" stop-color="#00ecff"/><stop offset="0.342" stop-color="#58eaff"/><stop offset="0.395" stop-color="#bce8ff"/><stop offset="0.426" stop-color="#ffe5fe"/><stop offset="0.455" stop-color="#ffb3c8"/><stop offset="0.492" stop-color="#ff8697"/><stop offset="0.542" stop-color="#ff5e6c"/><stop offset="0.614" stop-color="#ff3a45"/><stop offset="0.724" stop-color="#ff1b23"/><stop offset="0.897" stop-color="#ff0006"/><stop offset="0.987" stop-color="#f00"/><stop offset="1" stop-color="#f00"/></linearGradient><linearGradient id="c226" gradientUnits="userSpaceOnUse" x1="44" x2="365"><stop offset="0" stop-color="#00f0ff"/><stop offset="0.283" stop-color="#00e8ff"/><stop offset="0.346" stop-color="#63e5ff"/><stop offset="0.399" stop-color="#c9e3ff"/><stop offset="0.424" stop-color="#ffe0fe"/><stop offset="0.452" stop-color="#ffb0c8"/><stop offset="0.489" stop-color="#ff8398"/><stop offset="0.539" stop-color="#ff5c6d"/><stop offset="0.611" stop-color="#ff3946"/><stop offset="0.72" stop-color="#ff1923"/><stop offset="0.885" stop-color="#ff0007"/><stop offset="0.981" stop-color="#f00"/><stop offset="1" stop-color="#f00"/></linearGradient><linearGradient id="c227" gradientUnits="userSpaceOnUse" x1="44" x2="366"><stop offset="0" stop-color="#00edff"/><stop offset="0.283" stop-color="#02e4ff"/><stop offset="0.345" stop-color="#64e1ff"/><stop offset="0.398" stop-color="#c9deff"/><stop offset="0.422" stop-color="#ffdcfe"/><stop offset="0.45" stop-color="#ffacc9"/><stop offset="0.488" stop-color="#ff8098"/><stop offset="0.537" stop-color="#ff5a6d"/><stop offset="0.609" stop-color="#ff3747"/><stop offset="0.717" stop-color="#ff1824"/><stop offset="0.879" stop-color="#ff0008"/><stop offset="0.978" stop-color="#f00"/><stop offset="1" stop-color="#f00"/></linearGradient><linearGradient id="c228" gradientUnits="userSpaceOnUse" x1="44" x2="367"><stop offset="0" stop-color="#00eaff"/><stop offset="0.279" stop-color="#00e0ff"/><stop offset="0.331" stop-color="#50ddff"/><stop offset="0.387" stop-color="#b6daff"/><stop offset="0.421" stop-color="#ffd7ff"/><stop offset="0.449" stop-color="#ffa8ca"/><stop offset="0.486" stop-color="#ff7e99"/><stop offset="0.536" stop-color="#ff586e"/><stop offset="0.607" stop-color="#ff3647"/><stop offset="0.715" stop-color="#ff1725"/><stop offset="0.873" stop-color="#ff0009"/><stop offset="0.978" stop-color="#f00"/><stop offset="1" stop-color="#f00"/></linearGradient><linearGradient id="c229" gradientUnits="userSpaceOnUse" x1="45" x2="368"><stop offset="0" stop-color="#00e7ff"/><stop offset="0.276" stop-color="#00dcff"/><stop offset="0.337" stop-color="#60d9ff"/><stop offset="0.393" stop-color="#c9d5ff"/><stop offset="0.418" stop-color="#ffd2ff"/><stop offset="0.446" stop-color="#ffa5ca"/><stop offset="0.483" stop-color="#ff7b9a"/><stop offset="0.533" stop-color="#ff566f"/><stop offset="0.604" stop-color="#ff3448"/><stop offset="0.712" stop-color="#ff1625"/><stop offset="0.864" stop-color="#ff000a"/><stop offset="0.978" stop-color="#f00"/><stop offset="1" stop-color="#f00"/></linearGradient><linearGradient id="c230" gradientUnits="userSpaceOnUse" x1="45" x2="369"><stop offset="0" stop-color="#00e4ff"/><stop offset="0.275" stop-color="#02d9ff"/><stop offset="0.336" stop-color="#61d4ff"/><stop offset="0.392" stop-color="#c9d0ff"/><stop offset="0.417" stop-color="#ffceff"/><stop offset="0.444" stop-color="#ffa1cb"/><stop offset="0.481" stop-color="#ff789a"/><stop offset="0.531" stop-color="#ff5470"/><stop offset="0.602" stop-color="#ff3349"/><stop offset="0.71" stop-color="#ff1526"/><stop offset="0.855" stop-color="#ff000b"/><stop offset="0.978" stop-color="#f00"/><stop offset="1" stop-color="#f00"/></linearGradient><linearGradient id="c231" gradientUnits="userSpaceOnUse" x1="45" x2="369"><stop offset="0" stop-color="#00e2ff"/><stop offset="0.272" stop-color="#00d5ff"/><stop offset="0.324" stop-color="#4dd1ff"/><stop offset="0.38" stop-color="#b1cdff"/><stop offset="0.417" stop-color="#fec9ff"/><stop offset="0.448" stop-color="#ff9ac7"/><stop offset="0.485" stop-color="#ff7398"/><stop offset="0.537" stop-color="#ff4e6c"/><stop offset="0.611" stop-color="#ff2e46"/><stop offset="0.722" stop-color="#ff1224"/><stop offset="0.855" stop-color="#ff000c"/><stop offset="0.981" stop-color="#f00"/><stop offset="1" stop-color="#f00"/></linearGradient><linearGradient id="c232" gradientUnits="userSpaceOnUse" x1="46" x2="371"><stop offset="0" stop-color="#00dfff"/><stop offset="0.268" stop-color="#00d1ff"/><stop offset="0.332" stop-color="#63ccff"/><stop offset="0.388" stop-color="#c9c7ff"/><stop offset="0.412" stop-color="#fec4ff"/><stop offset="0.443" stop-color="#ff97c7"/><stop offset="0.48" stop-color="#ff7099"/><stop offset="0.532" stop-color="#ff4d6d"/><stop offset="0.606" stop-color="#ff2d46"/><stop offset="0.717" stop-color="#ff1124"/><stop offset="0.843" stop-color="#ff000d"/><stop offset="0.978" stop-color="#f00"/><stop offset="1" stop-color="#f00"/></linearGradient><linearGradient id="c233" gradientUnits="userSpaceOnUse" x1="46" x2="372"><stop offset="0" stop-color="#00dcff"/><stop offset="0.267" stop-color="#01ceff"/><stop offset="0.331" stop-color="#64c8ff"/><stop offset="0.387" stop-color="#cac3ff"/><stop offset="0.411" stop-color="#fdc0ff"/><stop offset="0.445" stop-color="#ff90c3"/><stop offset="0.485" stop-color="#ff6993"/><stop offset="0.54" stop-color="#ff4668"/><stop offset="0.62" stop-color="#ff2741"/><stop offset="0.739" stop-color="#ff0b1f"/><stop offset="0.837" stop-color="#ff000e"/><stop offset="0.979" stop-color="#f00"/><stop offset="1" stop-color="#f00"/></linearGradient><linearGradient id="c234" gradientUnits="userSpaceOnUse" x1="46" x2="373"><stop offset="0" stop-color="#00d9ff"/><stop offset="0.263" stop-color="#00caff"/><stop offset="0.315" stop-color="#4bc6ff"/><stop offset="0.373" stop-color="#b1c0ff"/><stop offset="0.41" stop-color="#fdbbff"/><stop offset="0.443" stop-color="#ff8cc4"/><stop offset="0.483" stop-color="#ff6694"/><stop offset="0.538" stop-color="#ff4468"/><stop offset="0.618" stop-color="#ff2542"/><stop offset="0.737" stop-color="#ff0a20"/><stop offset="0.829" stop-color="#ff0010"/><stop offset="0.979" stop-color="#f00"/><stop offset="1" stop-color="#f00"/></linearGradient><linearGradient id="c235" gradientUnits="userSpaceOnUse" x1="47" x2="375"><stop offset="0" stop-color="#00d7ff"/><stop offset="0.259" stop-color="#00c7ff"/><stop offset="0.323" stop-color="#60c1ff"/><stop offset="0.378" stop-color="#c4bbff"/><stop offset="0.405" stop-color="#fdb7ff"/><stop offset="0.439" stop-color="#ff89c4"/><stop offset="0.479" stop-color="#ff6495"/><stop offset="0.534" stop-color="#ff4269"/><stop offset="0.613" stop-color="#ff2442"/><stop offset="0.732" stop-color="#ff0a20"/><stop offset="0.82" stop-color="#ff0010"/><stop offset="0.979" stop-color="#f00"/><stop offset="1" stop-color="#f00"/></linearGradient><linearGradient id="c236" gradientUnits="userSpaceOnUse" x1="47" x2="375"><stop offset="0" stop-color="#00d4ff"/><stop offset="0.259" stop-color="#01c3ff"/><stop offset="0.323" stop-color="#61bdff"/><stop offset="0.378" stop-color="#c4b7ff"/><stop offset="0.405" stop-color="#fcb3ff"/><stop offset="0.442" stop-color="#ff83c1"/><stop offset="0.482" stop-color="#ff5f92"/><stop offset="0.537" stop-color="#ff3f68"/><stop offset="0.616" stop-color="#ff2242"/><stop offset="0.738" stop-color="#ff0820"/><stop offset="0.817" stop-color="#f01"/><stop offset="0.982" stop-color="#f00"/><stop offset="1" stop-color="#f00"/></linearGradient><linearGradient id="c237" gradientUnits="userSpaceOnUse" x1="47" x2="377"><stop offset="0" stop-color="#00d1ff"/><stop offset="0.258" stop-color="#02c0ff"/><stop offset="0.321" stop-color="#62b9ff"/><stop offset="0.379" stop-color="#cab2ff"/><stop offset="0.403" stop-color="#fcafff"/><stop offset="0.427" stop-color="#ff8ed4"/><stop offset="0.464" stop-color="#ff69a3"/><stop offset="0.512" stop-color="#ff4877"/><stop offset="0.582" stop-color="#ff2a4f"/><stop offset="0.685" stop-color="#ff0f2c"/><stop offset="0.797" stop-color="#ff0014"/><stop offset="0.976" stop-color="#f00"/><stop offset="1" stop-color="#f00"/></linearGradient><linearGradient id="c238" gradientUnits="userSpaceOnUse" x1="47" x2="378"><stop offset="0" stop-color="#00cfff"/><stop offset="0.254" stop-color="#00bdff"/><stop offset="0.314" stop-color="#58b6ff"/><stop offset="0.372" stop-color="#beafff"/><stop offset="0.402" stop-color="#fcaaff"/><stop offset="0.414" stop-color="#ff9aea"/><stop offset="0.447" stop-color="#ff74b6"/><stop offset="0.489" stop-color="#ff5389"/><stop offset="0.55" stop-color="#ff345f"/><stop offset="0.637" stop-color="#ff1839"/><stop offset="0.773" stop-color="#ff0019"/><stop offset="0.967" stop-color="#f00"/><stop offset="1" stop-color="#f00"/></linearGradient><linearGradient id="c239" gradientUnits="userSpaceOnUse" x1="48" x2="379"><stop offset="0" stop-color="#0cf"/><stop offset="0.251" stop-color="#01b9ff"/><stop offset="0.317" stop-color="#63b2ff"/><stop offset="0.375" stop-color="#caaaff"/><stop offset="0.399" stop-color="#fca6ff"/><stop offset="0.408" stop-color="#ff9bf0"/><stop offset="0.438" stop-color="#ff77be"/><stop offset="0.48" stop-color="#ff548f"/><stop offset="0.538" stop-color="#ff3665"/><stop offset="0.622" stop-color="#ff1a3e"/><stop offset="0.749" stop-color="#ff021d"/><stop offset="0.958" stop-color="#f00"/><stop offset="1" stop-color="#f00"/></linearGradient><linearGradient id="c240" gradientUnits="userSpaceOnUse" x1="48" x2="380"><stop offset="0" stop-color="#00caff"/><stop offset="0.25" stop-color="#02b6ff"/><stop offset="0.316" stop-color="#64aeff"/><stop offset="0.373" stop-color="#caa6ff"/><stop offset="0.401" stop-color="#ffa0fc"/><stop offset="0.431" stop-color="#ff7ac7"/><stop offset="0.47" stop-color="#ff5898"/><stop offset="0.524" stop-color="#ff396d"/><stop offset="0.602" stop-color="#ff1d45"/><stop offset="0.72" stop-color="#ff0523"/><stop offset="0.789" stop-color="#ff0016"/><stop offset="0.976" stop-color="#f00"/><stop offset="1" stop-color="#f00"/></linearGradient><linearGradient id="c241" gradientUnits="userSpaceOnUse" x1="48" x2="381"><stop offset="0" stop-color="#00c7ff"/><stop offset="0.246" stop-color="#00b3ff"/><stop offset="0.306" stop-color="#56acff"/><stop offset="0.366" stop-color="#bea3ff"/><stop offset="0.399" stop-color="#ff9cfd"/><stop offset="0.429" stop-color="#ff77c8"/><stop offset="0.468" stop-color="#ff5699"/><stop offset="0.523" stop-color="#ff386d"/><stop offset="0.601" stop-color="#ff1c46"/><stop offset="0.718" stop-color="#ff0424"/><stop offset="0.79" stop-color="#ff0016"/><stop offset="0.979" stop-color="#f00"/><stop offset="1" stop-color="#f00"/></linearGradient><linearGradient id="c242" gradientUnits="userSpaceOnUse" x1="48" x2="382"><stop offset="0" stop-color="#00c4ff"/><stop offset="0.246" stop-color="#00b0ff"/><stop offset="0.311" stop-color="#60a7ff"/><stop offset="0.368" stop-color="#c49fff"/><stop offset="0.398" stop-color="#ff99fd"/><stop offset="0.428" stop-color="#ff74c8"/><stop offset="0.467" stop-color="#ff5499"/><stop offset="0.521" stop-color="#ff366e"/><stop offset="0.599" stop-color="#ff1b47"/><stop offset="0.716" stop-color="#ff0324"/><stop offset="0.826" stop-color="#ff0010"/><stop offset="0.988" stop-color="#f00"/><stop offset="1" stop-color="#f00"/></linearGradient><linearGradient id="c243" gradientUnits="userSpaceOnUse" x1="49" x2="384"><stop offset="0" stop-color="#00c2ff"/><stop offset="0.242" stop-color="#02adff"/><stop offset="0.307" stop-color="#61a4ff"/><stop offset="0.364" stop-color="#c49bff"/><stop offset="0.394" stop-color="#ff95fd"/><stop offset="0.424" stop-color="#ff71c9"/><stop offset="0.463" stop-color="#ff529a"/><stop offset="0.516" stop-color="#ff346f"/><stop offset="0.594" stop-color="#ff1a47"/><stop offset="0.71" stop-color="#ff0225"/><stop offset="0.896" stop-color="#ff0007"/><stop offset="1" stop-color="#f00"/></linearGradient><linearGradient id="c244" gradientUnits="userSpaceOnUse" x1="49" x2="385"><stop offset="0" stop-color="#00bfff"/><stop offset="0.238" stop-color="#0af"/><stop offset="0.298" stop-color="#54a2ff"/><stop offset="0.357" stop-color="#b999ff"/><stop offset="0.393" stop-color="#ff91fe"/><stop offset="0.423" stop-color="#ff6fca"/><stop offset="0.461" stop-color="#ff4f9b"/><stop offset="0.515" stop-color="#ff336f"/><stop offset="0.592" stop-color="#ff1848"/><stop offset="0.708" stop-color="#ff0125"/><stop offset="0.893" stop-color="#ff0008"/><stop offset="1" stop-color="#f00"/></linearGradient><linearGradient id="c245" gradientUnits="userSpaceOnUse" x1="49" x2="386"><stop offset="0" stop-color="#00bdff"/><stop offset="0.237" stop-color="#00a7ff"/><stop offset="0.306" stop-color="#639dff"/><stop offset="0.365" stop-color="#ca93ff"/><stop offset="0.392" stop-color="#ff8efe"/><stop offset="0.421" stop-color="#ff6cca"/><stop offset="0.46" stop-color="#ff4d9b"/><stop offset="0.513" stop-color="#ff3170"/><stop offset="0.591" stop-color="#ff1749"/><stop offset="0.706" stop-color="#ff0026"/><stop offset="0.89" stop-color="#ff0008"/><stop offset="1" stop-color="#f00"/></linearGradient><linearGradient id="c246" gradientUnits="userSpaceOnUse" x1="49" x2="387"><stop offset="0" stop-color="#00baff"/><stop offset="0.237" stop-color="#01a4ff"/><stop offset="0.305" stop-color="#639aff"/><stop offset="0.364" stop-color="#ca90ff"/><stop offset="0.391" stop-color="#ff8afe"/><stop offset="0.42" stop-color="#ff69cb"/><stop offset="0.459" stop-color="#ff4b9c"/><stop offset="0.512" stop-color="#ff2f71"/><stop offset="0.589" stop-color="#ff1649"/><stop offset="0.704" stop-color="#ff0026"/><stop offset="0.888" stop-color="#ff0008"/><stop offset="1" stop-color="#f00"/></linearGradient><linearGradient id="c247" gradientUnits="userSpaceOnUse" x1="49" x2="388"><stop offset="0" stop-color="#00b8ff"/><stop offset="0.233" stop-color="#00a1ff"/><stop offset="0.292" stop-color="#5298ff"/><stop offset="0.354" stop-color="#ba8eff"/><stop offset="0.389" stop-color="#ff87ff"/><stop offset="0.419" stop-color="#ff66cb"/><stop offset="0.46" stop-color="#ff479a"/><stop offset="0.516" stop-color="#ff2b6e"/><stop offset="0.596" stop-color="#ff1246"/><stop offset="0.705" stop-color="#ff0026"/><stop offset="0.888" stop-color="#ff0008"/><stop offset="1" stop-color="#f00"/></linearGradient><linearGradient id="c248" gradientUnits="userSpaceOnUse" x1="50" x2="388"><stop offset="0" stop-color="#00b5ff"/><stop offset="0.231" stop-color="#009eff"/><stop offset="0.299" stop-color="#6094ff"/><stop offset="0.358" stop-color="#c589ff"/><stop offset="0.388" stop-color="#ff83ff"/><stop offset="0.417" stop-color="#ff63cc"/><stop offset="0.459" stop-color="#ff459a"/><stop offset="0.515" stop-color="#ff2a6e"/><stop offset="0.595" stop-color="#ff1147"/><stop offset="0.698" stop-color="#ff0028"/><stop offset="0.879" stop-color="#ff000a"/><stop offset="1" stop-color="#f00"/></linearGradient><linearGradient id="c249" gradientUnits="userSpaceOnUse" x1="50" x2="388"><stop offset="0" stop-color="#00b3ff"/><stop offset="0.231" stop-color="#019bff"/><stop offset="0.299" stop-color="#6191ff"/><stop offset="0.358" stop-color="#c586ff"/><stop offset="0.388" stop-color="#ff80ff"/><stop offset="0.42" stop-color="#ff5ec8"/><stop offset="0.462" stop-color="#ff4198"/><stop offset="0.518" stop-color="#ff276d"/><stop offset="0.598" stop-color="#ff0f46"/><stop offset="0.695" stop-color="#ff0029"/><stop offset="0.873" stop-color="#ff000b"/><stop offset="1" stop-color="#f00"/></linearGradient><linearGradient id="c250" gradientUnits="userSpaceOnUse" x1="50" x2="386"><stop offset="0" stop-color="#00b1ff"/><stop offset="0.232" stop-color="#0298ff"/><stop offset="0.304" stop-color="#668dff"/><stop offset="0.363" stop-color="#cb82ff"/><stop offset="0.39" stop-color="#fe7cff"/><stop offset="0.423" stop-color="#ff5cc9"/><stop offset="0.464" stop-color="#ff3f99"/><stop offset="0.521" stop-color="#ff256e"/><stop offset="0.604" stop-color="#ff0e46"/><stop offset="0.693" stop-color="#ff002b"/><stop offset="0.869" stop-color="#ff000d"/><stop offset="1" stop-color="#f00"/></linearGradient><linearGradient id="c251" gradientUnits="userSpaceOnUse" x1="50" x2="383"><stop offset="0" stop-color="#00aeff"/><stop offset="0.231" stop-color="#0095ff"/><stop offset="0.3" stop-color="#5e8bff"/><stop offset="0.363" stop-color="#c57fff"/><stop offset="0.393" stop-color="#fe79ff"/><stop offset="0.429" stop-color="#ff57c5"/><stop offset="0.471" stop-color="#ff3b97"/><stop offset="0.532" stop-color="#ff226b"/><stop offset="0.616" stop-color="#ff0b44"/><stop offset="0.694" stop-color="#ff002d"/><stop offset="0.868" stop-color="#ff000e"/><stop offset="1" stop-color="#f00"/></linearGradient><linearGradient id="c252" gradientUnits="userSpaceOnUse" x1="51" x2="381"><stop offset="0" stop-color="#00acff"/><stop offset="0.23" stop-color="#0193ff"/><stop offset="0.303" stop-color="#6387ff"/><stop offset="0.367" stop-color="#cb7bff"/><stop offset="0.394" stop-color="#fe75ff"/><stop offset="0.43" stop-color="#ff54c6"/><stop offset="0.473" stop-color="#ff3997"/><stop offset="0.533" stop-color="#ff206b"/><stop offset="0.621" stop-color="#ff0944"/><stop offset="0.694" stop-color="#ff002f"/><stop offset="0.867" stop-color="#ff000f"/><stop offset="1" stop-color="#ff0001"/></linearGradient><linearGradient id="c253" gradientUnits="userSpaceOnUse" x1="51" x2="378"><stop offset="0" stop-color="#0af"/><stop offset="0.232" stop-color="#0290ff"/><stop offset="0.306" stop-color="#6384ff"/><stop offset="0.37" stop-color="#cb78ff"/><stop offset="0.398" stop-color="#fd72ff"/><stop offset="0.434" stop-color="#ff51c6"/><stop offset="0.48" stop-color="#ff3695"/><stop offset="0.541" stop-color="#ff1e6a"/><stop offset="0.63" stop-color="#ff0843"/><stop offset="0.694" stop-color="#ff0031"/><stop offset="0.865" stop-color="#f01"/><stop offset="1" stop-color="#ff0002"/></linearGradient><linearGradient id="c254" gradientUnits="userSpaceOnUse" x1="51" x2="376"><stop offset="0" stop-color="#00a7ff"/><stop offset="0.231" stop-color="#008dff"/><stop offset="0.302" stop-color="#5b82ff"/><stop offset="0.366" stop-color="#c076ff"/><stop offset="0.4" stop-color="#fd6fff"/><stop offset="0.44" stop-color="#ff4dc3"/><stop offset="0.486" stop-color="#ff3293"/><stop offset="0.551" stop-color="#ff1a67"/><stop offset="0.643" stop-color="#ff0541"/><stop offset="0.705" stop-color="#ff0030"/><stop offset="0.88" stop-color="#ff0010"/><stop offset="1" stop-color="#ff0003"/></linearGradient><linearGradient id="c255" gradientUnits="userSpaceOnUse" x1="51" x2="373"><stop offset="0" stop-color="#00a5ff"/><stop offset="0.233" stop-color="#018bff"/><stop offset="0.307" stop-color="#607fff"/><stop offset="0.373" stop-color="#c572ff"/><stop offset="0.404" stop-color="#fd6bff"/><stop offset="0.444" stop-color="#ff4ac3"/><stop offset="0.491" stop-color="#ff3194"/><stop offset="0.556" stop-color="#ff1968"/><stop offset="0.649" stop-color="#ff0442"/><stop offset="0.717" stop-color="#ff002f"/><stop offset="0.898" stop-color="#ff0010"/><stop offset="1" stop-color="#ff0004"/></linearGradient><linearGradient id="c256" gradientUnits="userSpaceOnUse" x1="52" x2="371"><stop offset="0" stop-color="#00a2ff"/><stop offset="0.232" stop-color="#0288ff"/><stop offset="0.31" stop-color="#657bff"/><stop offset="0.376" stop-color="#cb6eff"/><stop offset="0.404" stop-color="#fc68ff"/><stop offset="0.448" stop-color="#ff46c0"/><stop offset="0.495" stop-color="#ff2d92"/><stop offset="0.561" stop-color="#ff1767"/><stop offset="0.655" stop-color="#ff0241"/><stop offset="0.799" stop-color="#ff001f"/><stop offset="1" stop-color="#ff0005"/></linearGradient><linearGradient id="c257" gradientUnits="userSpaceOnUse" x1="52" x2="369"><stop offset="0" stop-color="#00a0ff"/><stop offset="0.23" stop-color="#0086ff"/><stop offset="0.303" stop-color="#597aff"/><stop offset="0.372" stop-color="#c06dff"/><stop offset="0.407" stop-color="#fc65ff"/><stop offset="0.435" stop-color="#ff4ed5"/><stop offset="0.479" stop-color="#ff34a3"/><stop offset="0.539" stop-color="#ff1d76"/><stop offset="0.625" stop-color="#ff074d"/><stop offset="0.688" stop-color="#ff0039"/><stop offset="0.849" stop-color="#ff0019"/><stop offset="1" stop-color="#ff0006"/></linearGradient><linearGradient id="c258" gradientUnits="userSpaceOnUse" x1="53" x2="366"><stop offset="0" stop-color="#009eff"/><stop offset="0.23" stop-color="#0083ff"/><stop offset="0.31" stop-color="#6276ff"/><stop offset="0.38" stop-color="#cb68ff"/><stop offset="0.412" stop-color="#ff60fc"/><stop offset="0.447" stop-color="#ff45c9"/><stop offset="0.495" stop-color="#ff2c98"/><stop offset="0.559" stop-color="#ff166d"/><stop offset="0.652" stop-color="#ff0246"/><stop offset="0.792" stop-color="#ff0024"/><stop offset="1" stop-color="#ff0008"/></linearGradient><linearGradient id="c259" gradientUnits="userSpaceOnUse" x1="53" x2="364"><stop offset="0" stop-color="#009cff"/><stop offset="0.232" stop-color="#0180ff"/><stop offset="0.312" stop-color="#6373ff"/><stop offset="0.383" stop-color="#cb65ff"/><stop offset="0.415" stop-color="#ff5dfd"/><stop offset="0.45" stop-color="#ff43c9"/><stop offset="0.498" stop-color="#ff2a99"/><stop offset="0.566" stop-color="#ff146c"/><stop offset="0.662" stop-color="#ff0045"/><stop offset="0.807" stop-color="#f02"/><stop offset="1" stop-color="#ff0009"/></linearGradient><linearGradient id="c260" gradientUnits="userSpaceOnUse" x1="53" x2="361"><stop offset="0" stop-color="#09f"/><stop offset="0.231" stop-color="#007eff"/><stop offset="0.305" stop-color="#5772ff"/><stop offset="0.377" stop-color="#bc64ff"/><stop offset="0.419" stop-color="#ff5afd"/><stop offset="0.455" stop-color="#ff41ca"/><stop offset="0.503" stop-color="#ff2999"/><stop offset="0.571" stop-color="#ff136d"/><stop offset="0.669" stop-color="#ff0045"/><stop offset="0.815" stop-color="#ff0023"/><stop offset="1" stop-color="#ff000a"/></linearGradient><linearGradient id="c261" gradientUnits="userSpaceOnUse" x1="54" x2="359"><stop offset="0" stop-color="#0097ff"/><stop offset="0.23" stop-color="#007cff"/><stop offset="0.311" stop-color="#606eff"/><stop offset="0.384" stop-color="#c660ff"/><stop offset="0.42" stop-color="#ff57fd"/><stop offset="0.456" stop-color="#ff3eca"/><stop offset="0.505" stop-color="#ff279a"/><stop offset="0.574" stop-color="#ff116d"/><stop offset="0.672" stop-color="#ff0046"/><stop offset="0.82" stop-color="#ff0023"/><stop offset="1" stop-color="#ff000b"/></linearGradient><linearGradient id="c262" gradientUnits="userSpaceOnUse" x1="54" x2="356"><stop offset="0" stop-color="#0095ff"/><stop offset="0.232" stop-color="#0179ff"/><stop offset="0.318" stop-color="#656bff"/><stop offset="0.391" stop-color="#cb5cff"/><stop offset="0.424" stop-color="#ff54fe"/><stop offset="0.46" stop-color="#ff3ccb"/><stop offset="0.51" stop-color="#ff259a"/><stop offset="0.579" stop-color="#ff106e"/><stop offset="0.672" stop-color="#ff0049"/><stop offset="0.818" stop-color="#ff0026"/><stop offset="1" stop-color="#ff000d"/></linearGradient><linearGradient id="c263" gradientUnits="userSpaceOnUse" x1="54" x2="354"><stop offset="0" stop-color="#0093ff"/><stop offset="0.233" stop-color="#0277ff"/><stop offset="0.32" stop-color="#6568ff"/><stop offset="0.393" stop-color="#cb59ff"/><stop offset="0.427" stop-color="#ff51fe"/><stop offset="0.463" stop-color="#ff3acb"/><stop offset="0.513" stop-color="#ff239b"/><stop offset="0.583" stop-color="#ff0f6f"/><stop offset="0.67" stop-color="#ff004b"/><stop offset="0.813" stop-color="#ff0028"/><stop offset="1" stop-color="#ff000e"/></linearGradient><linearGradient id="c264" gradientUnits="userSpaceOnUse" x1="55" x2="352"><stop offset="0" stop-color="#0090ff"/><stop offset="0.229" stop-color="#0075ff"/><stop offset="0.316" stop-color="#6266ff"/><stop offset="0.391" stop-color="#c657ff"/><stop offset="0.428" stop-color="#ff4ffe"/><stop offset="0.465" stop-color="#ff37cc"/><stop offset="0.515" stop-color="#ff219c"/><stop offset="0.586" stop-color="#ff0d6f"/><stop offset="0.667" stop-color="#ff004e"/><stop offset="0.808" stop-color="#ff002a"/><stop offset="1" stop-color="#ff000f"/></linearGradient><linearGradient id="c265" gradientUnits="userSpaceOnUse" x1="55" x2="349"><stop offset="0" stop-color="#008eff"/><stop offset="0.231" stop-color="#0172ff"/><stop offset="0.32" stop-color="#6363ff"/><stop offset="0.398" stop-color="#cb54ff"/><stop offset="0.432" stop-color="#ff4cff"/><stop offset="0.473" stop-color="#ff33c8"/><stop offset="0.527" stop-color="#ff1d97"/><stop offset="0.602" stop-color="#ff0a6b"/><stop offset="0.67" stop-color="#ff0050"/><stop offset="0.81" stop-color="#ff002c"/><stop offset="1" stop-color="#ff0010"/></linearGradient><linearGradient id="c266" gradientUnits="userSpaceOnUse" x1="55" x2="347"><stop offset="0" stop-color="#008cff"/><stop offset="0.233" stop-color="#0270ff"/><stop offset="0.322" stop-color="#6361ff"/><stop offset="0.401" stop-color="#cb51ff"/><stop offset="0.435" stop-color="#ff49ff"/><stop offset="0.476" stop-color="#ff31c9"/><stop offset="0.531" stop-color="#ff1c98"/><stop offset="0.606" stop-color="#ff086b"/><stop offset="0.668" stop-color="#ff0053"/><stop offset="0.805" stop-color="#ff002f"/><stop offset="1" stop-color="#f01"/></linearGradient><linearGradient id="c267" gradientUnits="userSpaceOnUse" x1="55" x2="344"><stop offset="0" stop-color="#008aff"/><stop offset="0.232" stop-color="#006eff"/><stop offset="0.322" stop-color="#605fff"/><stop offset="0.401" stop-color="#c64fff"/><stop offset="0.439" stop-color="#ff46ff"/><stop offset="0.481" stop-color="#ff2fc9"/><stop offset="0.536" stop-color="#ff1a98"/><stop offset="0.612" stop-color="#ff076c"/><stop offset="0.671" stop-color="#ff0054"/><stop offset="0.806" stop-color="#ff0030"/><stop offset="1" stop-color="#ff0013"/></linearGradient><linearGradient id="c268" gradientUnits="userSpaceOnUse" x1="56" x2="342"><stop offset="0" stop-color="#08f"/><stop offset="0.231" stop-color="#016bff"/><stop offset="0.325" stop-color="#645cff"/><stop offset="0.406" stop-color="#cb4cff"/><stop offset="0.441" stop-color="#ff43ff"/><stop offset="0.483" stop-color="#ff2dca"/><stop offset="0.538" stop-color="#ff1899"/><stop offset="0.615" stop-color="#ff066d"/><stop offset="0.671" stop-color="#ff0056"/><stop offset="0.808" stop-color="#ff0032"/><stop offset="1" stop-color="#ff0014"/></linearGradient><linearGradient id="c269" gradientUnits="userSpaceOnUse" x1="56" x2="340"><stop offset="0" stop-color="#0086ff"/><stop offset="0.232" stop-color="#0269ff"/><stop offset="0.327" stop-color="#6559ff"/><stop offset="0.408" stop-color="#cb49ff"/><stop offset="0.444" stop-color="#fe41ff"/><stop offset="0.489" stop-color="#ff29c6"/><stop offset="0.546" stop-color="#ff1697"/><stop offset="0.623" stop-color="#ff046c"/><stop offset="0.687" stop-color="#ff0053"/><stop offset="0.831" stop-color="#ff002f"/><stop offset="1" stop-color="#ff0015"/></linearGradient><linearGradient id="c270" gradientUnits="userSpaceOnUse" x1="56" x2="337"><stop offset="0" stop-color="#0084ff"/><stop offset="0.231" stop-color="#0067ff"/><stop offset="0.324" stop-color="#5e58ff"/><stop offset="0.406" stop-color="#c248ff"/><stop offset="0.448" stop-color="#fe3eff"/><stop offset="0.495" stop-color="#ff27c7"/><stop offset="0.552" stop-color="#ff1497"/><stop offset="0.63" stop-color="#ff026c"/><stop offset="0.744" stop-color="#ff0045"/><stop offset="0.915" stop-color="#ff0023"/><stop offset="1" stop-color="#ff0017"/></linearGradient><linearGradient id="c271" gradientUnits="userSpaceOnUse" x1="56" x2="335"><stop offset="0" stop-color="#0082ff"/><stop offset="0.233" stop-color="#0165ff"/><stop offset="0.33" stop-color="#6255ff"/><stop offset="0.412" stop-color="#c744ff"/><stop offset="0.452" stop-color="#fe3bff"/><stop offset="0.498" stop-color="#ff25c7"/><stop offset="0.556" stop-color="#ff1298"/><stop offset="0.634" stop-color="#ff016d"/><stop offset="0.749" stop-color="#ff0045"/><stop offset="0.921" stop-color="#ff0023"/><stop offset="1" stop-color="#ff0018"/></linearGradient><linearGradient id="c272" gradientUnits="userSpaceOnUse" x1="57" x2="332"><stop offset="0" stop-color="#007fff"/><stop offset="0.233" stop-color="#0263ff"/><stop offset="0.331" stop-color="#6352ff"/><stop offset="0.418" stop-color="#cb41ff"/><stop offset="0.455" stop-color="#fe39ff"/><stop offset="0.505" stop-color="#ff22c4"/><stop offset="0.567" stop-color="#ff0f94"/><stop offset="0.651" stop-color="#ff0069"/><stop offset="0.771" stop-color="#ff0042"/><stop offset="0.953" stop-color="#ff0020"/><stop offset="1" stop-color="#ff001a"/></linearGradient><linearGradient id="c273" gradientUnits="userSpaceOnUse" x1="57" x2="330"><stop offset="0" stop-color="#007dff"/><stop offset="0.231" stop-color="#0061ff"/><stop offset="0.326" stop-color="#5c51ff"/><stop offset="0.414" stop-color="#c240ff"/><stop offset="0.458" stop-color="#fd36ff"/><stop offset="0.509" stop-color="#ff20c5"/><stop offset="0.571" stop-color="#ff0d94"/><stop offset="0.652" stop-color="#ff006b"/><stop offset="0.773" stop-color="#f04"/><stop offset="0.956" stop-color="#ff0021"/><stop offset="1" stop-color="#ff001b"/></linearGradient><linearGradient id="c274" gradientUnits="userSpaceOnUse" x1="57" x2="327"><stop offset="0" stop-color="#007bff"/><stop offset="0.233" stop-color="#005fff"/><stop offset="0.337" stop-color="#644eff"/><stop offset="0.426" stop-color="#cc3cff"/><stop offset="0.463" stop-color="#fd34ff"/><stop offset="0.519" stop-color="#ff1cc2"/><stop offset="0.581" stop-color="#ff0b92"/><stop offset="0.652" stop-color="#ff006e"/><stop offset="0.77" stop-color="#ff0047"/><stop offset="0.948" stop-color="#ff0024"/><stop offset="1" stop-color="#ff001d"/></linearGradient><linearGradient id="c275" gradientUnits="userSpaceOnUse" x1="57" x2="325"><stop offset="0" stop-color="#0079ff"/><stop offset="0.235" stop-color="#015cff"/><stop offset="0.34" stop-color="#654bff"/><stop offset="0.429" stop-color="#cc39ff"/><stop offset="0.466" stop-color="#fd31ff"/><stop offset="0.522" stop-color="#ff1ac2"/><stop offset="0.586" stop-color="#ff0993"/><stop offset="0.649" stop-color="#ff0072"/><stop offset="0.765" stop-color="#ff004a"/><stop offset="0.937" stop-color="#ff0028"/><stop offset="1" stop-color="#ff001f"/></linearGradient><linearGradient id="c276" gradientUnits="userSpaceOnUse" x1="58" x2="323"><stop offset="0" stop-color="#07f"/><stop offset="0.234" stop-color="#025aff"/><stop offset="0.34" stop-color="#6549ff"/><stop offset="0.43" stop-color="#cc37ff"/><stop offset="0.472" stop-color="#ff2dfc"/><stop offset="0.517" stop-color="#ff1bca"/><stop offset="0.577" stop-color="#ff0a9b"/><stop offset="0.645" stop-color="#ff0076"/><stop offset="0.758" stop-color="#ff004e"/><stop offset="0.928" stop-color="#ff002a"/><stop offset="1" stop-color="#ff0020"/></linearGradient><linearGradient id="c277" gradientUnits="userSpaceOnUse" x1="58" x2="320"><stop offset="0" stop-color="#0075ff"/><stop offset="0.233" stop-color="#0059ff"/><stop offset="0.34" stop-color="#6247ff"/><stop offset="0.431" stop-color="#c735ff"/><stop offset="0.477" stop-color="#ff2bfd"/><stop offset="0.527" stop-color="#ff18c7"/><stop offset="0.592" stop-color="#ff0796"/><stop offset="0.649" stop-color="#ff0078"/><stop offset="0.763" stop-color="#ff0050"/><stop offset="0.931" stop-color="#ff002c"/><stop offset="1" stop-color="#f02"/></linearGradient><linearGradient id="c278" gradientUnits="userSpaceOnUse" x1="58" x2="318"><stop offset="0" stop-color="#0073ff"/><stop offset="0.235" stop-color="#0157ff"/><stop offset="0.342" stop-color="#6245ff"/><stop offset="0.435" stop-color="#c733ff"/><stop offset="0.481" stop-color="#ff28fd"/><stop offset="0.531" stop-color="#ff16c7"/><stop offset="0.596" stop-color="#ff0697"/><stop offset="0.65" stop-color="#ff007b"/><stop offset="0.762" stop-color="#ff0052"/><stop offset="0.927" stop-color="#ff002e"/><stop offset="1" stop-color="#ff0023"/></linearGradient><linearGradient id="c279" gradientUnits="userSpaceOnUse" x1="59" x2="315"><stop offset="0" stop-color="#0071ff"/><stop offset="0.234" stop-color="#0254ff"/><stop offset="0.344" stop-color="#6343ff"/><stop offset="0.441" stop-color="#cc30ff"/><stop offset="0.484" stop-color="#ff26fd"/><stop offset="0.535" stop-color="#ff14c7"/><stop offset="0.602" stop-color="#ff0497"/><stop offset="0.66" stop-color="#ff0079"/><stop offset="0.777" stop-color="#ff0051"/><stop offset="0.949" stop-color="#ff002d"/><stop offset="1" stop-color="#ff0025"/></linearGradient><linearGradient id="c280" gradientUnits="userSpaceOnUse" x1="59" x2="313"><stop offset="0" stop-color="#006fff"/><stop offset="0.232" stop-color="#0053ff"/><stop offset="0.343" stop-color="#6041ff"/><stop offset="0.441" stop-color="#c72eff"/><stop offset="0.488" stop-color="#ff24fe"/><stop offset="0.539" stop-color="#ff12c8"/><stop offset="0.606" stop-color="#ff0398"/><stop offset="0.701" stop-color="#ff006b"/><stop offset="0.835" stop-color="#f04"/><stop offset="1" stop-color="#ff0027"/></linearGradient><linearGradient id="c281" gradientUnits="userSpaceOnUse" x1="59" x2="310"><stop offset="0" stop-color="#006dff"/><stop offset="0.235" stop-color="#0151ff"/><stop offset="0.351" stop-color="#643eff"/><stop offset="0.45" stop-color="#cc2bff"/><stop offset="0.494" stop-color="#ff21fe"/><stop offset="0.546" stop-color="#ff10c8"/><stop offset="0.614" stop-color="#ff0198"/><stop offset="0.709" stop-color="#ff006c"/><stop offset="0.845" stop-color="#ff0045"/><stop offset="1" stop-color="#ff0029"/></linearGradient><linearGradient id="c282" gradientUnits="userSpaceOnUse" x1="59" x2="308"><stop offset="0" stop-color="#006bff"/><stop offset="0.237" stop-color="#024fff"/><stop offset="0.353" stop-color="#653cff"/><stop offset="0.454" stop-color="#cc29ff"/><stop offset="0.498" stop-color="#ff1ffe"/><stop offset="0.55" stop-color="#ff0ec9"/><stop offset="0.618" stop-color="#f09"/><stop offset="0.715" stop-color="#ff006d"/><stop offset="0.851" stop-color="#ff0045"/><stop offset="1" stop-color="#ff002b"/></linearGradient><linearGradient id="c283" gradientUnits="userSpaceOnUse" x1="60" x2="306"><stop offset="0" stop-color="#0069ff"/><stop offset="0.232" stop-color="#004dff"/><stop offset="0.346" stop-color="#5e3bff"/><stop offset="0.447" stop-color="#c328ff"/><stop offset="0.5" stop-color="#ff1dfe"/><stop offset="0.553" stop-color="#ff0dc9"/><stop offset="0.622" stop-color="#f09"/><stop offset="0.72" stop-color="#ff006d"/><stop offset="0.858" stop-color="#ff0046"/><stop offset="1" stop-color="#ff002c"/></linearGradient><linearGradient id="c284" gradientUnits="userSpaceOnUse" x1="60" x2="303"><stop offset="0" stop-color="#0067ff"/><stop offset="0.235" stop-color="#014bff"/><stop offset="0.354" stop-color="#6239ff"/><stop offset="0.457" stop-color="#c725ff"/><stop offset="0.506" stop-color="#ff1aff"/><stop offset="0.56" stop-color="#ff0bca"/><stop offset="0.626" stop-color="#ff009c"/><stop offset="0.72" stop-color="#ff0071"/><stop offset="0.856" stop-color="#ff0049"/><stop offset="1" stop-color="#ff002f"/></linearGradient><linearGradient id="c285" gradientUnits="userSpaceOnUse" x1="61" x2="301"><stop offset="0" stop-color="#0065ff"/><stop offset="0.233" stop-color="#0249ff"/><stop offset="0.354" stop-color="#6336ff"/><stop offset="0.458" stop-color="#c723ff"/><stop offset="0.508" stop-color="#ff18ff"/><stop offset="0.562" stop-color="#ff09ca"/><stop offset="0.621" stop-color="#ff00a2"/><stop offset="0.717" stop-color="#ff0074"/><stop offset="0.85" stop-color="#ff004c"/><stop offset="1" stop-color="#ff0030"/></linearGradient><linearGradient id="c286" gradientUnits="userSpaceOnUse" x1="61" x2="298"><stop offset="0" stop-color="#0063ff"/><stop offset="0.232" stop-color="#0048ff"/><stop offset="0.35" stop-color="#5c36ff"/><stop offset="0.46" stop-color="#c322ff"/><stop offset="0.515" stop-color="#ff16ff"/><stop offset="0.57" stop-color="#ff07ca"/><stop offset="0.62" stop-color="#ff00a7"/><stop offset="0.713" stop-color="#ff007a"/><stop offset="0.844" stop-color="#ff0051"/><stop offset="1" stop-color="#f03"/></linearGradient><linearGradient id="c287" gradientUnits="userSpaceOnUse" x1="62" x2="296"><stop offset="0" stop-color="#0061ff"/><stop offset="0.231" stop-color="#0046ff"/><stop offset="0.359" stop-color="#6432ff"/><stop offset="0.47" stop-color="#cc1eff"/><stop offset="0.517" stop-color="#ff14ff"/><stop offset="0.577" stop-color="#ff04c8"/><stop offset="0.628" stop-color="#ff00a5"/><stop offset="0.722" stop-color="#ff0078"/><stop offset="0.855" stop-color="#ff0050"/><stop offset="1" stop-color="#ff0034"/></linearGradient><linearGradient id="c288" gradientUnits="userSpaceOnUse" x1="62" x2="293"><stop offset="0" stop-color="#005fff"/><stop offset="0.234" stop-color="#0144ff"/><stop offset="0.364" stop-color="#6430ff"/><stop offset="0.476" stop-color="#cc1cff"/><stop offset="0.524" stop-color="#fe12ff"/><stop offset="0.584" stop-color="#ff03c8"/><stop offset="0.662" stop-color="#ff0097"/><stop offset="0.771" stop-color="#ff006b"/><stop offset="0.926" stop-color="#f04"/><stop offset="1" stop-color="#ff0037"/></linearGradient><linearGradient id="c289" gradientUnits="userSpaceOnUse" x1="63" x2="291"><stop offset="0" stop-color="#005dff"/><stop offset="0.232" stop-color="#0242ff"/><stop offset="0.364" stop-color="#652eff"/><stop offset="0.478" stop-color="#cc19ff"/><stop offset="0.526" stop-color="#fe0fff"/><stop offset="0.592" stop-color="#ff00c5"/><stop offset="0.671" stop-color="#ff0096"/><stop offset="0.781" stop-color="#ff006a"/><stop offset="0.939" stop-color="#f04"/><stop offset="1" stop-color="#ff0039"/></linearGradient><linearGradient id="c290" gradientUnits="userSpaceOnUse" x1="63" x2="289"><stop offset="0" stop-color="#005bff"/><stop offset="0.23" stop-color="#0041ff"/><stop offset="0.363" stop-color="#622dff"/><stop offset="0.478" stop-color="#c818ff"/><stop offset="0.531" stop-color="#fe0dff"/><stop offset="0.597" stop-color="#ff00c6"/><stop offset="0.677" stop-color="#ff0096"/><stop offset="0.788" stop-color="#ff006b"/><stop offset="0.947" stop-color="#f04"/><stop offset="1" stop-color="#ff003b"/></linearGradient><linearGradient id="c291" gradientUnits="userSpaceOnUse" x1="63" x2="286"><stop offset="0" stop-color="#005aff"/><stop offset="0.233" stop-color="#013fff"/><stop offset="0.368" stop-color="#622bff"/><stop offset="0.484" stop-color="#c816ff"/><stop offset="0.538" stop-color="#fe0bff"/><stop offset="0.601" stop-color="#ff00c9"/><stop offset="0.682" stop-color="#f09"/><stop offset="0.794" stop-color="#ff006d"/><stop offset="0.955" stop-color="#ff0045"/><stop offset="1" stop-color="#ff003d"/></linearGradient><linearGradient id="c292" gradientUnits="userSpaceOnUse" x1="64" x2="284"><stop offset="0" stop-color="#0057ff"/><stop offset="0.232" stop-color="#023dff"/><stop offset="0.368" stop-color="#6329ff"/><stop offset="0.486" stop-color="#c814ff"/><stop offset="0.541" stop-color="#fd09ff"/><stop offset="0.595" stop-color="#ff00d0"/><stop offset="0.673" stop-color="#ff00a0"/><stop offset="0.782" stop-color="#ff0073"/><stop offset="0.936" stop-color="#ff004b"/><stop offset="1" stop-color="#ff003f"/></linearGradient><linearGradient id="c293" gradientUnits="userSpaceOnUse" x1="64" x2="281"><stop offset="0" stop-color="#0056ff"/><stop offset="0.23" stop-color="#003cff"/><stop offset="0.373" stop-color="#6327ff"/><stop offset="0.498" stop-color="#c1f"/><stop offset="0.548" stop-color="#fd07ff"/><stop offset="0.594" stop-color="#ff00d8"/><stop offset="0.673" stop-color="#ff00a5"/><stop offset="0.779" stop-color="#ff0078"/><stop offset="0.931" stop-color="#ff004f"/><stop offset="1" stop-color="#ff0042"/></linearGradient><linearGradient id="c294" gradientUnits="userSpaceOnUse" x1="64" x2="279"><stop offset="0" stop-color="#0054ff"/><stop offset="0.233" stop-color="#013aff"/><stop offset="0.377" stop-color="#6425ff"/><stop offset="0.502" stop-color="#cc0fff"/><stop offset="0.558" stop-color="#ff04fc"/><stop offset="0.609" stop-color="#ff00d1"/><stop offset="0.688" stop-color="#ff00a1"/><stop offset="0.8" stop-color="#ff0074"/><stop offset="0.958" stop-color="#ff004c"/><stop offset="1" stop-color="#f04"/></linearGradient><linearGradient id="c295" gradientUnits="userSpaceOnUse" x1="65" x2="276"><stop offset="0" stop-color="#0052ff"/><stop offset="0.232" stop-color="#0238ff"/><stop offset="0.379" stop-color="#6423ff"/><stop offset="0.507" stop-color="#cc0dff"/><stop offset="0.564" stop-color="#ff02fd"/><stop offset="0.63" stop-color="#ff00c8"/><stop offset="0.72" stop-color="#ff0097"/><stop offset="0.844" stop-color="#ff006b"/><stop offset="1" stop-color="#ff0047"/></linearGradient><linearGradient id="c296" gradientUnits="userSpaceOnUse" x1="65" x2="274"><stop offset="0" stop-color="#0050ff"/><stop offset="0.23" stop-color="#0037ff"/><stop offset="0.378" stop-color="#6122ff"/><stop offset="0.507" stop-color="#c80cff"/><stop offset="0.569" stop-color="#ff00fd"/><stop offset="0.636" stop-color="#ff00c8"/><stop offset="0.727" stop-color="#ff0097"/><stop offset="0.852" stop-color="#ff006b"/><stop offset="1" stop-color="#ff0049"/></linearGradient><linearGradient id="c297" gradientUnits="userSpaceOnUse" x1="65" x2="272"><stop offset="0" stop-color="#004eff"/><stop offset="0.232" stop-color="#0135ff"/><stop offset="0.382" stop-color="#6220ff"/><stop offset="0.512" stop-color="#c80aff"/><stop offset="0.575" stop-color="#ff00fd"/><stop offset="0.643" stop-color="#ff00c8"/><stop offset="0.734" stop-color="#ff0097"/><stop offset="0.86" stop-color="#ff006c"/><stop offset="1" stop-color="#ff004c"/></linearGradient><linearGradient id="c298" gradientUnits="userSpaceOnUse" x1="66" x2="269"><stop offset="0" stop-color="#004cff"/><stop offset="0.232" stop-color="#0233ff"/><stop offset="0.389" stop-color="#661dff"/><stop offset="0.522" stop-color="#cc07ff"/><stop offset="0.581" stop-color="#ff00fd"/><stop offset="0.65" stop-color="#ff00c9"/><stop offset="0.744" stop-color="#ff0098"/><stop offset="0.872" stop-color="#ff006c"/><stop offset="1" stop-color="#ff004f"/></linearGradient><linearGradient id="c299" gradientUnits="userSpaceOnUse" x1="66" x2="267"><stop offset="0" stop-color="#004bff"/><stop offset="0.229" stop-color="#0032ff"/><stop offset="0.383" stop-color="#601dff"/><stop offset="0.522" stop-color="#c806ff"/><stop offset="0.577" stop-color="#f700ff"/><stop offset="0.587" stop-color="#ff00fe"/><stop offset="0.657" stop-color="#ff00c9"/><stop offset="0.751" stop-color="#ff0098"/><stop offset="0.881" stop-color="#ff006d"/><stop offset="1" stop-color="#ff0051"/></linearGradient><linearGradient id="c300" gradientUnits="userSpaceOnUse" x1="67" x2="264"><stop offset="0" stop-color="#0049ff"/><stop offset="0.228" stop-color="#0130ff"/><stop offset="0.391" stop-color="#631aff"/><stop offset="0.533" stop-color="#cc03ff"/><stop offset="0.594" stop-color="#ff00fe"/><stop offset="0.665" stop-color="#ff00ca"/><stop offset="0.761" stop-color="#f09"/><stop offset="0.893" stop-color="#ff006d"/><stop offset="1" stop-color="#f05"/></linearGradient><linearGradient id="c301" gradientUnits="userSpaceOnUse" x1="67" x2="262"><stop offset="0" stop-color="#0047ff"/><stop offset="0.231" stop-color="#012eff"/><stop offset="0.395" stop-color="#6419ff"/><stop offset="0.538" stop-color="#cc02ff"/><stop offset="0.6" stop-color="#ff00fe"/><stop offset="0.672" stop-color="#ff00ca"/><stop offset="0.769" stop-color="#f09"/><stop offset="0.903" stop-color="#ff006e"/><stop offset="1" stop-color="#ff0057"/></linearGradient><linearGradient id="c302" gradientUnits="userSpaceOnUse" x1="67" x2="259"><stop offset="0" stop-color="#0045ff"/><stop offset="0.234" stop-color="#022dff"/><stop offset="0.401" stop-color="#6417ff"/><stop offset="0.547" stop-color="#c0f"/><stop offset="0.609" stop-color="#ff00fe"/><stop offset="0.682" stop-color="#ff00ca"/><stop offset="0.781" stop-color="#ff009a"/><stop offset="0.917" stop-color="#ff006e"/><stop offset="1" stop-color="#ff005b"/></linearGradient><linearGradient id="c303" gradientUnits="userSpaceOnUse" x1="68" x2="257"><stop offset="0" stop-color="#0043ff"/><stop offset="0.228" stop-color="#002cff"/><stop offset="0.397" stop-color="#6216ff"/><stop offset="0.545" stop-color="#c800ff"/><stop offset="0.614" stop-color="#f0f"/><stop offset="0.688" stop-color="#ff00cb"/><stop offset="0.788" stop-color="#ff009a"/><stop offset="0.926" stop-color="#ff006e"/><stop offset="1" stop-color="#ff005d"/></linearGradient><linearGradient id="c304" gradientUnits="userSpaceOnUse" x1="68" x2="255"><stop offset="0" stop-color="#0042ff"/><stop offset="0.23" stop-color="#012aff"/><stop offset="0.401" stop-color="#6214ff"/><stop offset="0.551" stop-color="#c800ff"/><stop offset="0.62" stop-color="#f0f"/><stop offset="0.695" stop-color="#ff00cb"/><stop offset="0.797" stop-color="#ff009b"/><stop offset="0.936" stop-color="#ff006f"/><stop offset="1" stop-color="#ff0060"/></linearGradient><linearGradient id="c305" gradientUnits="userSpaceOnUse" x1="69" x2="252"><stop offset="0" stop-color="#0040ff"/><stop offset="0.23" stop-color="#0228ff"/><stop offset="0.41" stop-color="#6612ff"/><stop offset="0.546" stop-color="#c100ff"/><stop offset="0.628" stop-color="#f0f"/><stop offset="0.71" stop-color="#ff00c8"/><stop offset="0.814" stop-color="#f09"/><stop offset="0.962" stop-color="#ff006d"/><stop offset="1" stop-color="#ff0064"/></linearGradient><linearGradient id="c306" gradientUnits="userSpaceOnUse" x1="69" x2="250"><stop offset="0" stop-color="#003eff"/><stop offset="0.227" stop-color="#0027ff"/><stop offset="0.409" stop-color="#6311ff"/><stop offset="0.541" stop-color="#b900ff"/><stop offset="0.635" stop-color="#f0f"/><stop offset="0.718" stop-color="#ff00c9"/><stop offset="0.829" stop-color="#ff0098"/><stop offset="0.978" stop-color="#ff006c"/><stop offset="1" stop-color="#ff0067"/></linearGradient><linearGradient id="c307" gradientUnits="userSpaceOnUse" x1="69" x2="247"><stop offset="0" stop-color="#003cff"/><stop offset="0.23" stop-color="#0126ff"/><stop offset="0.416" stop-color="#640fff"/><stop offset="0.539" stop-color="#b100ff"/><stop offset="0.646" stop-color="#fe00ff"/><stop offset="0.73" stop-color="#ff00c9"/><stop offset="0.843" stop-color="#ff0098"/><stop offset="0.994" stop-color="#ff006c"/><stop offset="1" stop-color="#ff006b"/></linearGradient><linearGradient id="c308" gradientUnits="userSpaceOnUse" x1="70" x2="245"><stop offset="0" stop-color="#003aff"/><stop offset="0.229" stop-color="#0224ff"/><stop offset="0.417" stop-color="#640dff"/><stop offset="0.531" stop-color="#a0f"/><stop offset="0.651" stop-color="#fe00ff"/><stop offset="0.743" stop-color="#ff00c7"/><stop offset="0.857" stop-color="#ff0096"/><stop offset="1" stop-color="#ff006e"/></linearGradient><linearGradient id="c309" gradientUnits="userSpaceOnUse" x1="70" x2="243"><stop offset="0" stop-color="#0039ff"/><stop offset="0.225" stop-color="#0023ff"/><stop offset="0.416" stop-color="#610cff"/><stop offset="0.526" stop-color="#a300ff"/><stop offset="0.659" stop-color="#fe00ff"/><stop offset="0.751" stop-color="#ff00c7"/><stop offset="0.867" stop-color="#ff0097"/><stop offset="1" stop-color="#ff0071"/></linearGradient><linearGradient id="c310" gradientUnits="userSpaceOnUse" x1="71" x2="240"><stop offset="0" stop-color="#0037ff"/><stop offset="0.225" stop-color="#0121ff"/><stop offset="0.426" stop-color="#650aff"/><stop offset="0.521" stop-color="#9c00ff"/><stop offset="0.669" stop-color="#fe00ff"/><stop offset="0.769" stop-color="#ff00c4"/><stop offset="0.888" stop-color="#ff0095"/><stop offset="1" stop-color="#ff0076"/></linearGradient><linearGradient id="c311" gradientUnits="userSpaceOnUse" x1="71" x2="238"><stop offset="0" stop-color="#0035ff"/><stop offset="0.228" stop-color="#0220ff"/><stop offset="0.431" stop-color="#6508ff"/><stop offset="0.521" stop-color="#9800ff"/><stop offset="0.677" stop-color="#fe00ff"/><stop offset="0.778" stop-color="#ff00c5"/><stop offset="0.898" stop-color="#ff0096"/><stop offset="1" stop-color="#ff0079"/></linearGradient><linearGradient id="c312" gradientUnits="userSpaceOnUse" x1="72" x2="235"><stop offset="0" stop-color="#03f"/><stop offset="0.227" stop-color="#031eff"/><stop offset="0.436" stop-color="#6606ff"/><stop offset="0.515" stop-color="#9200ff"/><stop offset="0.681" stop-color="#f900ff"/><stop offset="0.699" stop-color="#ff00f8"/><stop offset="0.791" stop-color="#ff00c5"/><stop offset="0.92" stop-color="#ff0094"/><stop offset="1" stop-color="#ff007e"/></linearGradient><linearGradient id="c313" gradientUnits="userSpaceOnUse" x1="72" x2="233"><stop offset="0" stop-color="#0032ff"/><stop offset="0.224" stop-color="#011dff"/><stop offset="0.435" stop-color="#6306ff"/><stop offset="0.516" stop-color="#8e00ff"/><stop offset="0.689" stop-color="#f900ff"/><stop offset="0.708" stop-color="#ff00f9"/><stop offset="0.807" stop-color="#ff00c3"/><stop offset="0.938" stop-color="#ff0093"/><stop offset="1" stop-color="#ff0082"/></linearGradient><linearGradient id="c314" gradientUnits="userSpaceOnUse" x1="73" x2="230"><stop offset="0" stop-color="#0030ff"/><stop offset="0.223" stop-color="#021cff"/><stop offset="0.439" stop-color="#6404ff"/><stop offset="0.529" stop-color="#9200ff"/><stop offset="0.713" stop-color="#ff00fd"/><stop offset="0.809" stop-color="#ff00c9"/><stop offset="0.936" stop-color="#f09"/><stop offset="1" stop-color="#ff0087"/></linearGradient><linearGradient id="c315" gradientUnits="userSpaceOnUse" x1="73" x2="228"><stop offset="0" stop-color="#002eff"/><stop offset="0.226" stop-color="#021aff"/><stop offset="0.445" stop-color="#6402ff"/><stop offset="0.639" stop-color="#cd00ff"/><stop offset="0.723" stop-color="#ff00fd"/><stop offset="0.819" stop-color="#ff00c9"/><stop offset="0.948" stop-color="#f09"/><stop offset="1" stop-color="#ff008b"/></linearGradient><linearGradient id="c316" gradientUnits="userSpaceOnUse" x1="74" x2="226"><stop offset="0" stop-color="#002cff"/><stop offset="0.217" stop-color="#0119ff"/><stop offset="0.447" stop-color="#6501ff"/><stop offset="0.645" stop-color="#cd00ff"/><stop offset="0.73" stop-color="#ff00fd"/><stop offset="0.829" stop-color="#ff00ca"/><stop offset="0.961" stop-color="#ff009a"/><stop offset="1" stop-color="#ff008f"/></linearGradient><linearGradient id="c317" gradientUnits="userSpaceOnUse" x1="74" x2="223"><stop offset="0" stop-color="#002bff"/><stop offset="0.221" stop-color="#0118ff"/><stop offset="0.456" stop-color="#6500ff"/><stop offset="0.658" stop-color="#cd00ff"/><stop offset="0.745" stop-color="#ff00fe"/><stop offset="0.846" stop-color="#ff00ca"/><stop offset="0.98" stop-color="#ff009a"/><stop offset="1" stop-color="#ff0095"/></linearGradient><linearGradient id="c318" gradientUnits="userSpaceOnUse" x1="75" x2="221"><stop offset="0" stop-color="#0029ff"/><stop offset="0.219" stop-color="#0216ff"/><stop offset="0.459" stop-color="#60f"/><stop offset="0.664" stop-color="#cd00ff"/><stop offset="0.753" stop-color="#ff00fe"/><stop offset="0.856" stop-color="#ff00ca"/><stop offset="1" stop-color="#f09"/></linearGradient><linearGradient id="c319" gradientUnits="userSpaceOnUse" x1="75" x2="218"><stop offset="0" stop-color="#0027ff"/><stop offset="0.217" stop-color="#0015ff"/><stop offset="0.462" stop-color="#6300ff"/><stop offset="0.671" stop-color="#c900ff"/><stop offset="0.769" stop-color="#ff00fe"/><stop offset="0.881" stop-color="#ff00c8"/><stop offset="1" stop-color="#ff009f"/></linearGradient><linearGradient id="c320" gradientUnits="userSpaceOnUse" x1="75" x2="216"><stop offset="0" stop-color="#0026ff"/><stop offset="0.22" stop-color="#0114ff"/><stop offset="0.454" stop-color="#5d00ff"/><stop offset="0.674" stop-color="#c500ff"/><stop offset="0.78" stop-color="#ff00fe"/><stop offset="0.894" stop-color="#ff00c8"/><stop offset="1" stop-color="#ff00a4"/></linearGradient><linearGradient id="c321" gradientUnits="userSpaceOnUse" x1="76" x2="213"><stop offset="0" stop-color="#0024ff"/><stop offset="0.219" stop-color="#0212ff"/><stop offset="0.445" stop-color="#5800ff"/><stop offset="0.672" stop-color="#be00ff"/><stop offset="0.796" stop-color="#ff00fe"/><stop offset="0.912" stop-color="#ff00c9"/><stop offset="1" stop-color="#ff00ab"/></linearGradient><linearGradient id="c322" gradientUnits="userSpaceOnUse" x1="76" x2="211"><stop offset="0" stop-color="#0023ff"/><stop offset="0.215" stop-color="#0012ff"/><stop offset="0.437" stop-color="#5200ff"/><stop offset="0.667" stop-color="#b700ff"/><stop offset="0.807" stop-color="#f0f"/><stop offset="0.926" stop-color="#ff00c9"/><stop offset="1" stop-color="#ff00b0"/></linearGradient><linearGradient id="c323" gradientUnits="userSpaceOnUse" x1="76" x2="209"><stop offset="0" stop-color="#0021ff"/><stop offset="0.218" stop-color="#0110ff"/><stop offset="0.429" stop-color="#4d00ff"/><stop offset="0.669" stop-color="#b400ff"/><stop offset="0.82" stop-color="#f0f"/><stop offset="0.94" stop-color="#ff00c9"/><stop offset="1" stop-color="#ff00b5"/></linearGradient><linearGradient id="c324" gradientUnits="userSpaceOnUse" x1="77" x2="206"><stop offset="0" stop-color="#001fff"/><stop offset="0.217" stop-color="#020fff"/><stop offset="0.419" stop-color="#4800ff"/><stop offset="0.667" stop-color="#ad00ff"/><stop offset="0.837" stop-color="#f0f"/><stop offset="0.961" stop-color="#ff00ca"/><stop offset="1" stop-color="#ff00bc"/></linearGradient><linearGradient id="c325" gradientUnits="userSpaceOnUse" x1="77" x2="204"><stop offset="0" stop-color="#001eff"/><stop offset="0.22" stop-color="#030dff"/><stop offset="0.409" stop-color="#4200ff"/><stop offset="0.669" stop-color="#a0f"/><stop offset="0.85" stop-color="#f0f"/><stop offset="0.984" stop-color="#ff00c7"/><stop offset="1" stop-color="#ff00c2"/></linearGradient><linearGradient id="c326" gradientUnits="userSpaceOnUse" x1="78" x2="201"><stop offset="0" stop-color="#001cff"/><stop offset="0.211" stop-color="#010cff"/><stop offset="0.398" stop-color="#3d00ff"/><stop offset="0.667" stop-color="#a300ff"/><stop offset="0.87" stop-color="#fe00ff"/><stop offset="1" stop-color="#ff00ca"/></linearGradient><linearGradient id="c327" gradientUnits="userSpaceOnUse" x1="79" x2="199"><stop offset="0" stop-color="#001aff"/><stop offset="0.208" stop-color="#020bff"/><stop offset="0.383" stop-color="#3800ff"/><stop offset="0.658" stop-color="#9c00ff"/><stop offset="0.883" stop-color="#fe00ff"/><stop offset="1" stop-color="#ff00d0"/></linearGradient><linearGradient id="c328" gradientUnits="userSpaceOnUse" x1="79" x2="196"><stop offset="0" stop-color="#0019ff"/><stop offset="0.214" stop-color="#020aff"/><stop offset="0.376" stop-color="#30f"/><stop offset="0.667" stop-color="#90f"/><stop offset="0.906" stop-color="#fe00ff"/><stop offset="1" stop-color="#ff00da"/></linearGradient><linearGradient id="c329" gradientUnits="userSpaceOnUse" x1="80" x2="194"><stop offset="0" stop-color="#0017ff"/><stop offset="0.202" stop-color="#0109ff"/><stop offset="0.368" stop-color="#3100ff"/><stop offset="0.667" stop-color="#9600ff"/><stop offset="0.921" stop-color="#fe00ff"/><stop offset="1" stop-color="#ff00e0"/></linearGradient><linearGradient id="c330" gradientUnits="userSpaceOnUse" x1="80" x2="192"><stop offset="0" stop-color="#0015ff"/><stop offset="0.205" stop-color="#0108ff"/><stop offset="0.357" stop-color="#2d00ff"/><stop offset="0.661" stop-color="#9000ff"/><stop offset="0.929" stop-color="#fa00ff"/><stop offset="0.955" stop-color="#ff00f9"/><stop offset="1" stop-color="#ff00e7"/></linearGradient><linearGradient id="c331" gradientUnits="userSpaceOnUse" x1="81" x2="189"><stop offset="0" stop-color="#0013ff"/><stop offset="0.204" stop-color="#0206ff"/><stop offset="0.352" stop-color="#2b00ff"/><stop offset="0.676" stop-color="#9000ff"/><stop offset="0.954" stop-color="#fa00ff"/><stop offset="0.981" stop-color="#ff00f9"/><stop offset="1" stop-color="#ff00f2"/></linearGradient><linearGradient id="c332" gradientUnits="userSpaceOnUse" x1="81" x2="187"><stop offset="0" stop-color="#0012ff"/><stop offset="0.198" stop-color="#0105ff"/><stop offset="0.349" stop-color="#2900ff"/><stop offset="0.679" stop-color="#8d00ff"/><stop offset="0.962" stop-color="#f600ff"/><stop offset="0.991" stop-color="#ff00fd"/><stop offset="1" stop-color="#ff00f9"/></linearGradient><linearGradient id="c333" gradientUnits="userSpaceOnUse" x1="81" x2="184"><stop offset="0" stop-color="#01f"/><stop offset="0.204" stop-color="#0104ff"/><stop offset="0.369" stop-color="#2c00ff"/><stop offset="0.709" stop-color="#9100ff"/><stop offset="1" stop-color="#f900ff"/></linearGradient><linearGradient id="c334" gradientUnits="userSpaceOnUse" x1="82" x2="182"><stop offset="0" stop-color="#000fff"/><stop offset="0.2" stop-color="#0203ff"/><stop offset="0.57" stop-color="#6400ff"/><stop offset="0.89" stop-color="#ca00ff"/><stop offset="1" stop-color="#f200ff"/></linearGradient><linearGradient id="c335" gradientUnits="userSpaceOnUse" x1="82" x2="179"><stop offset="0" stop-color="#000eff"/><stop offset="0.206" stop-color="#0301ff"/><stop offset="0.598" stop-color="#6700ff"/><stop offset="0.928" stop-color="#cd00ff"/><stop offset="1" stop-color="#e600ff"/></linearGradient><linearGradient id="c336" gradientUnits="userSpaceOnUse" x1="83" x2="177"><stop offset="0" stop-color="#000cff"/><stop offset="0.191" stop-color="#0101ff"/><stop offset="0.596" stop-color="#6400ff"/><stop offset="0.947" stop-color="#cd00ff"/><stop offset="1" stop-color="#df00ff"/></linearGradient><linearGradient id="c337" gradientUnits="userSpaceOnUse" x1="84" x2="175"><stop offset="0" stop-color="#000aff"/><stop offset="0.187" stop-color="#0200ff"/><stop offset="0.604" stop-color="#6500ff"/><stop offset="0.967" stop-color="#cd00ff"/><stop offset="1" stop-color="#d800ff"/></linearGradient><linearGradient id="c338" gradientUnits="userSpaceOnUse" x1="85" x2="172"><stop offset="0" stop-color="#0008ff"/><stop offset="0.184" stop-color="#0300ff"/><stop offset="0.621" stop-color="#6500ff"/><stop offset="1" stop-color="#cd00ff"/></linearGradient><linearGradient id="c339" gradientUnits="userSpaceOnUse" x1="85" x2="170"><stop offset="0" stop-color="#0007ff"/><stop offset="0.176" stop-color="#0100ff"/><stop offset="0.624" stop-color="#6300ff"/><stop offset="1" stop-color="#c600ff"/></linearGradient><linearGradient id="c340" gradientUnits="userSpaceOnUse" x1="86" x2="167"><stop offset="0" stop-color="#0005ff"/><stop offset="0.173" stop-color="#0200ff"/><stop offset="0.642" stop-color="#6300ff"/><stop offset="1" stop-color="#bc00ff"/></linearGradient><linearGradient id="c341" gradientUnits="userSpaceOnUse" x1="86" x2="165"><stop offset="0" stop-color="#0004ff"/><stop offset="0.177" stop-color="#0200ff"/><stop offset="0.671" stop-color="#6700ff"/><stop offset="1" stop-color="#b600ff"/></linearGradient><linearGradient id="c342" gradientUnits="userSpaceOnUse" x1="87" x2="162"><stop offset="0" stop-color="#0002ff"/><stop offset="0.16" stop-color="#0100ff"/><stop offset="0.68" stop-color="#6400ff"/><stop offset="1" stop-color="#ac00ff"/></linearGradient><linearGradient id="c343" gradientUnits="userSpaceOnUse" x1="88" x2="160"><stop offset="0" stop-color="#00f"/><stop offset="0.153" stop-color="#0100ff"/><stop offset="0.694" stop-color="#6500ff"/><stop offset="1" stop-color="#a600ff"/></linearGradient><linearGradient id="c344" gradientUnits="userSpaceOnUse" x1="89" x2="158"><stop offset="0" stop-color="#00f"/><stop offset="0.145" stop-color="#0200ff"/><stop offset="0.71" stop-color="#6500ff"/><stop offset="1" stop-color="#a000ff"/></linearGradient><linearGradient id="c345" gradientUnits="userSpaceOnUse" x1="90" x2="155"><stop offset="0" stop-color="#00f"/><stop offset="0.138" stop-color="#0300ff"/><stop offset="0.738" stop-color="#6500ff"/><stop offset="1" stop-color="#9700ff"/></linearGradient><linearGradient id="c346" gradientUnits="userSpaceOnUse" x1="91" x2="153"><stop offset="0" stop-color="#00f"/><stop offset="0.113" stop-color="#0100ff"/><stop offset="0.742" stop-color="#6300ff"/><stop offset="1" stop-color="#9100ff"/></linearGradient><linearGradient id="c347" gradientUnits="userSpaceOnUse" x1="91" x2="150"><stop offset="0" stop-color="#00f"/><stop offset="0.119" stop-color="#0200ff"/><stop offset="0.797" stop-color="#60f"/><stop offset="1" stop-color="#80f"/></linearGradient><linearGradient id="c348" gradientUnits="userSpaceOnUse" x1="92" x2="148"><stop offset="0" stop-color="#00f"/><stop offset="0.107" stop-color="#0300ff"/><stop offset="0.821" stop-color="#6700ff"/><stop offset="1" stop-color="#8300ff"/></linearGradient><linearGradient id="c349" gradientUnits="userSpaceOnUse" x1="92" x2="146"><stop offset="0" stop-color="#00f"/><stop offset="0.111" stop-color="#0300ff"/><stop offset="0.852" stop-color="#6700ff"/><stop offset="1" stop-color="#7d00ff"/></linearGradient><linearGradient id="c350" gradientUnits="userSpaceOnUse" x1="93" x2="143"><stop offset="0" stop-color="#00f"/><stop offset="0.1" stop-color="#0400ff"/><stop offset="0.9" stop-color="#6700ff"/><stop offset="1" stop-color="#7500ff"/></linearGradient><linearGradient id="c351" gradientUnits="userSpaceOnUse" x1="95" x2="141"><stop offset="0" stop-color="#00f"/><stop offset="0.674" stop-color="#4800ff"/><stop offset="1" stop-color="#7000ff"/></linearGradient><linearGradient id="c352" gradientUnits="userSpaceOnUse" x1="96" x2="138"><stop offset="0" stop-color="#0100ff"/><stop offset="0.952" stop-color="#6300ff"/><stop offset="1" stop-color="#6800ff"/></linearGradient><linearGradient id="c353" gradientUnits="userSpaceOnUse" x1="97" x2="136"><stop offset="0" stop-color="#0400ff"/><stop offset="1" stop-color="#6300ff"/></linearGradient><linearGradient id="c354" gradientUnits="userSpaceOnUse" x1="98" x2="133"><stop offset="0" stop-color="#0700ff"/><stop offset="1" stop-color="#5c00ff"/></linearGradient><linearGradient id="c355" gradientUnits="userSpaceOnUse" x1="99" x2="131"><stop offset="0" stop-color="#0a00ff"/><stop offset="1" stop-color="#5700ff"/></linearGradient><linearGradient id="c356" gradientUnits="userSpaceOnUse" x1="100" x2="129"><stop offset="0" stop-color="#0d00ff"/><stop offset="1" stop-color="#5200ff"/></linearGradient><linearGradient id="c357" gradientUnits="userSpaceOnUse" x1="101" x2="126"><stop offset="0" stop-color="#0f00ff"/><stop offset="1" stop-color="#4b00ff"/></linearGradient><linearGradient id="c358" gradientUnits="userSpaceOnUse" x1="103" x2="124"><stop offset="0" stop-color="#1500ff"/><stop offset="1" stop-color="#4600ff"/></linearGradient><linearGradient id="c359" gradientUnits="userSpaceOnUse" x1="104" x2="121"><stop offset="0" stop-color="#1700ff"/><stop offset="1" stop-color="#3f00ff"/></linearGradient><linearGradient id="c360" gradientUnits="userSpaceOnUse" x1="105" x2="119"><stop offset="0" stop-color="#1a00ff"/><stop offset="1" stop-color="#3b00ff"/></linearGradient><linearGradient id="c361" gradientUnits="userSpaceOnUse" x1="106" x2="116"><stop offset="0" stop-color="#1d00ff"/><stop offset="1" stop-color="#3400ff"/></linearGradient><linearGradient id="c362" gradientUnits="userSpaceOnUse" x1="108" x2="114"><stop offset="0" stop-color="#20f"/><stop offset="1" stop-color="#3000ff"/></linearGradient><clipPath id="hs"><path d="M112.0,554.3 111.1,554.4 110.4,554.1 109.6,553.6 108.9,553.1 108.2,552.6 107.5,552.0 106.7,551.3 106.0,550.8 105.3,550.2 104.4,549.6 103.5,548.8 102.4,548.0 101.3,547.1 100.1,546.1 99.4,545.6 98.7,545.0 98.0,544.3 97.3,543.6 96.5,542.9 95.7,542.1 94.9,541.2 94.1,540.3 93.2,539.2 92.2,538.0 91.1,536.6 90.0,535.1 88.8,533.3 87.6,531.4 86.3,529.4 85.0,527.1 83.6,524.6 82.1,521.9 80.5,518.9 78.9,515.5 77.2,511.9 75.4,507.9 73.6,503.6 71.6,499.0 69.6,493.9 67.4,488.5 65.2,482.6 62.9,476.3 60.6,469.5 58.3,462.2 56.0,454.5 53.7,446.3 51.5,437.7 49.2,428.6 47.0,419.1 44.7,409.2 42.6,398.9 40.5,388.3 38.5,377.6 36.7,366.7 35.0,355.8 33.5,344.9 32.2,333.9 31.1,323.1 30.2,312.4 29.5,302.0 29.0,291.9 28.9,282.1 29.0,272.6 29.4,263.5 30.0,254.7 31.0,246.4 32.3,238.6 33.9,231.3 35.8,224.6 37.9,218.5 40.4,213.1 43.1,208.4 46.0,204.5 49.2,201.3 52.5,198.8 56.0,196.9 59.6,195.7 63.3,195.0 67.1,194.9 70.9,195.3 74.8,196.0 78.8,197.1 82.8,198.3 86.7,199.8 90.7,201.5 94.7,203.3 98.7,205.2 102.5,207.2 106.3,209.2 110.1,211.2 113.8,213.3 117.5,215.5 121.1,217.7 124.8,219.9 128.3,222.2 131.9,224.6 135.5,227.0 139.0,229.5 142.6,232.0 146.1,234.6 149.6,237.2 153.2,239.8 156.7,242.5 160.2,245.2 163.7,248.0 167.2,250.7 170.6,253.6 174.1,256.4 177.6,259.2 181.1,262.1 184.6,265.0 188.1,268.0 191.6,270.9 195.1,273.8 198.5,276.8 202.0,279.8 205.5,282.8 209.0,285.8 212.5,288.8 215.9,291.8 219.4,294.9 222.9,297.9 226.4,300.9 229.8,303.9 233.3,307.0 236.7,310.0 240.2,313.0 243.6,316.0 247.0,319.0 250.4,322.0 253.8,325.0 257.2,328.0 260.5,331.0 263.8,333.9 267.1,336.9 270.4,339.8 273.7,342.7 276.9,345.6 280.1,348.4 283.3,351.2 286.5,354.0 289.6,356.8 292.7,359.5 295.7,362.2 298.7,364.9 301.7,367.5 304.6,370.1 307.5,372.6 310.3,375.1 313.1,377.6 315.8,380.0 318.5,382.3 321.0,384.6 323.5,386.8 325.9,389.0 328.3,391.0 330.5,393.1 332.8,395.0 335.0,397.0 337.1,398.9 339.2,400.7 341.2,402.5 343.1,404.2 345.0,405.8 346.7,407.4 348.4,408.9 350.1,410.3 351.7,411.7 353.2,413.0 354.6,414.3 356.0,415.6 357.4,416.8 358.6,417.9 359.9,419.0 361.0,420.0 362.1,421.0 363.2,421.9 364.2,422.8 365.2,423.7 366.1,424.5 367.0,425.3 367.8,426.0 368.6,426.8 369.4,427.4 370.2,428.1 370.9,428.7 371.5,429.3 372.2,429.9 372.9,430.5 373.5,431.0 374.6,432.1 375.7,433.0 376.7,433.9 377.6,434.7 378.5,435.5 379.2,436.1 379.9,436.7 380.8,437.5 381.5,438.1 382.1,438.7 382.8,439.3 383.5,439.9 384.2,440.5 384.8,441.1Z"/></clipPath></defs><g clip-path="url(#hs)" shape-rendering="crispEdges"><rect x="65" y="193" width="5" height="1" fill="url(#c0)"/><rect x="57" y="194" width="16" height="1" fill="url(#c1)"/><rect x="54" y="195" width="23" height="1" fill="url(#c2)"/><rect x="52" y="196" width="29" height="1" fill="url(#c3)"/><rect x="50" y="197" width="35" height="1" fill="url(#c4)"/><rect x="49" y="198" width="40" height="1" fill="url(#c5)"/><rect x="48" y="199" width="43" height="1" fill="url(#c6)"/><rect x="47" y="200" width="46" height="1" fill="url(#c7)"/><rect x="46" y="201" width="49" height="1" fill="url(#c8)"/><rect x="45" y="202" width="52" height="1" fill="url(#c9)"/><rect x="44" y="203" width="55" height="1" fill="url(#c10)"/><rect x="43" y="204" width="58" height="1" fill="url(#c11)"/><rect x="43" y="205" width="60" height="1" fill="url(#c12)"/><rect x="42" y="206" width="63" height="1" fill="url(#c13)"/><rect x="41" y="207" width="66" height="1" fill="url(#c14)"/><rect x="40" y="208" width="69" height="1" fill="url(#c15)"/><rect x="40" y="209" width="71" height="1" fill="url(#c16)"/><rect x="39" y="210" width="74" height="1" fill="url(#c17)"/><rect x="39" y="211" width="75" height="1" fill="url(#c18)"/><rect x="38" y="212" width="78" height="1" fill="url(#c19)"/><rect x="37" y="213" width="81" height="1" fill="url(#c20)"/><rect x="37" y="214" width="83" height="1" fill="url(#c21)"/><rect x="36" y="215" width="86" height="1" fill="url(#c22)"/><rect x="36" y="216" width="88" height="1" fill="url(#c23)"/><rect x="35" y="217" width="90" height="1" fill="url(#c24)"/><rect x="35" y="218" width="92" height="1" fill="url(#c25)"/><rect x="34" y="219" width="94" height="1" fill="url(#c26)"/><rect x="34" y="220" width="96" height="1" fill="url(#c27)"/><rect x="34" y="221" width="97" height="1" fill="url(#c28)"/><rect x="33" y="222" width="99" height="1" fill="url(#c29)"/><rect x="33" y="223" width="101" height="1" fill="url(#c30)"/><rect x="33" y="224" width="102" height="1" fill="url(#c31)"/><rect x="32" y="225" width="105" height="1" fill="url(#c32)"/><rect x="32" y="226" width="106" height="1" fill="url(#c33)"/><rect x="32" y="227" width="108" height="1" fill="url(#c34)"/><rect x="32" y="228" width="110" height="1" fill="url(#c35)"/><rect x="31" y="229" width="112" height="1" fill="url(#c36)"/><rect x="31" y="230" width="113" height="1" fill="url(#c37)"/><rect x="31" y="231" width="114" height="1" fill="url(#c38)"/><rect x="31" y="232" width="116" height="1" fill="url(#c39)"/><rect x="31" y="233" width="118" height="1" fill="url(#c40)"/><rect x="30" y="234" width="120" height="1" fill="url(#c41)"/><rect x="30" y="235" width="121" height="1" fill="url(#c42)"/><rect x="30" y="236" width="122" height="1" fill="url(#c43)"/><rect x="30" y="237" width="124" height="1" fill="url(#c44)"/><rect x="30" y="238" width="126" height="1" fill="url(#c45)"/><rect x="30" y="239" width="127" height="1" fill="url(#c46)"/><rect x="29" y="240" width="129" height="1" fill="url(#c47)"/><rect x="29" y="241" width="130" height="1" fill="url(#c48)"/><rect x="29" y="242" width="131" height="1" fill="url(#c49)"/><rect x="29" y="243" width="133" height="1" fill="url(#c50)"/><rect x="28" y="244" width="135" height="1" fill="url(#c51)"/><rect x="28" y="245" width="136" height="1" fill="url(#c52)"/><rect x="28" y="246" width="138" height="1" fill="url(#c53)"/><rect x="28" y="247" width="139" height="1" fill="url(#c54)"/><rect x="28" y="248" width="141" height="1" fill="url(#c55)"/><rect x="28" y="249" width="142" height="1" fill="url(#c56)"/><rect x="28" y="250" width="143" height="1" fill="url(#c57)"/><rect x="28" y="251" width="144" height="1" fill="url(#c58)"/><rect x="28" y="252" width="145" height="1" fill="url(#c59)"/><rect x="28" y="253" width="146" height="1" fill="url(#c60)"/><rect x="28" y="254" width="148" height="1" fill="url(#c61)"/><rect x="28" y="255" width="149" height="1" fill="url(#c62)"/><rect x="28" y="256" width="150" height="1" fill="url(#c63)"/><rect x="28" y="257" width="151" height="1" fill="url(#c64)"/><rect x="27" y="258" width="153" height="1" fill="url(#c65)"/><rect x="27" y="259" width="154" height="1" fill="url(#c66)"/><rect x="27" y="260" width="156" height="1" fill="url(#c67)"/><rect x="27" y="261" width="157" height="1" fill="url(#c68)"/><rect x="27" y="262" width="158" height="1" fill="url(#c69)"/><rect x="27" y="263" width="159" height="1" fill="url(#c70)"/><rect x="27" y="264" width="160" height="1" fill="url(#c71)"/><rect x="27" y="265" width="162" height="1" fill="url(#c72)"/><rect x="27" y="266" width="164" height="1" fill="url(#c73)"/><rect x="26" y="267" width="166" height="1" fill="url(#c74)"/><rect x="26" y="268" width="167" height="1" fill="url(#c75)"/><rect x="26" y="269" width="168" height="1" fill="url(#c76)"/><rect x="26" y="270" width="169" height="1" fill="url(#c77)"/><rect x="26" y="271" width="171" height="1" fill="url(#c78)"/><rect x="26" y="272" width="172" height="1" fill="url(#c79)"/><rect x="26" y="273" width="173" height="1" fill="url(#c80)"/><rect x="26" y="274" width="174" height="1" fill="url(#c81)"/><rect x="26" y="275" width="175" height="1" fill="url(#c82)"/><rect x="26" y="276" width="176" height="1" fill="url(#c83)"/><rect x="26" y="277" width="178" height="1" fill="url(#c84)"/><rect x="26" y="278" width="179" height="1" fill="url(#c85)"/><rect x="26" y="279" width="180" height="1" fill="url(#c86)"/><rect x="26" y="280" width="181" height="1" fill="url(#c87)"/><rect x="26" y="281" width="182" height="1" fill="url(#c88)"/><rect x="26" y="282" width="183" height="1" fill="url(#c89)"/><rect x="26" y="283" width="184" height="1" fill="url(#c90)"/><rect x="26" y="284" width="185" height="1" fill="url(#c91)"/><rect x="26" y="285" width="186" height="1" fill="url(#c92)"/><rect x="26" y="286" width="188" height="1" fill="url(#c93)"/><rect x="26" y="287" width="189" height="1" fill="url(#c94)"/><rect x="27" y="288" width="189" height="1" fill="url(#c95)"/><rect x="27" y="289" width="190" height="1" fill="url(#c96)"/><rect x="27" y="290" width="191" height="1" fill="url(#c97)"/><rect x="27" y="291" width="192" height="1" fill="url(#c98)"/><rect x="27" y="292" width="194" height="1" fill="url(#c99)"/><rect x="27" y="293" width="195" height="1" fill="url(#c100)"/><rect x="27" y="294" width="196" height="1" fill="url(#c101)"/><rect x="27" y="295" width="197" height="1" fill="url(#c102)"/><rect x="27" y="296" width="198" height="1" fill="url(#c103)"/><rect x="27" y="297" width="199" height="1" fill="url(#c104)"/><rect x="27" y="298" width="201" height="1" fill="url(#c105)"/><rect x="27" y="299" width="202" height="1" fill="url(#c106)"/><rect x="27" y="300" width="203" height="1" fill="url(#c107)"/><rect x="27" y="301" width="204" height="1" fill="url(#c108)"/><rect x="27" y="302" width="205" height="1" fill="url(#c109)"/><rect x="27" y="303" width="206" height="1" fill="url(#c110)"/><rect x="27" y="304" width="208" height="1" fill="url(#c111)"/><rect x="27" y="305" width="209" height="1" fill="url(#c112)"/><rect x="27" y="306" width="210" height="1" fill="url(#c113)"/><rect x="27" y="307" width="211" height="1" fill="url(#c114)"/><rect x="28" y="308" width="211" height="1" fill="url(#c115)"/><rect x="28" y="309" width="212" height="1" fill="url(#c116)"/><rect x="28" y="310" width="213" height="1" fill="url(#c117)"/><rect x="28" y="311" width="214" height="1" fill="url(#c118)"/><rect x="28" y="312" width="215" height="1" fill="url(#c119)"/><rect x="28" y="313" width="216" height="1" fill="url(#c120)"/><rect x="28" y="314" width="217" height="1" fill="url(#c121)"/><rect x="28" y="315" width="218" height="1" fill="url(#c122)"/><rect x="28" y="316" width="219" height="1" fill="url(#c123)"/><rect x="28" y="317" width="220" height="1" fill="url(#c124)"/><rect x="28" y="318" width="221" height="1" fill="url(#c125)"/><rect x="29" y="319" width="221" height="1" fill="url(#c126)"/><rect x="29" y="320" width="223" height="1" fill="url(#c127)"/><rect x="29" y="321" width="224" height="1" fill="url(#c128)"/><rect x="29" y="322" width="225" height="1" fill="url(#c129)"/><rect x="29" y="323" width="226" height="1" fill="url(#c130)"/><rect x="29" y="324" width="227" height="1" fill="url(#c131)"/><rect x="29" y="325" width="228" height="1" fill="url(#c132)"/><rect x="29" y="326" width="230" height="1" fill="url(#c133)"/><rect x="29" y="327" width="231" height="1" fill="url(#c134)"/><rect x="29" y="328" width="232" height="1" fill="url(#c135)"/><rect x="30" y="329" width="233" height="1" fill="url(#c136)"/><rect x="30" y="330" width="234" height="1" fill="url(#c137)"/><rect x="30" y="331" width="235" height="1" fill="url(#c138)"/><rect x="30" y="332" width="236" height="1" fill="url(#c139)"/><rect x="30" y="333" width="237" height="1" fill="url(#c140)"/><rect x="30" y="334" width="239" height="1" fill="url(#c141)"/><rect x="30" y="335" width="240" height="1" fill="url(#c142)"/><rect x="30" y="336" width="241" height="1" fill="url(#c143)"/><rect x="30" y="337" width="242" height="1" fill="url(#c144)"/><rect x="30" y="338" width="243" height="1" fill="url(#c145)"/><rect x="30" y="339" width="244" height="1" fill="url(#c146)"/><rect x="31" y="340" width="244" height="1" fill="url(#c147)"/><rect x="31" y="341" width="245" height="1" fill="url(#c148)"/><rect x="31" y="342" width="246" height="1" fill="url(#c149)"/><rect x="31" y="343" width="247" height="1" fill="url(#c150)"/><rect x="31" y="344" width="248" height="1" fill="url(#c151)"/><rect x="31" y="345" width="249" height="1" fill="url(#c152)"/><rect x="31" y="346" width="251" height="1" fill="url(#c153)"/><rect x="31" y="347" width="252" height="1" fill="url(#c154)"/><rect x="32" y="348" width="252" height="1" fill="url(#c155)"/><rect x="32" y="349" width="253" height="1" fill="url(#c156)"/><rect x="32" y="350" width="254" height="1" fill="url(#c157)"/><rect x="32" y="351" width="255" height="1" fill="url(#c158)"/><rect x="32" y="352" width="256" height="1" fill="url(#c159)"/><rect x="32" y="353" width="257" height="1" fill="url(#c160)"/><rect x="33" y="354" width="257" height="1" fill="url(#c161)"/><rect x="33" y="355" width="259" height="1" fill="url(#c162)"/><rect x="33" y="356" width="260" height="1" fill="url(#c163)"/><rect x="33" y="357" width="261" height="1" fill="url(#c164)"/><rect x="33" y="358" width="262" height="1" fill="url(#c165)"/><rect x="33" y="359" width="263" height="1" fill="url(#c166)"/><rect x="33" y="360" width="264" height="1" fill="url(#c167)"/><rect x="33" y="361" width="265" height="1" fill="url(#c168)"/><rect x="34" y="362" width="265" height="1" fill="url(#c169)"/><rect x="34" y="363" width="267" height="1" fill="url(#c170)"/><rect x="34" y="364" width="268" height="1" fill="url(#c171)"/><rect x="34" y="365" width="269" height="1" fill="url(#c172)"/><rect x="34" y="366" width="270" height="1" fill="url(#c173)"/><rect x="34" y="367" width="271" height="1" fill="url(#c174)"/><rect x="34" y="368" width="272" height="1" fill="url(#c175)"/><rect x="34" y="369" width="273" height="1" fill="url(#c176)"/><rect x="35" y="370" width="273" height="1" fill="url(#c177)"/><rect x="35" y="371" width="275" height="1" fill="url(#c178)"/><rect x="35" y="372" width="276" height="1" fill="url(#c179)"/><rect x="35" y="373" width="277" height="1" fill="url(#c180)"/><rect x="35" y="374" width="278" height="1" fill="url(#c181)"/><rect x="35" y="375" width="279" height="1" fill="url(#c182)"/><rect x="36" y="376" width="280" height="1" fill="url(#c183)"/><rect x="36" y="377" width="281" height="1" fill="url(#c184)"/><rect x="36" y="378" width="282" height="1" fill="url(#c185)"/><rect x="36" y="379" width="283" height="1" fill="url(#c186)"/><rect x="36" y="380" width="284" height="1" fill="url(#c187)"/><rect x="37" y="381" width="284" height="1" fill="url(#c188)"/><rect x="37" y="382" width="285" height="1" fill="url(#c189)"/><rect x="37" y="383" width="287" height="1" fill="url(#c190)"/><rect x="37" y="384" width="288" height="1" fill="url(#c191)"/><rect x="37" y="385" width="289" height="1" fill="url(#c192)"/><rect x="37" y="386" width="290" height="1" fill="url(#c193)"/><rect x="38" y="387" width="290" height="1" fill="url(#c194)"/><rect x="38" y="388" width="291" height="1" fill="url(#c195)"/><rect x="38" y="389" width="292" height="1" fill="url(#c196)"/><rect x="38" y="390" width="293" height="1" fill="url(#c197)"/><rect x="38" y="391" width="294" height="1" fill="url(#c198)"/><rect x="39" y="392" width="294" height="1" fill="url(#c199)"/><rect x="39" y="393" width="295" height="1" fill="url(#c200)"/><rect x="39" y="394" width="296" height="1" fill="url(#c201)"/><rect x="39" y="395" width="298" height="1" fill="url(#c202)"/><rect x="39" y="396" width="299" height="1" fill="url(#c203)"/><rect x="40" y="397" width="300" height="1" fill="url(#c204)"/><rect x="40" y="398" width="301" height="1" fill="url(#c205)"/><rect x="40" y="399" width="302" height="1" fill="url(#c206)"/><rect x="40" y="400" width="303" height="1" fill="url(#c207)"/><rect x="40" y="401" width="304" height="1" fill="url(#c208)"/><rect x="41" y="402" width="304" height="1" fill="url(#c209)"/><rect x="41" y="403" width="305" height="1" fill="url(#c210)"/><rect x="41" y="404" width="306" height="1" fill="url(#c211)"/><rect x="41" y="405" width="307" height="1" fill="url(#c212)"/><rect x="41" y="406" width="308" height="1" fill="url(#c213)"/><rect x="41" y="407" width="310" height="1" fill="url(#c214)"/><rect x="42" y="408" width="310" height="1" fill="url(#c215)"/><rect x="42" y="409" width="311" height="1" fill="url(#c216)"/><rect x="42" y="410" width="312" height="1" fill="url(#c217)"/><rect x="42" y="411" width="313" height="1" fill="url(#c218)"/><rect x="42" y="412" width="314" height="1" fill="url(#c219)"/><rect x="43" y="413" width="314" height="1" fill="url(#c220)"/><rect x="43" y="414" width="316" height="1" fill="url(#c221)"/><rect x="43" y="415" width="317" height="1" fill="url(#c222)"/><rect x="43" y="416" width="318" height="1" fill="url(#c223)"/><rect x="43" y="417" width="319" height="1" fill="url(#c224)"/><rect x="44" y="418" width="319" height="1" fill="url(#c225)"/><rect x="44" y="419" width="321" height="1" fill="url(#c226)"/><rect x="44" y="420" width="322" height="1" fill="url(#c227)"/><rect x="44" y="421" width="323" height="1" fill="url(#c228)"/><rect x="45" y="422" width="323" height="1" fill="url(#c229)"/><rect x="45" y="423" width="324" height="1" fill="url(#c230)"/><rect x="45" y="424" width="324" height="1" fill="url(#c231)"/><rect x="46" y="425" width="325" height="1" fill="url(#c232)"/><rect x="46" y="426" width="326" height="1" fill="url(#c233)"/><rect x="46" y="427" width="327" height="1" fill="url(#c234)"/><rect x="47" y="428" width="328" height="1" fill="url(#c235)"/><rect x="47" y="429" width="328" height="1" fill="url(#c236)"/><rect x="47" y="430" width="330" height="1" fill="url(#c237)"/><rect x="47" y="431" width="331" height="1" fill="url(#c238)"/><rect x="48" y="432" width="331" height="1" fill="url(#c239)"/><rect x="48" y="433" width="332" height="1" fill="url(#c240)"/><rect x="48" y="434" width="333" height="1" fill="url(#c241)"/><rect x="48" y="435" width="334" height="1" fill="url(#c242)"/><rect x="49" y="436" width="335" height="1" fill="url(#c243)"/><rect x="49" y="437" width="336" height="1" fill="url(#c244)"/><rect x="49" y="438" width="337" height="1" fill="url(#c245)"/><rect x="49" y="439" width="338" height="1" fill="url(#c246)"/><rect x="49" y="440" width="339" height="1" fill="url(#c247)"/><rect x="50" y="441" width="338" height="1" fill="url(#c248)"/><rect x="50" y="442" width="338" height="1" fill="url(#c249)"/><rect x="50" y="443" width="336" height="1" fill="url(#c250)"/><rect x="50" y="444" width="333" height="1" fill="url(#c251)"/><rect x="51" y="445" width="330" height="1" fill="url(#c252)"/><rect x="51" y="446" width="327" height="1" fill="url(#c253)"/><rect x="51" y="447" width="325" height="1" fill="url(#c254)"/><rect x="51" y="448" width="322" height="1" fill="url(#c255)"/><rect x="52" y="449" width="319" height="1" fill="url(#c256)"/><rect x="52" y="450" width="317" height="1" fill="url(#c257)"/><rect x="53" y="451" width="313" height="1" fill="url(#c258)"/><rect x="53" y="452" width="311" height="1" fill="url(#c259)"/><rect x="53" y="453" width="308" height="1" fill="url(#c260)"/><rect x="54" y="454" width="305" height="1" fill="url(#c261)"/><rect x="54" y="455" width="302" height="1" fill="url(#c262)"/><rect x="54" y="456" width="300" height="1" fill="url(#c263)"/><rect x="55" y="457" width="297" height="1" fill="url(#c264)"/><rect x="55" y="458" width="294" height="1" fill="url(#c265)"/><rect x="55" y="459" width="292" height="1" fill="url(#c266)"/><rect x="55" y="460" width="289" height="1" fill="url(#c267)"/><rect x="56" y="461" width="286" height="1" fill="url(#c268)"/><rect x="56" y="462" width="284" height="1" fill="url(#c269)"/><rect x="56" y="463" width="281" height="1" fill="url(#c270)"/><rect x="56" y="464" width="279" height="1" fill="url(#c271)"/><rect x="57" y="465" width="275" height="1" fill="url(#c272)"/><rect x="57" y="466" width="273" height="1" fill="url(#c273)"/><rect x="57" y="467" width="270" height="1" fill="url(#c274)"/><rect x="57" y="468" width="268" height="1" fill="url(#c275)"/><rect x="58" y="469" width="265" height="1" fill="url(#c276)"/><rect x="58" y="470" width="262" height="1" fill="url(#c277)"/><rect x="58" y="471" width="260" height="1" fill="url(#c278)"/><rect x="59" y="472" width="256" height="1" fill="url(#c279)"/><rect x="59" y="473" width="254" height="1" fill="url(#c280)"/><rect x="59" y="474" width="251" height="1" fill="url(#c281)"/><rect x="59" y="475" width="249" height="1" fill="url(#c282)"/><rect x="60" y="476" width="246" height="1" fill="url(#c283)"/><rect x="60" y="477" width="243" height="1" fill="url(#c284)"/><rect x="61" y="478" width="240" height="1" fill="url(#c285)"/><rect x="61" y="479" width="237" height="1" fill="url(#c286)"/><rect x="62" y="480" width="234" height="1" fill="url(#c287)"/><rect x="62" y="481" width="231" height="1" fill="url(#c288)"/><rect x="63" y="482" width="228" height="1" fill="url(#c289)"/><rect x="63" y="483" width="226" height="1" fill="url(#c290)"/><rect x="63" y="484" width="223" height="1" fill="url(#c291)"/><rect x="64" y="485" width="220" height="1" fill="url(#c292)"/><rect x="64" y="486" width="217" height="1" fill="url(#c293)"/><rect x="64" y="487" width="215" height="1" fill="url(#c294)"/><rect x="65" y="488" width="211" height="1" fill="url(#c295)"/><rect x="65" y="489" width="209" height="1" fill="url(#c296)"/><rect x="65" y="490" width="207" height="1" fill="url(#c297)"/><rect x="66" y="491" width="203" height="1" fill="url(#c298)"/><rect x="66" y="492" width="201" height="1" fill="url(#c299)"/><rect x="67" y="493" width="197" height="1" fill="url(#c300)"/><rect x="67" y="494" width="195" height="1" fill="url(#c301)"/><rect x="67" y="495" width="192" height="1" fill="url(#c302)"/><rect x="68" y="496" width="189" height="1" fill="url(#c303)"/><rect x="68" y="497" width="187" height="1" fill="url(#c304)"/><rect x="69" y="498" width="183" height="1" fill="url(#c305)"/><rect x="69" y="499" width="181" height="1" fill="url(#c306)"/><rect x="69" y="500" width="178" height="1" fill="url(#c307)"/><rect x="70" y="501" width="175" height="1" fill="url(#c308)"/><rect x="70" y="502" width="173" height="1" fill="url(#c309)"/><rect x="71" y="503" width="169" height="1" fill="url(#c310)"/><rect x="71" y="504" width="167" height="1" fill="url(#c311)"/><rect x="72" y="505" width="163" height="1" fill="url(#c312)"/><rect x="72" y="506" width="161" height="1" fill="url(#c313)"/><rect x="73" y="507" width="157" height="1" fill="url(#c314)"/><rect x="73" y="508" width="155" height="1" fill="url(#c315)"/><rect x="74" y="509" width="152" height="1" fill="url(#c316)"/><rect x="74" y="510" width="149" height="1" fill="url(#c317)"/><rect x="75" y="511" width="146" height="1" fill="url(#c318)"/><rect x="75" y="512" width="143" height="1" fill="url(#c319)"/><rect x="75" y="513" width="141" height="1" fill="url(#c320)"/><rect x="76" y="514" width="137" height="1" fill="url(#c321)"/><rect x="76" y="515" width="135" height="1" fill="url(#c322)"/><rect x="76" y="516" width="133" height="1" fill="url(#c323)"/><rect x="77" y="517" width="129" height="1" fill="url(#c324)"/><rect x="77" y="518" width="127" height="1" fill="url(#c325)"/><rect x="78" y="519" width="123" height="1" fill="url(#c326)"/><rect x="79" y="520" width="120" height="1" fill="url(#c327)"/><rect x="79" y="521" width="117" height="1" fill="url(#c328)"/><rect x="80" y="522" width="114" height="1" fill="url(#c329)"/><rect x="80" y="523" width="112" height="1" fill="url(#c330)"/><rect x="81" y="524" width="108" height="1" fill="url(#c331)"/><rect x="81" y="525" width="106" height="1" fill="url(#c332)"/><rect x="81" y="526" width="103" height="1" fill="url(#c333)"/><rect x="82" y="527" width="100" height="1" fill="url(#c334)"/><rect x="82" y="528" width="97" height="1" fill="url(#c335)"/><rect x="83" y="529" width="94" height="1" fill="url(#c336)"/><rect x="84" y="530" width="91" height="1" fill="url(#c337)"/><rect x="85" y="531" width="87" height="1" fill="url(#c338)"/><rect x="85" y="532" width="85" height="1" fill="url(#c339)"/><rect x="86" y="533" width="81" height="1" fill="url(#c340)"/><rect x="86" y="534" width="79" height="1" fill="url(#c341)"/><rect x="87" y="535" width="75" height="1" fill="url(#c342)"/><rect x="88" y="536" width="72" height="1" fill="url(#c343)"/><rect x="89" y="537" width="69" height="1" fill="url(#c344)"/><rect x="90" y="538" width="65" height="1" fill="url(#c345)"/><rect x="91" y="539" width="62" height="1" fill="url(#c346)"/><rect x="91" y="540" width="59" height="1" fill="url(#c347)"/><rect x="92" y="541" width="56" height="1" fill="url(#c348)"/><rect x="92" y="542" width="54" height="1" fill="url(#c349)"/><rect x="93" y="543" width="50" height="1" fill="url(#c350)"/><rect x="95" y="544" width="46" height="1" fill="url(#c351)"/><rect x="96" y="545" width="42" height="1" fill="url(#c352)"/><rect x="97" y="546" width="39" height="1" fill="url(#c353)"/><rect x="98" y="547" width="35" height="1" fill="url(#c354)"/><rect x="99" y="548" width="32" height="1" fill="url(#c355)"/><rect x="100" y="549" width="29" height="1" fill="url(#c356)"/><rect x="101" y="550" width="25" height="1" fill="url(#c357)"/><rect x="103" y="551" width="21" height="1" fill="url(#c358)"/><rect x="104" y="552" width="17" height="1" fill="url(#c359)"/><rect x="105" y="553" width="14" height="1" fill="url(#c360)"/><rect x="106" y="554" width="10" height="1" fill="url(#c361)"/><rect x="108" y="555" width="6" height="1" fill="url(#c362)"/></g><path d="M112.0,554.3 111.1,554.4 110.4,554.1 109.6,553.6 108.9,553.1 108.2,552.6 107.5,552.0 106.7,551.3 106.0,550.8 105.3,550.2 104.4,549.6 103.5,548.8 102.4,548.0 101.3,547.1 100.1,546.1 99.4,545.6 98.7,545.0 98.0,544.3 97.3,543.6 96.5,542.9 95.7,542.1 94.9,541.2 94.1,540.3 93.2,539.2 92.2,538.0 91.1,536.6 90.0,535.1 88.8,533.3 87.6,531.4 86.3,529.4 85.0,527.1 83.6,524.6 82.1,521.9 80.5,518.9 78.9,515.5 77.2,511.9 75.4,507.9 73.6,503.6 71.6,499.0 69.6,493.9 67.4,488.5 65.2,482.6 62.9,476.3 60.6,469.5 58.3,462.2 56.0,454.5 53.7,446.3 51.5,437.7 49.2,428.6 47.0,419.1 44.7,409.2 42.6,398.9 40.5,388.3 38.5,377.6 36.7,366.7 35.0,355.8 33.5,344.9 32.2,333.9 31.1,323.1 30.2,312.4 29.5,302.0 29.0,291.9 28.9,282.1 29.0,272.6 29.4,263.5 30.0,254.7 31.0,246.4 32.3,238.6 33.9,231.3 35.8,224.6 37.9,218.5 40.4,213.1 43.1,208.4 46.0,204.5 49.2,201.3 52.5,198.8 56.0,196.9 59.6,195.7 63.3,195.0 67.1,194.9 70.9,195.3 74.8,196.0 78.8,197.1 82.8,198.3 86.7,199.8 90.7,201.5 94.7,203.3 98.7,205.2 102.5,207.2 106.3,209.2 110.1,211.2 113.8,213.3 117.5,215.5 121.1,217.7 124.8,219.9 128.3,222.2 131.9,224.6 135.5,227.0 139.0,229.5 142.6,232.0 146.1,234.6 149.6,237.2 153.2,239.8 156.7,242.5 160.2,245.2 163.7,248.0 167.2,250.7 170.6,253.6 174.1,256.4 177.6,259.2 181.1,262.1 184.6,265.0 188.1,268.0 191.6,270.9 195.1,273.8 198.5,276.8 202.0,279.8 205.5,282.8 209.0,285.8 212.5,288.8 215.9,291.8 219.4,294.9 222.9,297.9 226.4,300.9 229.8,303.9 233.3,307.0 236.7,310.0 240.2,313.0 243.6,316.0 247.0,319.0 250.4,322.0 253.8,325.0 257.2,328.0 260.5,331.0 263.8,333.9 267.1,336.9 270.4,339.8 273.7,342.7 276.9,345.6 280.1,348.4 283.3,351.2 286.5,354.0 289.6,356.8 292.7,359.5 295.7,362.2 298.7,364.9 301.7,367.5 304.6,370.1 307.5,372.6 310.3,375.1 313.1,377.6 315.8,380.0 318.5,382.3 321.0,384.6 323.5,386.8 325.9,389.0 328.3,391.0 330.5,393.1 332.8,395.0 335.0,397.0 337.1,398.9 339.2,400.7 341.2,402.5 343.1,404.2 345.0,405.8 346.7,407.4 348.4,408.9 350.1,410.3 351.7,411.7 353.2,413.0 354.6,414.3 356.0,415.6 357.4,416.8 358.6,417.9 359.9,419.0 361.0,420.0 362.1,421.0 363.2,421.9 364.2,422.8 365.2,423.7 366.1,424.5 367.0,425.3 367.8,426.0 368.6,426.8 369.4,427.4 370.2,428.1 370.9,428.7 371.5,429.3 372.2,429.9 372.9,430.5 373.5,431.0 374.6,432.1 375.7,433.0 376.7,433.9 377.6,434.7 378.5,435.5 379.2,436.1 379.9,436.7 380.8,437.5 381.5,438.1 382.1,438.7 382.8,439.3 383.5,439.9 384.2,440.5 384.8,441.1Z M339.1,413.4 173.3,296.4 100.2,530.5Z" fill="#000" fill-opacity="0.4" fill-rule="evenodd"/><path d="M22.5,556.5H26.5M26.5,556.5V561M22.5,513.5H26.5M75.5,556.5V561M22.5,470.5H26.5M124.5,556.5V561M22.5,427.5H26.5M172.5,556.5V561M22.5,383.5H26.5M222.5,556.5V561M22.5,340.5H26.5M270.5,556.5V561M22.5,297.5H26.5M319.5,556.5V561M22.5,254.5H26.5M367.5,556.5V561M22.5,210.5H26.5M417.5,556.5V561" stroke="#a6a6a6" fill="none"/><rect x="172.400" y="406.200" width="13.400" height="13.400" fill="none" stroke="#fff" stroke-opacity=".3" stroke-width="1.200"/><rect x="173.600" y="407.400" width="11" height="11" fill="none" stroke="#000" stroke-width="1.250"/><rect x="467.5" y="158.5" width="424" height="76" fill="#242424" stroke="#a6a6a6"/><path d="M467.5,197.5H891.5" stroke="#8a8a8a"/><path d="M468,233H891" stroke="#14109a" stroke-width="2"/><path d="M463.5,158.5H467.5M463.5,197.5H467.5M463.5,234.5H467.5M467.5,234.5V239.5M509.5,234.5V239.5M552.5,234.5V239.5M594.5,234.5V239.5M636.5,234.5V239.5M679.5,234.5V239.5M721.5,234.5V239.5M764.5,234.5V239.5M806.5,234.5V239.5M848.5,234.5V239.5M891.5,234.5V239.5" stroke="#a6a6a6" fill="none"/><rect x="942.5" y="131.5" width="321" height="349.5" fill="#242424" stroke="#a6a6a6"/><path d="M942.5,453.5H1263.5M942.5,423.5H1263.5M942.5,394.5H1263.5M942.5,365.5H1263.5M942.5,336.5H1263.5M942.5,307.5H1263.5M942.5,277.5H1263.5M942.5,248.5H1263.5M942.5,219.5H1263.5M942.5,189.5H1263.5M942.5,161.5H1263.5" stroke="#8a8a8a" fill="none"/><path d="M938.5,481.5H942.5M938.5,453.5H942.5M938.5,423.5H942.5M938.5,394.5H942.5M938.5,365.5H942.5M938.5,336.5H942.5M938.5,307.5H942.5M938.5,277.5H942.5M938.5,248.5H942.5M938.5,219.5H942.5M938.5,189.5H942.5M938.5,161.5H942.5M942.5,481V486M1006.5,481V486M1070.5,481V486M1134.5,481V486M1198.5,481V486M1262.5,481V486" stroke="#a6a6a6" fill="none"/><path d="M942,481H1264" stroke="#a6a6a6" stroke-width="2"/><clipPath id="ec"><rect x="942" y="131" width="322" height="350.5"/></clipPath><polyline clip-path="url(#ec)" points="942.5,481.6 952.5,460.2 962.6,438.1 972.6,418.6 982.7,401.3 992.7,385.7 1002.7,371.5 1012.8,358.5 1022.8,346.5 1032.9,335.3 1042.9,324.9 1052.9,315.1 1063.0,305.8 1073.0,297.0 1083.0,288.7 1093.1,280.8 1103.1,273.3 1113.2,266.1 1123.2,259.1 1133.2,252.5 1143.3,246.1 1153.3,240.0 1163.4,234.1 1173.4,228.4 1183.4,222.9 1193.5,217.5 1203.5,212.3 1213.6,207.3 1223.6,202.5 1233.6,197.7 1243.7,193.2 1253.7,188.7 1262.5,184.9" fill="none" stroke="#f4f02c" stroke-width="2.2" stroke-linejoin="round"/><rect x="926.5" y="529.5" width="337" height="109" fill="#242424" stroke="#a6a6a6"/><path d="M926.5,579.5H1263.5" stroke="#8a8a8a"/><path d="M922.5,579.5H926.5M922.5,638.5H926.5M926.5,638.5V643M946.5,638.5V643M966.5,638.5V643M985.5,638.5V643M1005.5,638.5V643M1025.5,638.5V643M1045.5,638.5V643M1065.5,638.5V643M1085.5,638.5V643M1104.5,638.5V643M1124.5,638.5V643M1144.5,638.5V643M1164.5,638.5V643M1184.5,638.5V643M1203.5,638.5V643M1223.5,638.5V643M1243.5,638.5V643M1263.5,638.5V643" stroke="#a6a6a6" fill="none"/><path d="M1019.6,514.2h8.2l-4.1,4.8z" fill="#000"/></svg>
</div>
</body></html>
